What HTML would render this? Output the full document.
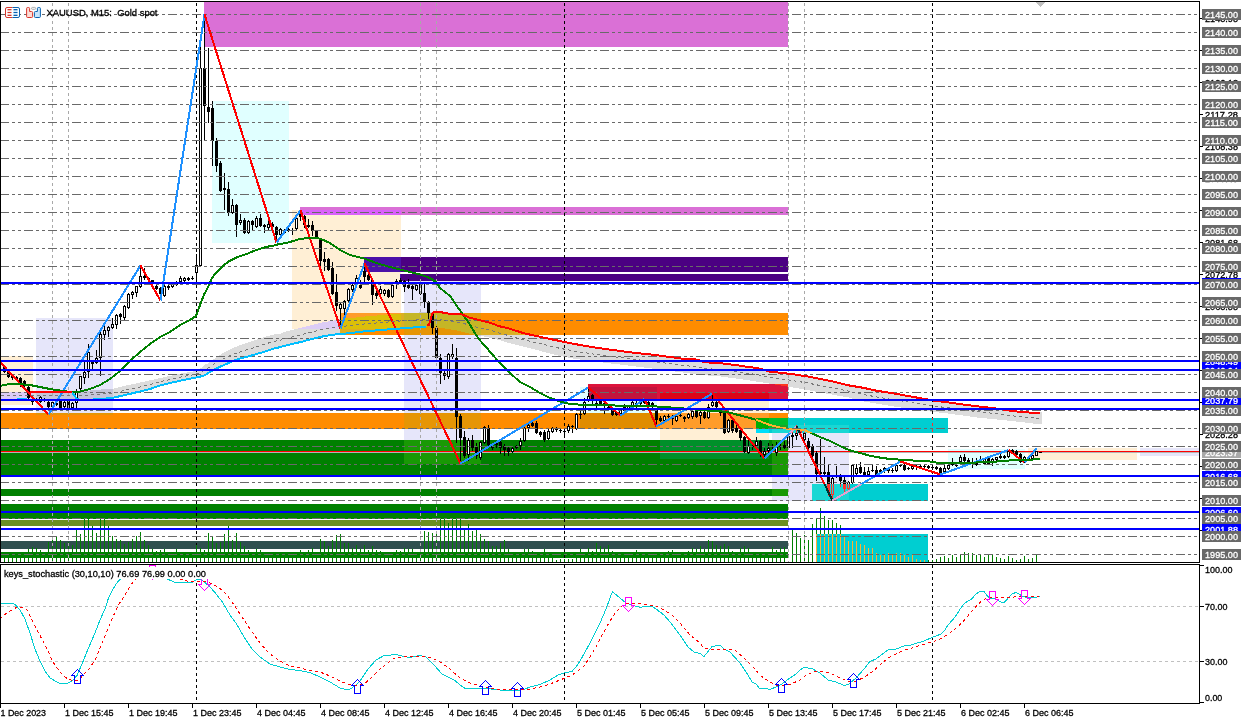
<!DOCTYPE html>
<html lang="en"><head><meta charset="utf-8"><title>XAUUSD, M15: Gold spot</title>
<style>html,body{margin:0;padding:0;background:#fff}svg{display:block;will-change:transform}text{font-family:"Liberation Sans",sans-serif;font-size:9.6px;stroke-width:.3px}</style></head><body>
<svg width="1250" height="720" viewBox="0 0 1250 720" shape-rendering="crispEdges">
<defs>
<clipPath id="main"><rect x="1" y="2" width="1198" height="560"/></clipPath>
<clipPath id="sub"><rect x="1" y="565" width="1198" height="138"/></clipPath>
<clipPath id="tq"><rect x="812" y="484" width="116" height="17"/><rect x="816" y="534" width="112" height="28"/><rect x="756" y="418" width="192" height="15"/></clipPath>
</defs>
<rect width="1250" height="720" fill="#fff"/>
<g clip-path="url(#main)">
<g id="fills">
<rect x="204" y="2" width="584" height="45" fill="#DA70D6"/>
<rect x="212" y="101" width="77" height="142" fill="#E0FFFF"/>
<rect x="300" y="207" width="488" height="3" fill="#DA70D6"/>
<rect x="292" y="210" width="8" height="118" fill="#FFEFD5"/>
<rect x="300" y="210" width="101" height="5" fill="#DA60FC"/>
<rect x="401" y="210" width="387" height="5" fill="#DA70D6"/>
<rect x="300" y="215" width="101" height="42" fill="#FFEFD5"/>
<rect x="300" y="257" width="64" height="56" fill="#FFEFD5"/>
<rect x="364" y="257" width="37" height="15" fill="#4B10A8"/>
<rect x="401" y="257" width="387" height="15" fill="#4B0082"/>
<rect x="364" y="272" width="37" height="2" fill="#FFEFD5"/>
<rect x="364" y="274" width="36" height="39" fill="#FFEFD5"/>
<rect x="400" y="274" width="1" height="7" fill="#4B10A8"/>
<rect x="401" y="274" width="387" height="7" fill="#4B0082"/>
<rect x="400" y="281" width="1" height="32" fill="#FFEFD5"/>
<rect x="404" y="281" width="77" height="31" fill="#E6E6FA"/>
<rect x="404" y="312" width="15" height="1" fill="#E6E6FA"/>
<rect x="419" y="312" width="27" height="1" fill="#C5C5D9"/>
<rect x="446" y="312" width="35" height="1" fill="#E6E6FA"/>
<rect x="300" y="313" width="40" height="6" fill="#FFEFD5"/>
<rect x="340" y="313" width="61" height="1" fill="#FF9C2A"/>
<rect x="401" y="313" width="3" height="15" fill="#DCAF23"/>
<rect x="404" y="313" width="57" height="13" fill="#C5B626"/>
<rect x="461" y="313" width="20" height="1" fill="#E69505"/>
<rect x="481" y="313" width="307" height="7" fill="#FF8C00"/>
<rect x="340" y="314" width="49" height="1" fill="#FF9C2A"/>
<rect x="389" y="314" width="12" height="14" fill="#DCBF09"/>
<rect x="461" y="314" width="3" height="18" fill="#C5B626"/>
<rect x="464" y="314" width="17" height="1" fill="#E69505"/>
<rect x="340" y="315" width="37" height="1" fill="#FF9C2A"/>
<rect x="377" y="315" width="12" height="14" fill="#DCBF09"/>
<rect x="464" y="315" width="2" height="17" fill="#C5B626"/>
<rect x="466" y="315" width="15" height="1" fill="#E69505"/>
<rect x="340" y="316" width="25" height="1" fill="#FF9C2A"/>
<rect x="365" y="316" width="12" height="13" fill="#DCBF09"/>
<rect x="466" y="316" width="2" height="17" fill="#C5B626"/>
<rect x="468" y="316" width="13" height="1" fill="#E69505"/>
<rect x="340" y="317" width="16" height="1" fill="#FF9C2A"/>
<rect x="356" y="317" width="9" height="12" fill="#DCBF09"/>
<rect x="468" y="317" width="3" height="16" fill="#C5B626"/>
<rect x="471" y="317" width="10" height="1" fill="#E69505"/>
<rect x="36" y="318" width="77" height="71" fill="#E6E6FA"/>
<rect x="340" y="318" width="5" height="1" fill="#FF9C2A"/>
<rect x="345" y="318" width="11" height="11" fill="#DCBF09"/>
<rect x="471" y="318" width="4" height="16" fill="#C5B626"/>
<rect x="475" y="318" width="6" height="1" fill="#E69505"/>
<rect x="300" y="319" width="39" height="1" fill="#FFEFD5"/>
<rect x="339" y="319" width="1" height="10" fill="#DCCCF6"/>
<rect x="340" y="319" width="5" height="10" fill="#DCBF09"/>
<rect x="475" y="319" width="4" height="16" fill="#C5B626"/>
<rect x="479" y="319" width="2" height="1" fill="#E69505"/>
<rect x="300" y="320" width="34" height="1" fill="#FFEFD5"/>
<rect x="334" y="320" width="5" height="9" fill="#DCCCF6"/>
<rect x="479" y="320" width="2" height="15" fill="#C5B626"/>
<rect x="481" y="320" width="2" height="15" fill="#DCAF23"/>
<rect x="483" y="320" width="305" height="1" fill="#FF8C00"/>
<rect x="300" y="321" width="28" height="1" fill="#FFEFD5"/>
<rect x="328" y="321" width="6" height="8" fill="#DCCCF6"/>
<rect x="483" y="321" width="4" height="14" fill="#DCAF23"/>
<rect x="487" y="321" width="301" height="1" fill="#FF8C00"/>
<rect x="300" y="322" width="22" height="1" fill="#FFEFD5"/>
<rect x="322" y="322" width="6" height="7" fill="#DCCCF6"/>
<rect x="487" y="322" width="4" height="13" fill="#DCAF23"/>
<rect x="491" y="322" width="297" height="1" fill="#FF8C00"/>
<rect x="300" y="323" width="18" height="1" fill="#FFEFD5"/>
<rect x="318" y="323" width="4" height="6" fill="#DCCCF6"/>
<rect x="491" y="323" width="3" height="12" fill="#DCAF23"/>
<rect x="494" y="323" width="294" height="1" fill="#FF8C00"/>
<rect x="300" y="324" width="14" height="1" fill="#FFEFD5"/>
<rect x="314" y="324" width="4" height="5" fill="#DCCCF6"/>
<rect x="494" y="324" width="2" height="11" fill="#DCAF23"/>
<rect x="496" y="324" width="292" height="1" fill="#FF8C00"/>
<rect x="300" y="325" width="10" height="1" fill="#FFEFD5"/>
<rect x="310" y="325" width="4" height="4" fill="#DCCCF6"/>
<rect x="496" y="325" width="3" height="10" fill="#DCAF23"/>
<rect x="499" y="325" width="289" height="1" fill="#FF8C00"/>
<rect x="300" y="326" width="6" height="1" fill="#FFEFD5"/>
<rect x="306" y="326" width="4" height="3" fill="#DCCCF6"/>
<rect x="404" y="326" width="23" height="1" fill="#C5B626"/>
<rect x="427" y="326" width="6" height="9" fill="#E69505"/>
<rect x="433" y="326" width="28" height="1" fill="#C5B626"/>
<rect x="499" y="326" width="4" height="9" fill="#DCAF23"/>
<rect x="503" y="326" width="285" height="1" fill="#FF8C00"/>
<rect x="300" y="327" width="2" height="1" fill="#FFEFD5"/>
<rect x="302" y="327" width="4" height="2" fill="#DCCCF6"/>
<rect x="404" y="327" width="10" height="1" fill="#C5B626"/>
<rect x="414" y="327" width="13" height="8" fill="#E69505"/>
<rect x="433" y="327" width="5" height="8" fill="#E69505"/>
<rect x="438" y="327" width="23" height="1" fill="#C5B626"/>
<rect x="503" y="327" width="4" height="8" fill="#DCAF23"/>
<rect x="507" y="327" width="281" height="1" fill="#FF8C00"/>
<rect x="292" y="328" width="6" height="1" fill="#FFEFD5"/>
<rect x="298" y="328" width="4" height="1" fill="#DCCCF6"/>
<rect x="389" y="328" width="11" height="1" fill="#DCBF09"/>
<rect x="400" y="328" width="1" height="1" fill="#FF9C2A"/>
<rect x="401" y="328" width="3" height="7" fill="#FF8C00"/>
<rect x="404" y="328" width="10" height="7" fill="#E69505"/>
<rect x="438" y="328" width="7" height="7" fill="#E69505"/>
<rect x="445" y="328" width="16" height="1" fill="#C5B626"/>
<rect x="507" y="328" width="4" height="7" fill="#DCAF23"/>
<rect x="511" y="328" width="277" height="1" fill="#FF8C00"/>
<rect x="294" y="329" width="46" height="5" fill="#DCDCDC"/>
<rect x="340" y="329" width="47" height="1" fill="#DCAF23"/>
<rect x="387" y="329" width="14" height="6" fill="#FF8C00"/>
<rect x="445" y="329" width="6" height="6" fill="#E69505"/>
<rect x="451" y="329" width="10" height="1" fill="#C5B626"/>
<rect x="511" y="329" width="3" height="6" fill="#DCAF23"/>
<rect x="514" y="329" width="274" height="1" fill="#FF8C00"/>
<rect x="290" y="330" width="4" height="14" fill="#DCDCDC"/>
<rect x="340" y="330" width="35" height="1" fill="#DCAF23"/>
<rect x="375" y="330" width="12" height="5" fill="#FF8C00"/>
<rect x="451" y="330" width="6" height="5" fill="#E69505"/>
<rect x="457" y="330" width="4" height="1" fill="#C5B626"/>
<rect x="514" y="330" width="3" height="5" fill="#DCAF23"/>
<rect x="517" y="330" width="271" height="1" fill="#FF8C00"/>
<rect x="286" y="331" width="4" height="14" fill="#DCDCDC"/>
<rect x="340" y="331" width="24" height="1" fill="#DCAF23"/>
<rect x="364" y="331" width="11" height="4" fill="#FF8C00"/>
<rect x="457" y="331" width="4" height="4" fill="#E69505"/>
<rect x="517" y="331" width="4" height="4" fill="#DCAF23"/>
<rect x="521" y="331" width="267" height="1" fill="#FF8C00"/>
<rect x="283" y="332" width="3" height="14" fill="#DCDCDC"/>
<rect x="340" y="332" width="15" height="1" fill="#DCAF23"/>
<rect x="355" y="332" width="9" height="3" fill="#FF8C00"/>
<rect x="461" y="332" width="4" height="3" fill="#E69505"/>
<rect x="465" y="332" width="1" height="1" fill="#C5B626"/>
<rect x="521" y="332" width="3" height="3" fill="#DCAF23"/>
<rect x="524" y="332" width="264" height="1" fill="#FF8C00"/>
<rect x="281" y="333" width="2" height="14" fill="#DCDCDC"/>
<rect x="340" y="333" width="7" height="1" fill="#DCAF23"/>
<rect x="347" y="333" width="8" height="2" fill="#FF8C00"/>
<rect x="465" y="333" width="4" height="2" fill="#E69505"/>
<rect x="469" y="333" width="2" height="1" fill="#C5B626"/>
<rect x="524" y="333" width="3" height="2" fill="#DCAF23"/>
<rect x="527" y="333" width="261" height="1" fill="#FF8C00"/>
<rect x="274" y="334" width="7" height="13" fill="#DCDCDC"/>
<rect x="294" y="334" width="42" height="1" fill="#DCDCDC"/>
<rect x="340" y="334" width="7" height="1" fill="#FF8C00"/>
<rect x="469" y="334" width="4" height="1" fill="#E69505"/>
<rect x="473" y="334" width="2" height="1" fill="#C5B626"/>
<rect x="527" y="334" width="5" height="1" fill="#DCAF23"/>
<rect x="532" y="334" width="256" height="1" fill="#FF8C00"/>
<rect x="270" y="335" width="4" height="14" fill="#DCDCDC"/>
<rect x="294" y="335" width="34" height="1" fill="#DCDCDC"/>
<rect x="404" y="335" width="74" height="78" fill="#E6E6FA"/>
<rect x="478" y="335" width="3" height="1" fill="#C5C5D9"/>
<rect x="481" y="335" width="56" height="1" fill="#DCDCDC"/>
<rect x="266" y="336" width="4" height="14" fill="#DCDCDC"/>
<rect x="294" y="336" width="29" height="1" fill="#DCDCDC"/>
<rect x="478" y="336" width="3" height="77" fill="#E6E6FA"/>
<rect x="484" y="336" width="58" height="1" fill="#DCDCDC"/>
<rect x="263" y="337" width="3" height="15" fill="#DCDCDC"/>
<rect x="294" y="337" width="25" height="1" fill="#DCDCDC"/>
<rect x="489" y="337" width="57" height="1" fill="#DCDCDC"/>
<rect x="260" y="338" width="3" height="15" fill="#DCDCDC"/>
<rect x="294" y="338" width="21" height="1" fill="#DCDCDC"/>
<rect x="493" y="338" width="58" height="1" fill="#DCDCDC"/>
<rect x="257" y="339" width="3" height="14" fill="#DCDCDC"/>
<rect x="294" y="339" width="17" height="1" fill="#DCDCDC"/>
<rect x="497" y="339" width="58" height="1" fill="#DCDCDC"/>
<rect x="254" y="340" width="3" height="14" fill="#DCDCDC"/>
<rect x="294" y="340" width="13" height="1" fill="#DCDCDC"/>
<rect x="501" y="340" width="59" height="1" fill="#DCDCDC"/>
<rect x="251" y="341" width="3" height="14" fill="#DCDCDC"/>
<rect x="294" y="341" width="9" height="1" fill="#DCDCDC"/>
<rect x="504" y="341" width="61" height="1" fill="#DCDCDC"/>
<rect x="248" y="342" width="3" height="14" fill="#DCDCDC"/>
<rect x="294" y="342" width="5" height="1" fill="#DCDCDC"/>
<rect x="507" y="342" width="63" height="1" fill="#DCDCDC"/>
<rect x="245" y="343" width="3" height="14" fill="#DCDCDC"/>
<rect x="294" y="343" width="1" height="1" fill="#DCDCDC"/>
<rect x="511" y="343" width="64" height="1" fill="#DCDCDC"/>
<rect x="242" y="344" width="3" height="14" fill="#DCDCDC"/>
<rect x="515" y="344" width="66" height="1" fill="#DCDCDC"/>
<rect x="239" y="345" width="3" height="13" fill="#DCDCDC"/>
<rect x="286" y="345" width="1" height="1" fill="#DCDCDC"/>
<rect x="519" y="345" width="67" height="1" fill="#DCDCDC"/>
<rect x="237" y="346" width="2" height="13" fill="#DCDCDC"/>
<rect x="523" y="346" width="70" height="1" fill="#DCDCDC"/>
<rect x="234" y="347" width="3" height="13" fill="#DCDCDC"/>
<rect x="274" y="347" width="5" height="1" fill="#DCDCDC"/>
<rect x="527" y="347" width="71" height="1" fill="#DCDCDC"/>
<rect x="232" y="348" width="2" height="13" fill="#DCDCDC"/>
<rect x="274" y="348" width="1" height="1" fill="#DCDCDC"/>
<rect x="531" y="348" width="75" height="1" fill="#DCDCDC"/>
<rect x="230" y="349" width="2" height="13" fill="#DCDCDC"/>
<rect x="270" y="349" width="1" height="1" fill="#DCDCDC"/>
<rect x="535" y="349" width="78" height="1" fill="#DCDCDC"/>
<rect x="228" y="350" width="2" height="13" fill="#DCDCDC"/>
<rect x="266" y="350" width="2" height="1" fill="#DCDCDC"/>
<rect x="539" y="350" width="82" height="1" fill="#DCDCDC"/>
<rect x="226" y="351" width="2" height="13" fill="#DCDCDC"/>
<rect x="542" y="351" width="86" height="1" fill="#DCDCDC"/>
<rect x="224" y="352" width="2" height="13" fill="#DCDCDC"/>
<rect x="546" y="352" width="91" height="1" fill="#DCDCDC"/>
<rect x="222" y="353" width="2" height="12" fill="#DCDCDC"/>
<rect x="257" y="353" width="2" height="1" fill="#DCDCDC"/>
<rect x="550" y="353" width="96" height="1" fill="#DCDCDC"/>
<rect x="221" y="354" width="1" height="12" fill="#DCDCDC"/>
<rect x="254" y="354" width="1" height="1" fill="#DCDCDC"/>
<rect x="554" y="354" width="102" height="1" fill="#DCDCDC"/>
<rect x="219" y="355" width="2" height="12" fill="#DCDCDC"/>
<rect x="251" y="355" width="1" height="1" fill="#DCDCDC"/>
<rect x="558" y="355" width="105" height="1" fill="#DCDCDC"/>
<rect x="1" y="356" width="32" height="36" fill="#FFEFD5"/>
<rect x="217" y="356" width="2" height="12" fill="#DCDCDC"/>
<rect x="248" y="356" width="1" height="1" fill="#DCDCDC"/>
<rect x="563" y="356" width="108" height="1" fill="#DCDCDC"/>
<rect x="216" y="357" width="1" height="12" fill="#DCDCDC"/>
<rect x="568" y="357" width="110" height="1" fill="#DCDCDC"/>
<rect x="215" y="358" width="1" height="11" fill="#DCDCDC"/>
<rect x="239" y="358" width="2" height="1" fill="#DCDCDC"/>
<rect x="573" y="358" width="117" height="1" fill="#DCDCDC"/>
<rect x="213" y="359" width="2" height="11" fill="#DCDCDC"/>
<rect x="237" y="359" width="1" height="1" fill="#DCDCDC"/>
<rect x="580" y="359" width="119" height="1" fill="#DCDCDC"/>
<rect x="212" y="360" width="1" height="11" fill="#DCDCDC"/>
<rect x="234" y="360" width="1" height="1" fill="#DCDCDC"/>
<rect x="588" y="360" width="113" height="1" fill="#DCDCDC"/>
<rect x="211" y="361" width="1" height="10" fill="#DCDCDC"/>
<rect x="595" y="361" width="109" height="1" fill="#DCDCDC"/>
<rect x="209" y="362" width="2" height="10" fill="#DCDCDC"/>
<rect x="603" y="362" width="113" height="1" fill="#DCDCDC"/>
<rect x="208" y="363" width="1" height="10" fill="#DCDCDC"/>
<rect x="611" y="363" width="118" height="1" fill="#DCDCDC"/>
<rect x="205" y="364" width="3" height="10" fill="#DCDCDC"/>
<rect x="620" y="364" width="115" height="1" fill="#DCDCDC"/>
<rect x="204" y="365" width="1" height="11" fill="#DCDCDC"/>
<rect x="222" y="365" width="1" height="1" fill="#DCDCDC"/>
<rect x="628" y="365" width="114" height="1" fill="#DCDCDC"/>
<rect x="203" y="366" width="1" height="10" fill="#DCDCDC"/>
<rect x="636" y="366" width="113" height="1" fill="#DCDCDC"/>
<rect x="202" y="367" width="1" height="9" fill="#DCDCDC"/>
<rect x="644" y="367" width="113" height="1" fill="#DCDCDC"/>
<rect x="200" y="368" width="2" height="8" fill="#DCDCDC"/>
<rect x="652" y="368" width="109" height="1" fill="#DCDCDC"/>
<rect x="199" y="369" width="1" height="8" fill="#DCDCDC"/>
<rect x="660" y="369" width="105" height="1" fill="#DCDCDC"/>
<rect x="197" y="370" width="2" height="7" fill="#DCDCDC"/>
<rect x="668" y="370" width="100" height="1" fill="#DCDCDC"/>
<rect x="193" y="371" width="4" height="7" fill="#DCDCDC"/>
<rect x="675" y="371" width="99" height="1" fill="#DCDCDC"/>
<rect x="187" y="372" width="6" height="6" fill="#DCDCDC"/>
<rect x="209" y="372" width="1" height="1" fill="#DCDCDC"/>
<rect x="683" y="372" width="101" height="1" fill="#DCDCDC"/>
<rect x="181" y="373" width="6" height="7" fill="#DCDCDC"/>
<rect x="690" y="373" width="101" height="1" fill="#DCDCDC"/>
<rect x="176" y="374" width="5" height="7" fill="#DCDCDC"/>
<rect x="205" y="374" width="1" height="1" fill="#DCDCDC"/>
<rect x="697" y="374" width="102" height="1" fill="#DCDCDC"/>
<rect x="172" y="375" width="4" height="7" fill="#DCDCDC"/>
<rect x="708" y="375" width="98" height="1" fill="#DCDCDC"/>
<rect x="167" y="376" width="5" height="7" fill="#DCDCDC"/>
<rect x="200" y="376" width="1" height="1" fill="#DCDCDC"/>
<rect x="721" y="376" width="90" height="1" fill="#DCDCDC"/>
<rect x="163" y="377" width="4" height="7" fill="#DCDCDC"/>
<rect x="728" y="377" width="88" height="1" fill="#DCDCDC"/>
<rect x="158" y="378" width="5" height="7" fill="#DCDCDC"/>
<rect x="187" y="378" width="4" height="1" fill="#DCDCDC"/>
<rect x="736" y="378" width="85" height="1" fill="#DCDCDC"/>
<rect x="154" y="379" width="4" height="8" fill="#DCDCDC"/>
<rect x="743" y="379" width="83" height="1" fill="#DCDCDC"/>
<rect x="149" y="380" width="5" height="8" fill="#DCDCDC"/>
<rect x="750" y="380" width="81" height="1" fill="#DCDCDC"/>
<rect x="145" y="381" width="4" height="9" fill="#DCDCDC"/>
<rect x="176" y="381" width="1" height="1" fill="#DCDCDC"/>
<rect x="756" y="381" width="80" height="1" fill="#DCDCDC"/>
<rect x="140" y="382" width="5" height="8" fill="#DCDCDC"/>
<rect x="172" y="382" width="1" height="1" fill="#DCDCDC"/>
<rect x="763" y="382" width="77" height="1" fill="#DCDCDC"/>
<rect x="136" y="383" width="4" height="9" fill="#DCDCDC"/>
<rect x="167" y="383" width="2" height="1" fill="#DCDCDC"/>
<rect x="769" y="383" width="75" height="1" fill="#DCDCDC"/>
<rect x="131" y="384" width="5" height="9" fill="#DCDCDC"/>
<rect x="163" y="384" width="2" height="1" fill="#DCDCDC"/>
<rect x="588" y="384" width="187" height="3" fill="#DC143C"/>
<rect x="775" y="384" width="13" height="1" fill="#FF371F"/>
<rect x="788" y="384" width="60" height="3" fill="#DCDCDC"/>
<rect x="126" y="385" width="5" height="9" fill="#DCDCDC"/>
<rect x="158" y="385" width="3" height="1" fill="#DCDCDC"/>
<rect x="775" y="385" width="6" height="14" fill="#DC143C"/>
<rect x="781" y="385" width="7" height="1" fill="#FF371F"/>
<rect x="848" y="385" width="5" height="12" fill="#DCDCDC"/>
<rect x="122" y="386" width="4" height="9" fill="#DCDCDC"/>
<rect x="781" y="386" width="6" height="13" fill="#DC143C"/>
<rect x="787" y="386" width="1" height="1" fill="#FF371F"/>
<rect x="853" y="386" width="6" height="13" fill="#DCDCDC"/>
<rect x="118" y="387" width="4" height="9" fill="#DCDCDC"/>
<rect x="154" y="387" width="1" height="1" fill="#DCDCDC"/>
<rect x="580" y="387" width="8" height="26" fill="#E0FFFF"/>
<rect x="588" y="387" width="69" height="12" fill="#C3143C"/>
<rect x="657" y="387" width="118" height="6" fill="#DC143C"/>
<rect x="787" y="387" width="1" height="12" fill="#DC143C"/>
<rect x="793" y="387" width="55" height="1" fill="#DCDCDC"/>
<rect x="859" y="387" width="6" height="14" fill="#DCDCDC"/>
<rect x="114" y="388" width="4" height="9" fill="#DCDCDC"/>
<rect x="149" y="388" width="3" height="1" fill="#DCDCDC"/>
<rect x="799" y="388" width="49" height="1" fill="#DCDCDC"/>
<rect x="865" y="388" width="4" height="14" fill="#DCDCDC"/>
<rect x="36" y="389" width="65" height="1" fill="#E6E6FA"/>
<rect x="101" y="389" width="12" height="9" fill="#C5C5D9"/>
<rect x="113" y="389" width="1" height="9" fill="#DCDCDC"/>
<rect x="805" y="389" width="43" height="1" fill="#DCDCDC"/>
<rect x="869" y="389" width="5" height="13" fill="#DCDCDC"/>
<rect x="36" y="390" width="54" height="1" fill="#E6E6FA"/>
<rect x="90" y="390" width="11" height="9" fill="#C5C5D9"/>
<rect x="140" y="390" width="4" height="1" fill="#DCDCDC"/>
<rect x="810" y="390" width="38" height="1" fill="#DCDCDC"/>
<rect x="874" y="390" width="5" height="13" fill="#DCDCDC"/>
<rect x="36" y="391" width="43" height="1" fill="#E6E6FA"/>
<rect x="79" y="391" width="11" height="9" fill="#C5C5D9"/>
<rect x="140" y="391" width="1" height="1" fill="#DCDCDC"/>
<rect x="815" y="391" width="33" height="1" fill="#DCDCDC"/>
<rect x="879" y="391" width="6" height="13" fill="#DCDCDC"/>
<rect x="1" y="392" width="32" height="7" fill="#DCCCF6"/>
<rect x="33" y="392" width="3" height="7" fill="#DCDCDC"/>
<rect x="36" y="392" width="43" height="7" fill="#C5C5D9"/>
<rect x="820" y="392" width="28" height="1" fill="#DCDCDC"/>
<rect x="885" y="392" width="6" height="13" fill="#DCDCDC"/>
<rect x="131" y="393" width="1" height="1" fill="#DCDCDC"/>
<rect x="657" y="393" width="3" height="6" fill="#DC143C"/>
<rect x="660" y="393" width="109" height="6" fill="#DC0416"/>
<rect x="769" y="393" width="6" height="6" fill="#DC143C"/>
<rect x="826" y="393" width="22" height="1" fill="#DCDCDC"/>
<rect x="891" y="393" width="6" height="13" fill="#DCDCDC"/>
<rect x="126" y="394" width="2" height="1" fill="#DCDCDC"/>
<rect x="832" y="394" width="16" height="1" fill="#DCDCDC"/>
<rect x="897" y="394" width="6" height="13" fill="#DCDCDC"/>
<rect x="122" y="395" width="1" height="1" fill="#DCDCDC"/>
<rect x="837" y="395" width="11" height="1" fill="#DCDCDC"/>
<rect x="903" y="395" width="6" height="13" fill="#DCDCDC"/>
<rect x="118" y="396" width="1" height="1" fill="#DCDCDC"/>
<rect x="843" y="396" width="5" height="1" fill="#DCDCDC"/>
<rect x="909" y="396" width="5" height="13" fill="#DCDCDC"/>
<rect x="114" y="397" width="1" height="1" fill="#DCDCDC"/>
<rect x="849" y="397" width="4" height="1" fill="#DCDCDC"/>
<rect x="914" y="397" width="6" height="13" fill="#DCDCDC"/>
<rect x="101" y="398" width="5" height="1" fill="#C5C5D9"/>
<rect x="106" y="398" width="7" height="15" fill="#E6E6FA"/>
<rect x="852" y="398" width="1" height="1" fill="#DCDCDC"/>
<rect x="920" y="398" width="5" height="12" fill="#DCDCDC"/>
<rect x="1" y="399" width="32" height="6" fill="#FFEFD5"/>
<rect x="36" y="399" width="43" height="14" fill="#E6E6FA"/>
<rect x="90" y="399" width="4" height="1" fill="#C5C5D9"/>
<rect x="94" y="399" width="12" height="14" fill="#E6E6FA"/>
<rect x="588" y="399" width="69" height="14" fill="#E0FFFF"/>
<rect x="660" y="399" width="109" height="14" fill="#FFEFD5"/>
<rect x="856" y="399" width="3" height="1" fill="#DCDCDC"/>
<rect x="925" y="399" width="6" height="12" fill="#DCDCDC"/>
<rect x="79" y="400" width="15" height="13" fill="#E6E6FA"/>
<rect x="931" y="400" width="6" height="12" fill="#DCDCDC"/>
<rect x="864" y="401" width="1" height="1" fill="#DCDCDC"/>
<rect x="937" y="401" width="8" height="11" fill="#DCDCDC"/>
<rect x="870" y="402" width="4" height="1" fill="#DCDCDC"/>
<rect x="945" y="402" width="8" height="11" fill="#DCDCDC"/>
<rect x="876" y="403" width="3" height="1" fill="#DCDCDC"/>
<rect x="953" y="403" width="7" height="11" fill="#DCDCDC"/>
<rect x="882" y="404" width="3" height="1" fill="#DCDCDC"/>
<rect x="960" y="404" width="8" height="11" fill="#DCDCDC"/>
<rect x="888" y="405" width="3" height="1" fill="#DCDCDC"/>
<rect x="968" y="405" width="8" height="11" fill="#DCDCDC"/>
<rect x="894" y="406" width="3" height="1" fill="#DCDCDC"/>
<rect x="976" y="406" width="8" height="11" fill="#DCDCDC"/>
<rect x="901" y="407" width="2" height="1" fill="#DCDCDC"/>
<rect x="984" y="407" width="9" height="11" fill="#DCDCDC"/>
<rect x="908" y="408" width="1" height="1" fill="#DCDCDC"/>
<rect x="993" y="408" width="7" height="11" fill="#DCDCDC"/>
<rect x="1000" y="409" width="6" height="11" fill="#DCDCDC"/>
<rect x="921" y="410" width="4" height="1" fill="#DCDCDC"/>
<rect x="1006" y="410" width="7" height="10" fill="#DCDCDC"/>
<rect x="930" y="411" width="1" height="1" fill="#DCDCDC"/>
<rect x="1013" y="411" width="10" height="10" fill="#DCDCDC"/>
<rect x="939" y="412" width="6" height="1" fill="#DCDCDC"/>
<rect x="1023" y="412" width="19" height="10" fill="#DCDCDC"/>
<rect x="1" y="413" width="35" height="16" fill="#FF8C00"/>
<rect x="36" y="413" width="77" height="2" fill="#E69505"/>
<rect x="113" y="413" width="291" height="16" fill="#FF8C00"/>
<rect x="404" y="413" width="77" height="16" fill="#E69505"/>
<rect x="481" y="413" width="99" height="16" fill="#FF8C00"/>
<rect x="580" y="413" width="77" height="15" fill="#E08C00"/>
<rect x="657" y="413" width="3" height="16" fill="#FF8C00"/>
<rect x="660" y="413" width="109" height="5" fill="#FF9C2A"/>
<rect x="769" y="413" width="19" height="5" fill="#FF8C00"/>
<rect x="948" y="413" width="5" height="1" fill="#DCDCDC"/>
<rect x="955" y="414" width="5" height="1" fill="#DCDCDC"/>
<rect x="36" y="415" width="77" height="14" fill="#FF8C00"/>
<rect x="963" y="415" width="5" height="1" fill="#DCDCDC"/>
<rect x="970" y="416" width="6" height="1" fill="#DCDCDC"/>
<rect x="977" y="417" width="7" height="1" fill="#DCDCDC"/>
<rect x="660" y="418" width="96" height="11" fill="#FF9C2A"/>
<rect x="756" y="418" width="13" height="11" fill="#00AD04"/>
<rect x="769" y="418" width="19" height="7" fill="#00BD2E"/>
<rect x="788" y="418" width="160" height="7" fill="#00CED1"/>
<rect x="987" y="418" width="6" height="1" fill="#DCDCDC"/>
<rect x="997" y="419" width="3" height="1" fill="#DCDCDC"/>
<rect x="1007" y="420" width="6" height="1" fill="#DCDCDC"/>
<rect x="1016" y="421" width="7" height="1" fill="#DCDCDC"/>
<rect x="1025" y="422" width="17" height="1" fill="#DCDCDC"/>
<rect x="1033" y="423" width="9" height="1" fill="#DCDCDC"/>
<rect x="769" y="425" width="3" height="4" fill="#00BD2E"/>
<rect x="772" y="425" width="16" height="4" fill="#19A42B"/>
<rect x="788" y="425" width="61" height="8" fill="#19D7D4"/>
<rect x="849" y="425" width="99" height="8" fill="#00CED1"/>
<rect x="580" y="428" width="77" height="1" fill="#FF8C00"/>
<rect x="404" y="429" width="77" height="11" fill="#E6E6FA"/>
<rect x="660" y="429" width="96" height="11" fill="#FFEFD5"/>
<rect x="756" y="429" width="13" height="4" fill="#00DEFB"/>
<rect x="769" y="429" width="3" height="4" fill="#00CED1"/>
<rect x="772" y="429" width="16" height="4" fill="#19D7D4"/>
<rect x="756" y="433" width="13" height="7" fill="#FFEFD5"/>
<rect x="772" y="433" width="77" height="7" fill="#E6E6FA"/>
<rect x="1" y="440" width="403" height="36" fill="#008000"/>
<rect x="404" y="440" width="77" height="24" fill="#199905"/>
<rect x="481" y="440" width="179" height="36" fill="#008000"/>
<rect x="660" y="440" width="109" height="19" fill="#00902A"/>
<rect x="769" y="440" width="3" height="36" fill="#008000"/>
<rect x="772" y="440" width="16" height="36" fill="#199905"/>
<rect x="788" y="440" width="61" height="44" fill="#E6E6FA"/>
<rect x="1028" y="448" width="109" height="12" fill="#FFEFD5"/>
<rect x="1140" y="448" width="59" height="8" fill="#E6E6FA"/>
<rect x="948" y="449" width="77" height="20" fill="#E0FFFF"/>
<rect x="660" y="459" width="109" height="17" fill="#008000"/>
<rect x="404" y="464" width="77" height="12" fill="#008000"/>
<rect x="772" y="476" width="16" height="13" fill="#E6E6FA"/>
<rect x="788" y="484" width="24" height="17" fill="#E6E6FA"/>
<rect x="812" y="484" width="37" height="17" fill="#19D7D4"/>
<rect x="849" y="484" width="79" height="17" fill="#00CED1"/>
<rect x="1" y="489" width="771" height="7" fill="#008000"/>
<rect x="772" y="489" width="16" height="7" fill="#199905"/>
<rect x="772" y="496" width="16" height="5" fill="#E6E6FA"/>
<rect x="1" y="504" width="787" height="15" fill="#008000"/>
<rect x="1" y="520" width="787" height="6" fill="#6B8E23"/>
<rect x="816" y="534" width="112" height="28" fill="#00CED1"/>
<rect x="1" y="541" width="787" height="8" fill="#2F4F4F"/>
<rect x="1" y="552" width="787" height="6" fill="#008000"/>
</g>
<g id="bidask"><rect x="1" y="451" width="1198" height="1" fill="#FF0000"/><rect x="1" y="452" width="1198" height="1" fill="#B4B4B4"/></g>
<g id="separators"><line x1="196.5" y1="2" x2="196.5" y2="562" stroke="#000" stroke-width="1" stroke-dasharray="3 3" stroke-dashoffset="-1"/>
<line x1="564.5" y1="2" x2="564.5" y2="562" stroke="#000" stroke-width="1" stroke-dasharray="3 3" stroke-dashoffset="-1"/>
<line x1="932.5" y1="2" x2="932.5" y2="562" stroke="#000" stroke-width="1" stroke-dasharray="3 3" stroke-dashoffset="-1"/></g>
<g id="volumes"><rect x="4" y="557" width="1" height="5" fill="#008000"/>
<rect x="8" y="557" width="1" height="5" fill="#008000"/>
<rect x="12" y="557" width="1" height="5" fill="#008000"/>
<rect x="16" y="557" width="1" height="5" fill="#008000"/>
<rect x="20" y="557" width="1" height="5" fill="#008000"/>
<rect x="24" y="557" width="1" height="5" fill="#008000"/>
<rect x="28" y="549" width="1" height="13" fill="#008000"/>
<rect x="32" y="547" width="1" height="15" fill="#008000"/>
<rect x="36" y="548" width="1" height="14" fill="#008000"/>
<rect x="40" y="550" width="1" height="12" fill="#008000"/>
<rect x="44" y="558" width="1" height="4" fill="#008000"/>
<rect x="48" y="542" width="1" height="20" fill="#008000"/>
<rect x="52" y="540" width="1" height="22" fill="#008000"/>
<rect x="56" y="537" width="1" height="25" fill="#008000"/>
<rect x="60" y="540" width="1" height="22" fill="#008000"/>
<rect x="64" y="543" width="1" height="19" fill="#008000"/>
<rect x="68" y="542" width="1" height="20" fill="#008000"/>
<rect x="72" y="545" width="1" height="17" fill="#008000"/>
<rect x="76" y="530" width="1" height="32" fill="#008000"/>
<rect x="80" y="534" width="1" height="28" fill="#008000"/>
<rect x="84" y="519" width="1" height="43" fill="#008000"/>
<rect x="88" y="519" width="1" height="43" fill="#008000"/>
<rect x="92" y="526" width="1" height="36" fill="#008000"/>
<rect x="96" y="533" width="1" height="29" fill="#008000"/>
<rect x="100" y="519" width="1" height="43" fill="#008000"/>
<rect x="104" y="519" width="1" height="43" fill="#008000"/>
<rect x="108" y="526" width="1" height="36" fill="#008000"/>
<rect x="112" y="536" width="1" height="26" fill="#008000"/>
<rect x="116" y="539" width="1" height="23" fill="#008000"/>
<rect x="120" y="540" width="1" height="22" fill="#008000"/>
<rect x="124" y="544" width="1" height="18" fill="#008000"/>
<rect x="128" y="542" width="1" height="20" fill="#008000"/>
<rect x="132" y="539" width="1" height="23" fill="#008000"/>
<rect x="136" y="536" width="1" height="26" fill="#008000"/>
<rect x="140" y="532" width="1" height="30" fill="#008000"/>
<rect x="144" y="540" width="1" height="22" fill="#008000"/>
<rect x="148" y="545" width="1" height="17" fill="#008000"/>
<rect x="152" y="549" width="1" height="13" fill="#008000"/>
<rect x="156" y="551" width="1" height="11" fill="#008000"/>
<rect x="160" y="550" width="1" height="12" fill="#008000"/>
<rect x="164" y="549" width="1" height="13" fill="#008000"/>
<rect x="168" y="558" width="1" height="4" fill="#008000"/>
<rect x="172" y="558" width="1" height="4" fill="#008000"/>
<rect x="176" y="549" width="1" height="13" fill="#008000"/>
<rect x="180" y="558" width="1" height="4" fill="#008000"/>
<rect x="184" y="558" width="1" height="4" fill="#008000"/>
<rect x="188" y="558" width="1" height="4" fill="#008000"/>
<rect x="192" y="558" width="1" height="4" fill="#008000"/>
<rect x="196" y="545" width="1" height="17" fill="#008000"/>
<rect x="200" y="548" width="1" height="14" fill="#008000"/>
<rect x="204" y="550" width="1" height="12" fill="#008000"/>
<rect x="208" y="533" width="1" height="29" fill="#008000"/>
<rect x="212" y="537" width="1" height="25" fill="#008000"/>
<rect x="216" y="543" width="1" height="19" fill="#008000"/>
<rect x="220" y="542" width="1" height="20" fill="#008000"/>
<rect x="224" y="534" width="1" height="28" fill="#008000"/>
<rect x="228" y="526" width="1" height="36" fill="#008000"/>
<rect x="232" y="540" width="1" height="22" fill="#008000"/>
<rect x="236" y="533" width="1" height="29" fill="#008000"/>
<rect x="240" y="542" width="1" height="20" fill="#008000"/>
<rect x="244" y="546" width="1" height="16" fill="#008000"/>
<rect x="248" y="550" width="1" height="12" fill="#008000"/>
<rect x="252" y="558" width="1" height="4" fill="#008000"/>
<rect x="256" y="549" width="1" height="13" fill="#008000"/>
<rect x="260" y="550" width="1" height="12" fill="#008000"/>
<rect x="264" y="558" width="1" height="4" fill="#008000"/>
<rect x="268" y="558" width="1" height="4" fill="#008000"/>
<rect x="272" y="558" width="1" height="4" fill="#008000"/>
<rect x="276" y="558" width="1" height="4" fill="#008000"/>
<rect x="280" y="558" width="1" height="4" fill="#008000"/>
<rect x="284" y="558" width="1" height="4" fill="#008000"/>
<rect x="288" y="558" width="1" height="4" fill="#008000"/>
<rect x="292" y="558" width="1" height="4" fill="#008000"/>
<rect x="296" y="558" width="1" height="4" fill="#008000"/>
<rect x="300" y="550" width="1" height="12" fill="#008000"/>
<rect x="304" y="558" width="1" height="4" fill="#008000"/>
<rect x="308" y="550" width="1" height="12" fill="#008000"/>
<rect x="312" y="548" width="1" height="14" fill="#008000"/>
<rect x="316" y="558" width="1" height="4" fill="#008000"/>
<rect x="320" y="539" width="1" height="23" fill="#008000"/>
<rect x="324" y="541" width="1" height="21" fill="#008000"/>
<rect x="328" y="546" width="1" height="16" fill="#008000"/>
<rect x="332" y="540" width="1" height="22" fill="#008000"/>
<rect x="336" y="535" width="1" height="27" fill="#008000"/>
<rect x="340" y="534" width="1" height="28" fill="#008000"/>
<rect x="344" y="543" width="1" height="19" fill="#008000"/>
<rect x="348" y="543" width="1" height="19" fill="#008000"/>
<rect x="352" y="548" width="1" height="14" fill="#008000"/>
<rect x="356" y="545" width="1" height="17" fill="#008000"/>
<rect x="360" y="549" width="1" height="13" fill="#008000"/>
<rect x="364" y="545" width="1" height="17" fill="#008000"/>
<rect x="368" y="550" width="1" height="12" fill="#008000"/>
<rect x="372" y="546" width="1" height="16" fill="#008000"/>
<rect x="376" y="550" width="1" height="12" fill="#008000"/>
<rect x="380" y="551" width="1" height="11" fill="#008000"/>
<rect x="384" y="558" width="1" height="4" fill="#008000"/>
<rect x="388" y="558" width="1" height="4" fill="#008000"/>
<rect x="392" y="558" width="1" height="4" fill="#008000"/>
<rect x="396" y="550" width="1" height="12" fill="#008000"/>
<rect x="400" y="551" width="1" height="11" fill="#008000"/>
<rect x="404" y="548" width="1" height="14" fill="#008000"/>
<rect x="408" y="549" width="1" height="13" fill="#008000"/>
<rect x="412" y="549" width="1" height="13" fill="#008000"/>
<rect x="416" y="558" width="1" height="4" fill="#008000"/>
<rect x="420" y="558" width="1" height="4" fill="#008000"/>
<rect x="424" y="531" width="1" height="31" fill="#008000"/>
<rect x="428" y="532" width="1" height="30" fill="#008000"/>
<rect x="432" y="533" width="1" height="29" fill="#008000"/>
<rect x="436" y="531" width="1" height="31" fill="#008000"/>
<rect x="440" y="519" width="1" height="43" fill="#008000"/>
<rect x="444" y="519" width="1" height="43" fill="#008000"/>
<rect x="448" y="523" width="1" height="39" fill="#008000"/>
<rect x="452" y="519" width="1" height="43" fill="#008000"/>
<rect x="456" y="519" width="1" height="43" fill="#008000"/>
<rect x="460" y="519" width="1" height="43" fill="#008000"/>
<rect x="464" y="529" width="1" height="33" fill="#008000"/>
<rect x="468" y="524" width="1" height="38" fill="#008000"/>
<rect x="472" y="531" width="1" height="31" fill="#008000"/>
<rect x="476" y="530" width="1" height="32" fill="#008000"/>
<rect x="480" y="534" width="1" height="28" fill="#008000"/>
<rect x="484" y="539" width="1" height="23" fill="#008000"/>
<rect x="488" y="541" width="1" height="21" fill="#008000"/>
<rect x="492" y="546" width="1" height="16" fill="#008000"/>
<rect x="496" y="546" width="1" height="16" fill="#008000"/>
<rect x="500" y="543" width="1" height="19" fill="#008000"/>
<rect x="504" y="540" width="1" height="22" fill="#008000"/>
<rect x="508" y="549" width="1" height="13" fill="#008000"/>
<rect x="512" y="558" width="1" height="4" fill="#008000"/>
<rect x="516" y="558" width="1" height="4" fill="#008000"/>
<rect x="520" y="558" width="1" height="4" fill="#008000"/>
<rect x="524" y="549" width="1" height="13" fill="#008000"/>
<rect x="528" y="549" width="1" height="13" fill="#008000"/>
<rect x="532" y="551" width="1" height="11" fill="#008000"/>
<rect x="536" y="558" width="1" height="4" fill="#008000"/>
<rect x="540" y="558" width="1" height="4" fill="#008000"/>
<rect x="544" y="549" width="1" height="13" fill="#008000"/>
<rect x="548" y="558" width="1" height="4" fill="#008000"/>
<rect x="552" y="558" width="1" height="4" fill="#008000"/>
<rect x="556" y="560" width="1" height="2" fill="#008000"/>
<rect x="560" y="559" width="1" height="3" fill="#008000"/>
<rect x="564" y="559" width="1" height="3" fill="#008000"/>
<rect x="568" y="559" width="1" height="3" fill="#008000"/>
<rect x="572" y="559" width="1" height="3" fill="#008000"/>
<rect x="576" y="558" width="1" height="4" fill="#008000"/>
<rect x="580" y="549" width="1" height="13" fill="#008000"/>
<rect x="584" y="558" width="1" height="4" fill="#008000"/>
<rect x="588" y="548" width="1" height="14" fill="#008000"/>
<rect x="592" y="551" width="1" height="11" fill="#008000"/>
<rect x="596" y="543" width="1" height="19" fill="#008000"/>
<rect x="600" y="546" width="1" height="16" fill="#008000"/>
<rect x="604" y="548" width="1" height="14" fill="#008000"/>
<rect x="608" y="545" width="1" height="17" fill="#008000"/>
<rect x="612" y="551" width="1" height="11" fill="#008000"/>
<rect x="616" y="558" width="1" height="4" fill="#008000"/>
<rect x="620" y="558" width="1" height="4" fill="#008000"/>
<rect x="624" y="558" width="1" height="4" fill="#008000"/>
<rect x="628" y="558" width="1" height="4" fill="#008000"/>
<rect x="632" y="558" width="1" height="4" fill="#008000"/>
<rect x="636" y="550" width="1" height="12" fill="#008000"/>
<rect x="640" y="558" width="1" height="4" fill="#008000"/>
<rect x="644" y="558" width="1" height="4" fill="#008000"/>
<rect x="648" y="558" width="1" height="4" fill="#008000"/>
<rect x="652" y="558" width="1" height="4" fill="#008000"/>
<rect x="656" y="558" width="1" height="4" fill="#008000"/>
<rect x="660" y="558" width="1" height="4" fill="#008000"/>
<rect x="664" y="558" width="1" height="4" fill="#008000"/>
<rect x="668" y="551" width="1" height="11" fill="#008000"/>
<rect x="672" y="550" width="1" height="12" fill="#008000"/>
<rect x="676" y="558" width="1" height="4" fill="#008000"/>
<rect x="680" y="558" width="1" height="4" fill="#008000"/>
<rect x="684" y="558" width="1" height="4" fill="#008000"/>
<rect x="688" y="551" width="1" height="11" fill="#008000"/>
<rect x="692" y="548" width="1" height="14" fill="#008000"/>
<rect x="696" y="549" width="1" height="13" fill="#008000"/>
<rect x="700" y="546" width="1" height="16" fill="#008000"/>
<rect x="704" y="549" width="1" height="13" fill="#008000"/>
<rect x="708" y="540" width="1" height="22" fill="#008000"/>
<rect x="712" y="541" width="1" height="21" fill="#008000"/>
<rect x="716" y="545" width="1" height="17" fill="#008000"/>
<rect x="720" y="546" width="1" height="16" fill="#008000"/>
<rect x="724" y="544" width="1" height="18" fill="#008000"/>
<rect x="728" y="546" width="1" height="16" fill="#008000"/>
<rect x="732" y="551" width="1" height="11" fill="#008000"/>
<rect x="736" y="558" width="1" height="4" fill="#008000"/>
<rect x="740" y="548" width="1" height="14" fill="#008000"/>
<rect x="744" y="546" width="1" height="16" fill="#008000"/>
<rect x="748" y="548" width="1" height="14" fill="#008000"/>
<rect x="752" y="558" width="1" height="4" fill="#008000"/>
<rect x="756" y="558" width="1" height="4" fill="#008000"/>
<rect x="760" y="558" width="1" height="4" fill="#008000"/>
<rect x="764" y="558" width="1" height="4" fill="#008000"/>
<rect x="768" y="558" width="1" height="4" fill="#008000"/>
<rect x="772" y="547" width="1" height="15" fill="#008000"/>
<rect x="776" y="550" width="1" height="12" fill="#008000"/>
<rect x="780" y="548" width="1" height="14" fill="#008000"/>
<rect x="784" y="547" width="1" height="15" fill="#008000"/>
<rect x="792" y="530" width="1" height="32" fill="#008000"/>
<rect x="796" y="533" width="1" height="29" fill="#008000"/>
<rect x="800" y="538" width="1" height="24" fill="#008000"/>
<rect x="804" y="535" width="1" height="27" fill="#008000"/>
<rect x="808" y="540" width="1" height="22" fill="#008000"/>
<rect x="812" y="524" width="1" height="38" fill="#008000"/>
<rect x="816" y="519" width="1" height="43" fill="#008000"/>
<rect x="820" y="508" width="1" height="54" fill="#008000"/>
<rect x="824" y="516" width="1" height="46" fill="#008000"/>
<rect x="828" y="520" width="1" height="42" fill="#008000"/>
<rect x="832" y="520" width="1" height="42" fill="#008000"/>
<rect x="836" y="523" width="1" height="39" fill="#008000"/>
<rect x="840" y="525" width="1" height="37" fill="#008000"/>
<rect x="844" y="536" width="1" height="26" fill="#008000"/>
<rect x="848" y="541" width="1" height="21" fill="#008000"/>
<rect x="852" y="541" width="1" height="21" fill="#008000"/>
<rect x="856" y="541" width="1" height="21" fill="#008000"/>
<rect x="860" y="544" width="1" height="18" fill="#008000"/>
<rect x="864" y="545" width="1" height="17" fill="#008000"/>
<rect x="868" y="548" width="1" height="14" fill="#008000"/>
<rect x="872" y="548" width="1" height="14" fill="#008000"/>
<rect x="876" y="553" width="1" height="9" fill="#008000"/>
<rect x="880" y="555" width="1" height="7" fill="#008000"/>
<rect x="884" y="555" width="1" height="7" fill="#008000"/>
<rect x="888" y="553" width="1" height="9" fill="#008000"/>
<rect x="892" y="555" width="1" height="7" fill="#008000"/>
<rect x="896" y="553" width="1" height="9" fill="#008000"/>
<rect x="900" y="553" width="1" height="9" fill="#008000"/>
<rect x="904" y="555" width="1" height="7" fill="#008000"/>
<rect x="908" y="557" width="1" height="5" fill="#008000"/>
<rect x="912" y="555" width="1" height="7" fill="#008000"/>
<rect x="916" y="559" width="1" height="3" fill="#008000"/>
<rect x="920" y="560" width="1" height="2" fill="#008000"/>
<rect x="924" y="560" width="1" height="2" fill="#008000"/>
<rect x="928" y="560" width="1" height="2" fill="#008000"/>
<rect x="932" y="560" width="1" height="2" fill="#008000"/>
<rect x="936" y="559" width="1" height="3" fill="#008000"/>
<rect x="940" y="557" width="1" height="5" fill="#008000"/>
<rect x="944" y="556" width="1" height="6" fill="#008000"/>
<rect x="948" y="558" width="1" height="4" fill="#008000"/>
<rect x="952" y="555" width="1" height="7" fill="#008000"/>
<rect x="956" y="557" width="1" height="5" fill="#008000"/>
<rect x="960" y="554" width="1" height="8" fill="#008000"/>
<rect x="964" y="552" width="1" height="10" fill="#008000"/>
<rect x="968" y="553" width="1" height="9" fill="#008000"/>
<rect x="972" y="553" width="1" height="9" fill="#008000"/>
<rect x="976" y="555" width="1" height="7" fill="#008000"/>
<rect x="980" y="555" width="1" height="7" fill="#008000"/>
<rect x="984" y="557" width="1" height="5" fill="#008000"/>
<rect x="988" y="555" width="1" height="7" fill="#008000"/>
<rect x="992" y="555" width="1" height="7" fill="#008000"/>
<rect x="996" y="557" width="1" height="5" fill="#008000"/>
<rect x="1000" y="558" width="1" height="4" fill="#008000"/>
<rect x="1004" y="559" width="1" height="3" fill="#008000"/>
<rect x="1008" y="556" width="1" height="6" fill="#008000"/>
<rect x="1012" y="558" width="1" height="4" fill="#008000"/>
<rect x="1016" y="560" width="1" height="2" fill="#008000"/>
<rect x="1020" y="559" width="1" height="3" fill="#008000"/>
<rect x="1024" y="556" width="1" height="6" fill="#008000"/>
<rect x="1028" y="559" width="1" height="3" fill="#008000"/>
<rect x="1032" y="558" width="1" height="4" fill="#008000"/>
<rect x="1036" y="555" width="1" height="7" fill="#008000"/></g>
<g id="candles"><rect x="4" y="365" width="1" height="2" fill="#000"/>
<rect x="4" y="372" width="1" height="1" fill="#000"/>
<rect x="3" y="367" width="3" height="5" fill="#000"/>
<rect x="8" y="370" width="1" height="1" fill="#000"/>
<rect x="8" y="377" width="1" height="1" fill="#000"/>
<rect x="7" y="371" width="3" height="6" fill="#000"/>
<rect x="12" y="375" width="1" height="1" fill="#000"/>
<rect x="12" y="378" width="1" height="2" fill="#000"/>
<rect x="11" y="376" width="3" height="2" fill="#000"/>
<rect x="16" y="376" width="1" height="1" fill="#000"/>
<rect x="16" y="379" width="1" height="2" fill="#000"/>
<rect x="15" y="377" width="3" height="2" fill="#000"/>
<rect x="20" y="377" width="1" height="1" fill="#000"/>
<rect x="20" y="384" width="1" height="3" fill="#000"/>
<rect x="19" y="378" width="3" height="6" fill="#000"/>
<rect x="24" y="380" width="1" height="1" fill="#000"/>
<rect x="24" y="386" width="1" height="1" fill="#000"/>
<rect x="23" y="381" width="3" height="5" fill="#000"/>
<rect x="28" y="386" width="1" height="1" fill="#000"/>
<rect x="28" y="398" width="1" height="1" fill="#000"/>
<rect x="27" y="387" width="3" height="11" fill="#000"/>
<rect x="32" y="397" width="1" height="2" fill="#000"/>
<rect x="32" y="402" width="1" height="3" fill="#000"/>
<rect x="31" y="399" width="3" height="3" fill="#000"/>
<rect x="36" y="398" width="1" height="2" fill="#000"/>
<rect x="36" y="402" width="1" height="1" fill="#000"/>
<rect x="35" y="400" width="3" height="2" fill="#000"/>
<rect x="40" y="396" width="1" height="1" fill="#000"/>
<rect x="40" y="402" width="1" height="1" fill="#000"/>
<rect x="39.5" y="397.5" width="2" height="4" fill="#fff" stroke="#000" stroke-width="1"/>
<rect x="44" y="398" width="1" height="2" fill="#000"/>
<rect x="44" y="401" width="1" height="1" fill="#000"/>
<rect x="43" y="400" width="3" height="1" fill="#000"/>
<rect x="48" y="401" width="1" height="1" fill="#000"/>
<rect x="48" y="407" width="1" height="1" fill="#000"/>
<rect x="47" y="402" width="3" height="5" fill="#000"/>
<rect x="52" y="401" width="1" height="1" fill="#000"/>
<rect x="52" y="407" width="1" height="1" fill="#000"/>
<rect x="51.5" y="402.5" width="2" height="4" fill="#fff" stroke="#000" stroke-width="1"/>
<rect x="56" y="402" width="1" height="1" fill="#000"/>
<rect x="56" y="405" width="1" height="1" fill="#000"/>
<rect x="55" y="403" width="3" height="2" fill="#000"/>
<rect x="60" y="400" width="1" height="1" fill="#000"/>
<rect x="60" y="408" width="1" height="1" fill="#000"/>
<rect x="59" y="401" width="3" height="7" fill="#000"/>
<rect x="64" y="400" width="1" height="2" fill="#000"/>
<rect x="64" y="407" width="1" height="1" fill="#000"/>
<rect x="63.5" y="402.5" width="2" height="4" fill="#fff" stroke="#000" stroke-width="1"/>
<rect x="68" y="400" width="1" height="1" fill="#000"/>
<rect x="68" y="408" width="1" height="1" fill="#000"/>
<rect x="67" y="401" width="3" height="7" fill="#000"/>
<rect x="72" y="402" width="1" height="1" fill="#000"/>
<rect x="71.5" y="403.5" width="2" height="4" fill="#fff" stroke="#000" stroke-width="1"/>
<rect x="76" y="389" width="1" height="3" fill="#000"/>
<rect x="76" y="403" width="1" height="5" fill="#000"/>
<rect x="75.5" y="392.5" width="2" height="10" fill="#fff" stroke="#000" stroke-width="1"/>
<rect x="80" y="389" width="1" height="1" fill="#000"/>
<rect x="79.5" y="376.5" width="2" height="12" fill="#fff" stroke="#000" stroke-width="1"/>
<rect x="84" y="362" width="1" height="10" fill="#000"/>
<rect x="84" y="378" width="1" height="6" fill="#000"/>
<rect x="83.5" y="372.5" width="2" height="5" fill="#fff" stroke="#000" stroke-width="1"/>
<rect x="88" y="344" width="1" height="8" fill="#000"/>
<rect x="88" y="372" width="1" height="6" fill="#000"/>
<rect x="87.5" y="352.5" width="2" height="19" fill="#fff" stroke="#000" stroke-width="1"/>
<rect x="92" y="361" width="1" height="1" fill="#000"/>
<rect x="92" y="364" width="1" height="5" fill="#000"/>
<rect x="91" y="362" width="3" height="2" fill="#000"/>
<rect x="96" y="350" width="1" height="8" fill="#000"/>
<rect x="96" y="363" width="1" height="1" fill="#000"/>
<rect x="95.5" y="358.5" width="2" height="4" fill="#fff" stroke="#000" stroke-width="1"/>
<rect x="100" y="332" width="1" height="2" fill="#000"/>
<rect x="100" y="358" width="1" height="18" fill="#000"/>
<rect x="99.5" y="334.5" width="2" height="23" fill="#fff" stroke="#000" stroke-width="1"/>
<rect x="104" y="326" width="1" height="4" fill="#000"/>
<rect x="104" y="335" width="1" height="5" fill="#000"/>
<rect x="103.5" y="330.5" width="2" height="4" fill="#fff" stroke="#000" stroke-width="1"/>
<rect x="108" y="326" width="1" height="1" fill="#000"/>
<rect x="108" y="331" width="1" height="6" fill="#000"/>
<rect x="107.5" y="327.5" width="2" height="3" fill="#fff" stroke="#000" stroke-width="1"/>
<rect x="112" y="318" width="1" height="6" fill="#000"/>
<rect x="112" y="328" width="1" height="1" fill="#000"/>
<rect x="111.5" y="324.5" width="2" height="3" fill="#fff" stroke="#000" stroke-width="1"/>
<rect x="116" y="314" width="1" height="1" fill="#000"/>
<rect x="116" y="325" width="1" height="4" fill="#000"/>
<rect x="115.5" y="315.5" width="2" height="9" fill="#fff" stroke="#000" stroke-width="1"/>
<rect x="120" y="313" width="1" height="1" fill="#000"/>
<rect x="120" y="317" width="1" height="7" fill="#000"/>
<rect x="119" y="314" width="3" height="3" fill="#000"/>
<rect x="124" y="305" width="1" height="1" fill="#000"/>
<rect x="124" y="318" width="1" height="2" fill="#000"/>
<rect x="123.5" y="306.5" width="2" height="11" fill="#fff" stroke="#000" stroke-width="1"/>
<rect x="128" y="293" width="1" height="1" fill="#000"/>
<rect x="128" y="308" width="1" height="1" fill="#000"/>
<rect x="127.5" y="294.5" width="2" height="13" fill="#fff" stroke="#000" stroke-width="1"/>
<rect x="132" y="291" width="1" height="1" fill="#000"/>
<rect x="132" y="295" width="1" height="4" fill="#000"/>
<rect x="131.5" y="292.5" width="2" height="2" fill="#fff" stroke="#000" stroke-width="1"/>
<rect x="136" y="293" width="1" height="4" fill="#000"/>
<rect x="135.5" y="286.5" width="2" height="6" fill="#fff" stroke="#000" stroke-width="1"/>
<rect x="140" y="266" width="1" height="10" fill="#000"/>
<rect x="140" y="287" width="1" height="1" fill="#000"/>
<rect x="139.5" y="276.5" width="2" height="10" fill="#fff" stroke="#000" stroke-width="1"/>
<rect x="144" y="268" width="1" height="8" fill="#000"/>
<rect x="144" y="278" width="1" height="2" fill="#000"/>
<rect x="143" y="276" width="3" height="2" fill="#000"/>
<rect x="148" y="277" width="1" height="1" fill="#000"/>
<rect x="148" y="280" width="1" height="1" fill="#000"/>
<rect x="147" y="278" width="3" height="2" fill="#000"/>
<rect x="151" y="280" width="3" height="3" fill="#000"/>
<rect x="156" y="285" width="1" height="1" fill="#000"/>
<rect x="156" y="289" width="1" height="1" fill="#000"/>
<rect x="155" y="286" width="3" height="3" fill="#000"/>
<rect x="160" y="287" width="1" height="1" fill="#000"/>
<rect x="160" y="294" width="1" height="5" fill="#000"/>
<rect x="159" y="288" width="3" height="6" fill="#000"/>
<rect x="164" y="285" width="1" height="1" fill="#000"/>
<rect x="164" y="296" width="1" height="1" fill="#000"/>
<rect x="163.5" y="286.5" width="2" height="9" fill="#fff" stroke="#000" stroke-width="1"/>
<rect x="168" y="284" width="1" height="2" fill="#000"/>
<rect x="168" y="288" width="1" height="2" fill="#000"/>
<rect x="167" y="286" width="3" height="2" fill="#000"/>
<rect x="172" y="283" width="1" height="1" fill="#000"/>
<rect x="172" y="287" width="1" height="1" fill="#000"/>
<rect x="171.5" y="284.5" width="2" height="2" fill="#fff" stroke="#000" stroke-width="1"/>
<rect x="176" y="281" width="1" height="1" fill="#000"/>
<rect x="176" y="285" width="1" height="1" fill="#000"/>
<rect x="175.5" y="282.5" width="2" height="2" fill="#fff" stroke="#000" stroke-width="1"/>
<rect x="180" y="276" width="1" height="2" fill="#000"/>
<rect x="180" y="282" width="1" height="1" fill="#000"/>
<rect x="179.5" y="278.5" width="2" height="3" fill="#fff" stroke="#000" stroke-width="1"/>
<rect x="184" y="277" width="1" height="1" fill="#000"/>
<rect x="184" y="281" width="1" height="1" fill="#000"/>
<rect x="183.5" y="278.5" width="2" height="2" fill="#fff" stroke="#000" stroke-width="1"/>
<rect x="188" y="277" width="1" height="1" fill="#000"/>
<rect x="188" y="280" width="1" height="1" fill="#000"/>
<rect x="187" y="278" width="3" height="2" fill="#000"/>
<rect x="192" y="276" width="1" height="2" fill="#000"/>
<rect x="192" y="279" width="1" height="1" fill="#000"/>
<rect x="191" y="278" width="3" height="1" fill="#000"/>
<rect x="196" y="254" width="1" height="11" fill="#000"/>
<rect x="196" y="273" width="1" height="7" fill="#000"/>
<rect x="195.5" y="265.5" width="2" height="7" fill="#fff" stroke="#000" stroke-width="1"/>
<rect x="200" y="46" width="1" height="22" fill="#000"/>
<rect x="200" y="266" width="1" height="1" fill="#000"/>
<rect x="199.5" y="68.5" width="2" height="197" fill="#fff" stroke="#000" stroke-width="1"/>
<rect x="204" y="14" width="1" height="54" fill="#000"/>
<rect x="204" y="106" width="1" height="34" fill="#000"/>
<rect x="203" y="68" width="3" height="38" fill="#000"/>
<rect x="208" y="48" width="1" height="59" fill="#000"/>
<rect x="208" y="112" width="1" height="11" fill="#000"/>
<rect x="207" y="107" width="3" height="5" fill="#000"/>
<rect x="212" y="101" width="1" height="7" fill="#000"/>
<rect x="212" y="141" width="1" height="25" fill="#000"/>
<rect x="211" y="108" width="3" height="33" fill="#000"/>
<rect x="216" y="138" width="1" height="3" fill="#000"/>
<rect x="216" y="166" width="1" height="6" fill="#000"/>
<rect x="215" y="141" width="3" height="25" fill="#000"/>
<rect x="220" y="161" width="1" height="2" fill="#000"/>
<rect x="220" y="191" width="1" height="1" fill="#000"/>
<rect x="219" y="163" width="3" height="28" fill="#000"/>
<rect x="224" y="173" width="1" height="15" fill="#000"/>
<rect x="224" y="190" width="1" height="20" fill="#000"/>
<rect x="223" y="188" width="3" height="2" fill="#000"/>
<rect x="228" y="182" width="1" height="7" fill="#000"/>
<rect x="228" y="213" width="1" height="3" fill="#000"/>
<rect x="227" y="189" width="3" height="24" fill="#000"/>
<rect x="232" y="199" width="1" height="6" fill="#000"/>
<rect x="232" y="213" width="1" height="1" fill="#000"/>
<rect x="231.5" y="205.5" width="2" height="7" fill="#fff" stroke="#000" stroke-width="1"/>
<rect x="236" y="204" width="1" height="1" fill="#000"/>
<rect x="236" y="225" width="1" height="12" fill="#000"/>
<rect x="235" y="205" width="3" height="20" fill="#000"/>
<rect x="240" y="214" width="1" height="6" fill="#000"/>
<rect x="240" y="223" width="1" height="2" fill="#000"/>
<rect x="239.5" y="220.5" width="2" height="2" fill="#fff" stroke="#000" stroke-width="1"/>
<rect x="244" y="218" width="1" height="2" fill="#000"/>
<rect x="244" y="233" width="1" height="1" fill="#000"/>
<rect x="243" y="220" width="3" height="13" fill="#000"/>
<rect x="248" y="220" width="1" height="1" fill="#000"/>
<rect x="248" y="233" width="1" height="1" fill="#000"/>
<rect x="247.5" y="221.5" width="2" height="11" fill="#fff" stroke="#000" stroke-width="1"/>
<rect x="252" y="220" width="1" height="1" fill="#000"/>
<rect x="252" y="225" width="1" height="6" fill="#000"/>
<rect x="251" y="221" width="3" height="4" fill="#000"/>
<rect x="256" y="216" width="1" height="2" fill="#000"/>
<rect x="256" y="227" width="1" height="1" fill="#000"/>
<rect x="255.5" y="218.5" width="2" height="8" fill="#fff" stroke="#000" stroke-width="1"/>
<rect x="260" y="214" width="1" height="4" fill="#000"/>
<rect x="260" y="226" width="1" height="1" fill="#000"/>
<rect x="259" y="218" width="3" height="8" fill="#000"/>
<rect x="264" y="224" width="1" height="1" fill="#000"/>
<rect x="264" y="227" width="1" height="6" fill="#000"/>
<rect x="263" y="225" width="3" height="2" fill="#000"/>
<rect x="268" y="220" width="1" height="4" fill="#000"/>
<rect x="268" y="228" width="1" height="2" fill="#000"/>
<rect x="267.5" y="224.5" width="2" height="3" fill="#fff" stroke="#000" stroke-width="1"/>
<rect x="272" y="222" width="1" height="2" fill="#000"/>
<rect x="272" y="227" width="1" height="4" fill="#000"/>
<rect x="271" y="224" width="3" height="3" fill="#000"/>
<rect x="276" y="226" width="1" height="1" fill="#000"/>
<rect x="276" y="235" width="1" height="7" fill="#000"/>
<rect x="275" y="227" width="3" height="8" fill="#000"/>
<rect x="280" y="228" width="1" height="1" fill="#000"/>
<rect x="280" y="235" width="1" height="1" fill="#000"/>
<rect x="279.5" y="229.5" width="2" height="5" fill="#fff" stroke="#000" stroke-width="1"/>
<rect x="284" y="229" width="1" height="1" fill="#000"/>
<rect x="284" y="233" width="1" height="1" fill="#000"/>
<rect x="283.5" y="230.5" width="2" height="2" fill="#fff" stroke="#000" stroke-width="1"/>
<rect x="288" y="228" width="1" height="1" fill="#000"/>
<rect x="288" y="231" width="1" height="1" fill="#000"/>
<rect x="287" y="229" width="3" height="2" fill="#000"/>
<rect x="292" y="228" width="1" height="2" fill="#000"/>
<rect x="292" y="231" width="1" height="4" fill="#000"/>
<rect x="291" y="230" width="3" height="1" fill="#000"/>
<rect x="296" y="217" width="1" height="1" fill="#000"/>
<rect x="296" y="229" width="1" height="1" fill="#000"/>
<rect x="295.5" y="218.5" width="2" height="10" fill="#fff" stroke="#000" stroke-width="1"/>
<rect x="300" y="211" width="1" height="2" fill="#000"/>
<rect x="300" y="217" width="1" height="4" fill="#000"/>
<rect x="299" y="213" width="3" height="4" fill="#000"/>
<rect x="304" y="215" width="1" height="1" fill="#000"/>
<rect x="304" y="225" width="1" height="3" fill="#000"/>
<rect x="303" y="216" width="3" height="9" fill="#000"/>
<rect x="308" y="219" width="1" height="6" fill="#000"/>
<rect x="308" y="227" width="1" height="1" fill="#000"/>
<rect x="307" y="225" width="3" height="2" fill="#000"/>
<rect x="312" y="221" width="1" height="4" fill="#000"/>
<rect x="312" y="231" width="1" height="5" fill="#000"/>
<rect x="311" y="225" width="3" height="6" fill="#000"/>
<rect x="316" y="230" width="1" height="1" fill="#000"/>
<rect x="316" y="238" width="1" height="1" fill="#000"/>
<rect x="315" y="231" width="3" height="7" fill="#000"/>
<rect x="320" y="238" width="1" height="1" fill="#000"/>
<rect x="320" y="261" width="1" height="5" fill="#000"/>
<rect x="319" y="239" width="3" height="22" fill="#000"/>
<rect x="324" y="252" width="1" height="7" fill="#000"/>
<rect x="324" y="262" width="1" height="9" fill="#000"/>
<rect x="323" y="259" width="3" height="3" fill="#000"/>
<rect x="328" y="258" width="1" height="1" fill="#000"/>
<rect x="328" y="270" width="1" height="1" fill="#000"/>
<rect x="327" y="259" width="3" height="11" fill="#000"/>
<rect x="332" y="262" width="1" height="6" fill="#000"/>
<rect x="332" y="294" width="1" height="1" fill="#000"/>
<rect x="331" y="268" width="3" height="26" fill="#000"/>
<rect x="336" y="274" width="1" height="18" fill="#000"/>
<rect x="336" y="306" width="1" height="5" fill="#000"/>
<rect x="335" y="292" width="3" height="14" fill="#000"/>
<rect x="340" y="303" width="1" height="1" fill="#000"/>
<rect x="340" y="309" width="1" height="19" fill="#000"/>
<rect x="339.5" y="304.5" width="2" height="4" fill="#fff" stroke="#000" stroke-width="1"/>
<rect x="344" y="300" width="1" height="1" fill="#000"/>
<rect x="344" y="309" width="1" height="11" fill="#000"/>
<rect x="343.5" y="301.5" width="2" height="7" fill="#fff" stroke="#000" stroke-width="1"/>
<rect x="348" y="288" width="1" height="1" fill="#000"/>
<rect x="348" y="301" width="1" height="1" fill="#000"/>
<rect x="347.5" y="289.5" width="2" height="11" fill="#fff" stroke="#000" stroke-width="1"/>
<rect x="352" y="284" width="1" height="1" fill="#000"/>
<rect x="352" y="290" width="1" height="2" fill="#000"/>
<rect x="351.5" y="285.5" width="2" height="4" fill="#fff" stroke="#000" stroke-width="1"/>
<rect x="356" y="275" width="1" height="3" fill="#000"/>
<rect x="356" y="285" width="1" height="3" fill="#000"/>
<rect x="355.5" y="278.5" width="2" height="6" fill="#fff" stroke="#000" stroke-width="1"/>
<rect x="360" y="280" width="1" height="5" fill="#000"/>
<rect x="360" y="288" width="1" height="1" fill="#000"/>
<rect x="359" y="285" width="3" height="3" fill="#000"/>
<rect x="364" y="263" width="1" height="8" fill="#000"/>
<rect x="364" y="277" width="1" height="5" fill="#000"/>
<rect x="363" y="271" width="3" height="6" fill="#000"/>
<rect x="368" y="270" width="1" height="5" fill="#000"/>
<rect x="368" y="280" width="1" height="1" fill="#000"/>
<rect x="367" y="275" width="3" height="5" fill="#000"/>
<rect x="372" y="279" width="1" height="1" fill="#000"/>
<rect x="372" y="295" width="1" height="10" fill="#000"/>
<rect x="371" y="280" width="3" height="15" fill="#000"/>
<rect x="376" y="291" width="1" height="2" fill="#000"/>
<rect x="376" y="296" width="1" height="3" fill="#000"/>
<rect x="375" y="293" width="3" height="3" fill="#000"/>
<rect x="380" y="286" width="1" height="3" fill="#000"/>
<rect x="380" y="294" width="1" height="2" fill="#000"/>
<rect x="379.5" y="289.5" width="2" height="4" fill="#fff" stroke="#000" stroke-width="1"/>
<rect x="384" y="289" width="1" height="1" fill="#000"/>
<rect x="384" y="294" width="1" height="2" fill="#000"/>
<rect x="383.5" y="290.5" width="2" height="3" fill="#fff" stroke="#000" stroke-width="1"/>
<rect x="388" y="289" width="1" height="1" fill="#000"/>
<rect x="388" y="297" width="1" height="1" fill="#000"/>
<rect x="387" y="290" width="3" height="7" fill="#000"/>
<rect x="392" y="284" width="1" height="1" fill="#000"/>
<rect x="392" y="297" width="1" height="1" fill="#000"/>
<rect x="391.5" y="285.5" width="2" height="11" fill="#fff" stroke="#000" stroke-width="1"/>
<rect x="396" y="279" width="1" height="2" fill="#000"/>
<rect x="396" y="284" width="1" height="5" fill="#000"/>
<rect x="395" y="281" width="3" height="3" fill="#000"/>
<rect x="400" y="278" width="1" height="2" fill="#000"/>
<rect x="400" y="282" width="1" height="1" fill="#000"/>
<rect x="399" y="280" width="3" height="2" fill="#000"/>
<rect x="404" y="280" width="1" height="1" fill="#000"/>
<rect x="404" y="287" width="1" height="5" fill="#000"/>
<rect x="403" y="281" width="3" height="6" fill="#000"/>
<rect x="408" y="279" width="1" height="6" fill="#000"/>
<rect x="408" y="288" width="1" height="1" fill="#000"/>
<rect x="407" y="285" width="3" height="3" fill="#000"/>
<rect x="412" y="285" width="1" height="1" fill="#000"/>
<rect x="412" y="289" width="1" height="11" fill="#000"/>
<rect x="411" y="286" width="3" height="3" fill="#000"/>
<rect x="416" y="284" width="1" height="1" fill="#000"/>
<rect x="416" y="290" width="1" height="1" fill="#000"/>
<rect x="415.5" y="285.5" width="2" height="4" fill="#fff" stroke="#000" stroke-width="1"/>
<rect x="420" y="283" width="1" height="1" fill="#000"/>
<rect x="420" y="294" width="1" height="1" fill="#000"/>
<rect x="419.5" y="284.5" width="2" height="9" fill="#fff" stroke="#000" stroke-width="1"/>
<rect x="424" y="284" width="1" height="9" fill="#000"/>
<rect x="424" y="302" width="1" height="6" fill="#000"/>
<rect x="423" y="293" width="3" height="9" fill="#000"/>
<rect x="428" y="301" width="1" height="1" fill="#000"/>
<rect x="428" y="313" width="1" height="7" fill="#000"/>
<rect x="427" y="302" width="3" height="11" fill="#000"/>
<rect x="432" y="312" width="1" height="1" fill="#000"/>
<rect x="432" y="328" width="1" height="6" fill="#000"/>
<rect x="431" y="313" width="3" height="15" fill="#000"/>
<rect x="436" y="326" width="1" height="2" fill="#000"/>
<rect x="436" y="358" width="1" height="4" fill="#000"/>
<rect x="435" y="328" width="3" height="30" fill="#000"/>
<rect x="440" y="354" width="1" height="4" fill="#000"/>
<rect x="440" y="373" width="1" height="11" fill="#000"/>
<rect x="439" y="358" width="3" height="15" fill="#000"/>
<rect x="444" y="371" width="1" height="2" fill="#000"/>
<rect x="444" y="376" width="1" height="4" fill="#000"/>
<rect x="443.5" y="373.5" width="2" height="2" fill="#fff" stroke="#000" stroke-width="1"/>
<rect x="448" y="353" width="1" height="1" fill="#000"/>
<rect x="448" y="377" width="1" height="2" fill="#000"/>
<rect x="447.5" y="354.5" width="2" height="22" fill="#fff" stroke="#000" stroke-width="1"/>
<rect x="452" y="344" width="1" height="10" fill="#000"/>
<rect x="452" y="357" width="1" height="2" fill="#000"/>
<rect x="451.5" y="354.5" width="2" height="2" fill="#fff" stroke="#000" stroke-width="1"/>
<rect x="456" y="348" width="1" height="10" fill="#000"/>
<rect x="456" y="417" width="1" height="26" fill="#000"/>
<rect x="455" y="358" width="3" height="59" fill="#000"/>
<rect x="460" y="414" width="1" height="2" fill="#000"/>
<rect x="460" y="438" width="1" height="25" fill="#000"/>
<rect x="459" y="416" width="3" height="22" fill="#000"/>
<rect x="464" y="431" width="1" height="6" fill="#000"/>
<rect x="464" y="456" width="1" height="2" fill="#000"/>
<rect x="463" y="437" width="3" height="19" fill="#000"/>
<rect x="468" y="438" width="1" height="2" fill="#000"/>
<rect x="468" y="455" width="1" height="6" fill="#000"/>
<rect x="467.5" y="440.5" width="2" height="14" fill="#fff" stroke="#000" stroke-width="1"/>
<rect x="472" y="435" width="1" height="5" fill="#000"/>
<rect x="472" y="448" width="1" height="3" fill="#000"/>
<rect x="471" y="440" width="3" height="8" fill="#000"/>
<rect x="476" y="443" width="1" height="4" fill="#000"/>
<rect x="476" y="456" width="1" height="3" fill="#000"/>
<rect x="475" y="447" width="3" height="9" fill="#000"/>
<rect x="480" y="441" width="1" height="1" fill="#000"/>
<rect x="480" y="458" width="1" height="2" fill="#000"/>
<rect x="479.5" y="442.5" width="2" height="15" fill="#fff" stroke="#000" stroke-width="1"/>
<rect x="484" y="426" width="1" height="1" fill="#000"/>
<rect x="484" y="443" width="1" height="1" fill="#000"/>
<rect x="483.5" y="427.5" width="2" height="15" fill="#fff" stroke="#000" stroke-width="1"/>
<rect x="488" y="425" width="1" height="3" fill="#000"/>
<rect x="488" y="445" width="1" height="1" fill="#000"/>
<rect x="487" y="428" width="3" height="17" fill="#000"/>
<rect x="492" y="445" width="1" height="1" fill="#000"/>
<rect x="492" y="448" width="1" height="2" fill="#000"/>
<rect x="491" y="446" width="3" height="2" fill="#000"/>
<rect x="496" y="442" width="1" height="1" fill="#000"/>
<rect x="496" y="445" width="1" height="3" fill="#000"/>
<rect x="495" y="443" width="3" height="2" fill="#000"/>
<rect x="500" y="441" width="1" height="1" fill="#000"/>
<rect x="500" y="448" width="1" height="6" fill="#000"/>
<rect x="499" y="442" width="3" height="6" fill="#000"/>
<rect x="504" y="444" width="1" height="2" fill="#000"/>
<rect x="504" y="450" width="1" height="6" fill="#000"/>
<rect x="503" y="446" width="3" height="4" fill="#000"/>
<rect x="508" y="447" width="1" height="1" fill="#000"/>
<rect x="508" y="452" width="1" height="4" fill="#000"/>
<rect x="507" y="448" width="3" height="4" fill="#000"/>
<rect x="512" y="447" width="1" height="1" fill="#000"/>
<rect x="512" y="452" width="1" height="1" fill="#000"/>
<rect x="511.5" y="448.5" width="2" height="3" fill="#fff" stroke="#000" stroke-width="1"/>
<rect x="516" y="445" width="1" height="1" fill="#000"/>
<rect x="516" y="448" width="1" height="1" fill="#000"/>
<rect x="515" y="446" width="3" height="2" fill="#000"/>
<rect x="520" y="438" width="1" height="3" fill="#000"/>
<rect x="520" y="446" width="1" height="4" fill="#000"/>
<rect x="519.5" y="441.5" width="2" height="4" fill="#fff" stroke="#000" stroke-width="1"/>
<rect x="524" y="427" width="1" height="1" fill="#000"/>
<rect x="524" y="441" width="1" height="1" fill="#000"/>
<rect x="523.5" y="428.5" width="2" height="12" fill="#fff" stroke="#000" stroke-width="1"/>
<rect x="528" y="424" width="1" height="1" fill="#000"/>
<rect x="528" y="428" width="1" height="4" fill="#000"/>
<rect x="527.5" y="425.5" width="2" height="2" fill="#fff" stroke="#000" stroke-width="1"/>
<rect x="532" y="421" width="1" height="2" fill="#000"/>
<rect x="532" y="426" width="1" height="1" fill="#000"/>
<rect x="531" y="423" width="3" height="3" fill="#000"/>
<rect x="536" y="421" width="1" height="2" fill="#000"/>
<rect x="536" y="433" width="1" height="1" fill="#000"/>
<rect x="535" y="423" width="3" height="10" fill="#000"/>
<rect x="540" y="431" width="1" height="1" fill="#000"/>
<rect x="540" y="435" width="1" height="2" fill="#000"/>
<rect x="539" y="432" width="3" height="3" fill="#000"/>
<rect x="544" y="430" width="1" height="2" fill="#000"/>
<rect x="544" y="440" width="1" height="2" fill="#000"/>
<rect x="543" y="432" width="3" height="8" fill="#000"/>
<rect x="548" y="429" width="1" height="2" fill="#000"/>
<rect x="548" y="439" width="1" height="1" fill="#000"/>
<rect x="547.5" y="431.5" width="2" height="7" fill="#fff" stroke="#000" stroke-width="1"/>
<rect x="552" y="427" width="1" height="1" fill="#000"/>
<rect x="552" y="432" width="1" height="1" fill="#000"/>
<rect x="551.5" y="428.5" width="2" height="3" fill="#fff" stroke="#000" stroke-width="1"/>
<rect x="556" y="427" width="1" height="2" fill="#000"/>
<rect x="556" y="430" width="1" height="2" fill="#000"/>
<rect x="555" y="429" width="3" height="1" fill="#000"/>
<rect x="560" y="428" width="1" height="2" fill="#000"/>
<rect x="560" y="431" width="1" height="2" fill="#000"/>
<rect x="559" y="430" width="3" height="1" fill="#000"/>
<rect x="564" y="429" width="1" height="2" fill="#000"/>
<rect x="564" y="432" width="1" height="3" fill="#000"/>
<rect x="563" y="431" width="3" height="1" fill="#000"/>
<rect x="568" y="424" width="1" height="2" fill="#000"/>
<rect x="568" y="431" width="1" height="2" fill="#000"/>
<rect x="567.5" y="426.5" width="2" height="4" fill="#fff" stroke="#000" stroke-width="1"/>
<rect x="572" y="425" width="1" height="1" fill="#000"/>
<rect x="572" y="427" width="1" height="6" fill="#000"/>
<rect x="571" y="426" width="3" height="1" fill="#000"/>
<rect x="576" y="413" width="1" height="1" fill="#000"/>
<rect x="576" y="429" width="1" height="1" fill="#000"/>
<rect x="575.5" y="414.5" width="2" height="14" fill="#fff" stroke="#000" stroke-width="1"/>
<rect x="580" y="411" width="1" height="3" fill="#000"/>
<rect x="580" y="415" width="1" height="4" fill="#000"/>
<rect x="579" y="414" width="3" height="1" fill="#000"/>
<rect x="584" y="398" width="1" height="4" fill="#000"/>
<rect x="584" y="414" width="1" height="1" fill="#000"/>
<rect x="583.5" y="402.5" width="2" height="11" fill="#fff" stroke="#000" stroke-width="1"/>
<rect x="588" y="387" width="1" height="9" fill="#000"/>
<rect x="588" y="400" width="1" height="2" fill="#000"/>
<rect x="587.5" y="396.5" width="2" height="3" fill="#fff" stroke="#000" stroke-width="1"/>
<rect x="592" y="394" width="1" height="1" fill="#000"/>
<rect x="592" y="399" width="1" height="6" fill="#000"/>
<rect x="591" y="395" width="3" height="4" fill="#000"/>
<rect x="596" y="400" width="1" height="3" fill="#000"/>
<rect x="596" y="404" width="1" height="4" fill="#000"/>
<rect x="595" y="403" width="3" height="1" fill="#000"/>
<rect x="600" y="400" width="1" height="1" fill="#000"/>
<rect x="600" y="404" width="1" height="1" fill="#000"/>
<rect x="599" y="401" width="3" height="3" fill="#000"/>
<rect x="604" y="401" width="1" height="2" fill="#000"/>
<rect x="604" y="405" width="1" height="9" fill="#000"/>
<rect x="603" y="403" width="3" height="2" fill="#000"/>
<rect x="608" y="405" width="1" height="2" fill="#000"/>
<rect x="608" y="408" width="1" height="1" fill="#000"/>
<rect x="607" y="407" width="3" height="1" fill="#000"/>
<rect x="612" y="409" width="1" height="1" fill="#000"/>
<rect x="612" y="415" width="1" height="1" fill="#000"/>
<rect x="611" y="410" width="3" height="5" fill="#000"/>
<rect x="616" y="411" width="1" height="1" fill="#000"/>
<rect x="616" y="415" width="1" height="1" fill="#000"/>
<rect x="615" y="412" width="3" height="3" fill="#000"/>
<rect x="620" y="409" width="1" height="1" fill="#000"/>
<rect x="620" y="414" width="1" height="1" fill="#000"/>
<rect x="619.5" y="410.5" width="2" height="3" fill="#fff" stroke="#000" stroke-width="1"/>
<rect x="624" y="404" width="1" height="3" fill="#000"/>
<rect x="624" y="411" width="1" height="1" fill="#000"/>
<rect x="623.5" y="407.5" width="2" height="3" fill="#fff" stroke="#000" stroke-width="1"/>
<rect x="628" y="405" width="1" height="1" fill="#000"/>
<rect x="628" y="409" width="1" height="1" fill="#000"/>
<rect x="627.5" y="406.5" width="2" height="2" fill="#fff" stroke="#000" stroke-width="1"/>
<rect x="632" y="401" width="1" height="1" fill="#000"/>
<rect x="632" y="406" width="1" height="1" fill="#000"/>
<rect x="631.5" y="402.5" width="2" height="3" fill="#fff" stroke="#000" stroke-width="1"/>
<rect x="636" y="401" width="1" height="2" fill="#000"/>
<rect x="636" y="404" width="1" height="4" fill="#000"/>
<rect x="635" y="403" width="3" height="1" fill="#000"/>
<rect x="640" y="401" width="1" height="1" fill="#000"/>
<rect x="640" y="404" width="1" height="1" fill="#000"/>
<rect x="639" y="402" width="3" height="2" fill="#000"/>
<rect x="644" y="400" width="1" height="1" fill="#000"/>
<rect x="644" y="403" width="1" height="1" fill="#000"/>
<rect x="643" y="401" width="3" height="2" fill="#000"/>
<rect x="648" y="401" width="1" height="1" fill="#000"/>
<rect x="648" y="405" width="1" height="1" fill="#000"/>
<rect x="647" y="402" width="3" height="3" fill="#000"/>
<rect x="652" y="402" width="1" height="1" fill="#000"/>
<rect x="652" y="407" width="1" height="3" fill="#000"/>
<rect x="651" y="403" width="3" height="4" fill="#000"/>
<rect x="656" y="409" width="1" height="1" fill="#000"/>
<rect x="656" y="420" width="1" height="6" fill="#000"/>
<rect x="655" y="410" width="3" height="10" fill="#000"/>
<rect x="660" y="416" width="1" height="2" fill="#000"/>
<rect x="660" y="421" width="1" height="1" fill="#000"/>
<rect x="659" y="418" width="3" height="3" fill="#000"/>
<rect x="664" y="415" width="1" height="1" fill="#000"/>
<rect x="664" y="421" width="1" height="1" fill="#000"/>
<rect x="663.5" y="416.5" width="2" height="4" fill="#fff" stroke="#000" stroke-width="1"/>
<rect x="668" y="414" width="1" height="2" fill="#000"/>
<rect x="668" y="417" width="1" height="3" fill="#000"/>
<rect x="667" y="416" width="3" height="1" fill="#000"/>
<rect x="672" y="415" width="1" height="2" fill="#000"/>
<rect x="672" y="419" width="1" height="6" fill="#000"/>
<rect x="671" y="417" width="3" height="2" fill="#000"/>
<rect x="676" y="415" width="1" height="1" fill="#000"/>
<rect x="676" y="421" width="1" height="1" fill="#000"/>
<rect x="675.5" y="416.5" width="2" height="4" fill="#fff" stroke="#000" stroke-width="1"/>
<rect x="680" y="414" width="1" height="1" fill="#000"/>
<rect x="680" y="416" width="1" height="1" fill="#000"/>
<rect x="679" y="415" width="3" height="1" fill="#000"/>
<rect x="684" y="416" width="1" height="1" fill="#000"/>
<rect x="684" y="419" width="1" height="3" fill="#000"/>
<rect x="683" y="417" width="3" height="2" fill="#000"/>
<rect x="688" y="413" width="1" height="1" fill="#000"/>
<rect x="688" y="418" width="1" height="1" fill="#000"/>
<rect x="687.5" y="414.5" width="2" height="3" fill="#fff" stroke="#000" stroke-width="1"/>
<rect x="692" y="410" width="1" height="1" fill="#000"/>
<rect x="692" y="417" width="1" height="2" fill="#000"/>
<rect x="691.5" y="411.5" width="2" height="5" fill="#fff" stroke="#000" stroke-width="1"/>
<rect x="696" y="410" width="1" height="1" fill="#000"/>
<rect x="696" y="417" width="1" height="1" fill="#000"/>
<rect x="695" y="411" width="3" height="6" fill="#000"/>
<rect x="700" y="411" width="1" height="1" fill="#000"/>
<rect x="700" y="416" width="1" height="8" fill="#000"/>
<rect x="699.5" y="412.5" width="2" height="3" fill="#fff" stroke="#000" stroke-width="1"/>
<rect x="704" y="411" width="1" height="1" fill="#000"/>
<rect x="704" y="418" width="1" height="1" fill="#000"/>
<rect x="703" y="412" width="3" height="6" fill="#000"/>
<rect x="708" y="404" width="1" height="3" fill="#000"/>
<rect x="708" y="418" width="1" height="1" fill="#000"/>
<rect x="707.5" y="407.5" width="2" height="10" fill="#fff" stroke="#000" stroke-width="1"/>
<rect x="712" y="395" width="1" height="7" fill="#000"/>
<rect x="712" y="406" width="1" height="1" fill="#000"/>
<rect x="711.5" y="402.5" width="2" height="3" fill="#fff" stroke="#000" stroke-width="1"/>
<rect x="716" y="401" width="1" height="1" fill="#000"/>
<rect x="716" y="407" width="1" height="1" fill="#000"/>
<rect x="715" y="402" width="3" height="5" fill="#000"/>
<rect x="720" y="411" width="1" height="1" fill="#000"/>
<rect x="720" y="413" width="1" height="3" fill="#000"/>
<rect x="719" y="412" width="3" height="1" fill="#000"/>
<rect x="724" y="411" width="1" height="1" fill="#000"/>
<rect x="724" y="433" width="1" height="1" fill="#000"/>
<rect x="723" y="412" width="3" height="21" fill="#000"/>
<rect x="728" y="419" width="1" height="1" fill="#000"/>
<rect x="728" y="432" width="1" height="1" fill="#000"/>
<rect x="727.5" y="420.5" width="2" height="11" fill="#fff" stroke="#000" stroke-width="1"/>
<rect x="732" y="419" width="1" height="1" fill="#000"/>
<rect x="732" y="431" width="1" height="2" fill="#000"/>
<rect x="731" y="420" width="3" height="11" fill="#000"/>
<rect x="736" y="425" width="1" height="3" fill="#000"/>
<rect x="736" y="432" width="1" height="1" fill="#000"/>
<rect x="735" y="428" width="3" height="4" fill="#000"/>
<rect x="740" y="429" width="1" height="1" fill="#000"/>
<rect x="740" y="438" width="1" height="3" fill="#000"/>
<rect x="739" y="430" width="3" height="8" fill="#000"/>
<rect x="744" y="436" width="1" height="1" fill="#000"/>
<rect x="744" y="452" width="1" height="1" fill="#000"/>
<rect x="743" y="437" width="3" height="15" fill="#000"/>
<rect x="748" y="440" width="1" height="6" fill="#000"/>
<rect x="748" y="453" width="1" height="1" fill="#000"/>
<rect x="747.5" y="446.5" width="2" height="6" fill="#fff" stroke="#000" stroke-width="1"/>
<rect x="752" y="444" width="1" height="2" fill="#000"/>
<rect x="752" y="447" width="1" height="3" fill="#000"/>
<rect x="751" y="446" width="3" height="1" fill="#000"/>
<rect x="756" y="437" width="1" height="4" fill="#000"/>
<rect x="756" y="446" width="1" height="1" fill="#000"/>
<rect x="755.5" y="441.5" width="2" height="4" fill="#fff" stroke="#000" stroke-width="1"/>
<rect x="760" y="440" width="1" height="1" fill="#000"/>
<rect x="760" y="454" width="1" height="3" fill="#000"/>
<rect x="759" y="441" width="3" height="13" fill="#000"/>
<rect x="764" y="448" width="1" height="3" fill="#000"/>
<rect x="764" y="455" width="1" height="3" fill="#000"/>
<rect x="763.5" y="451.5" width="2" height="3" fill="#fff" stroke="#000" stroke-width="1"/>
<rect x="768" y="443" width="1" height="5" fill="#000"/>
<rect x="768" y="451" width="1" height="2" fill="#000"/>
<rect x="767.5" y="448.5" width="2" height="2" fill="#fff" stroke="#000" stroke-width="1"/>
<rect x="772" y="444" width="1" height="2" fill="#000"/>
<rect x="772" y="447" width="1" height="3" fill="#000"/>
<rect x="771" y="446" width="3" height="1" fill="#000"/>
<rect x="776" y="442" width="1" height="5" fill="#000"/>
<rect x="776" y="453" width="1" height="3" fill="#000"/>
<rect x="775.5" y="447.5" width="2" height="5" fill="#fff" stroke="#000" stroke-width="1"/>
<rect x="780" y="444" width="1" height="2" fill="#000"/>
<rect x="780" y="447" width="1" height="3" fill="#000"/>
<rect x="779" y="446" width="3" height="1" fill="#000"/>
<rect x="784" y="441" width="1" height="4" fill="#000"/>
<rect x="784" y="448" width="1" height="1" fill="#000"/>
<rect x="783" y="445" width="3" height="3" fill="#000"/>
<rect x="788" y="435" width="1" height="1" fill="#000"/>
<rect x="788" y="448" width="1" height="1" fill="#000"/>
<rect x="787.5" y="436.5" width="2" height="11" fill="#fff" stroke="#000" stroke-width="1"/>
<rect x="792" y="432" width="1" height="3" fill="#000"/>
<rect x="792" y="437" width="1" height="11" fill="#000"/>
<rect x="791" y="435" width="3" height="2" fill="#000"/>
<rect x="796" y="425" width="1" height="8" fill="#000"/>
<rect x="796" y="436" width="1" height="4" fill="#000"/>
<rect x="795.5" y="433.5" width="2" height="2" fill="#fff" stroke="#000" stroke-width="1"/>
<rect x="800" y="428" width="1" height="2" fill="#000"/>
<rect x="800" y="433" width="1" height="3" fill="#000"/>
<rect x="799" y="430" width="3" height="3" fill="#000"/>
<rect x="804" y="431" width="1" height="2" fill="#000"/>
<rect x="804" y="440" width="1" height="5" fill="#000"/>
<rect x="803.5" y="433.5" width="2" height="6" fill="#fff" stroke="#000" stroke-width="1"/>
<rect x="808" y="438" width="1" height="3" fill="#000"/>
<rect x="808" y="448" width="1" height="1" fill="#000"/>
<rect x="807" y="441" width="3" height="7" fill="#000"/>
<rect x="812" y="444" width="1" height="2" fill="#000"/>
<rect x="812" y="456" width="1" height="1" fill="#000"/>
<rect x="811" y="446" width="3" height="10" fill="#000"/>
<rect x="816" y="451" width="1" height="2" fill="#000"/>
<rect x="816" y="474" width="1" height="7" fill="#000"/>
<rect x="815" y="453" width="3" height="21" fill="#000"/>
<rect x="820" y="439" width="1" height="33" fill="#000"/>
<rect x="820" y="474" width="1" height="1" fill="#000"/>
<rect x="819" y="472" width="3" height="2" fill="#000"/>
<rect x="824" y="457" width="1" height="15" fill="#000"/>
<rect x="824" y="474" width="1" height="1" fill="#000"/>
<rect x="823" y="472" width="3" height="2" fill="#000"/>
<rect x="828" y="464" width="1" height="8" fill="#000"/>
<rect x="828" y="492" width="1" height="4" fill="#000"/>
<rect x="827" y="472" width="3" height="20" fill="#000"/>
<rect x="832" y="477" width="1" height="1" fill="#000"/>
<rect x="832" y="495" width="1" height="5" fill="#000"/>
<rect x="831.5" y="478.5" width="2" height="16" fill="#fff" stroke="#000" stroke-width="1"/>
<rect x="836" y="466" width="1" height="9" fill="#000"/>
<rect x="836" y="477" width="1" height="1" fill="#000"/>
<rect x="835" y="475" width="3" height="2" fill="#000"/>
<rect x="840" y="474" width="1" height="2" fill="#000"/>
<rect x="840" y="481" width="1" height="6" fill="#000"/>
<rect x="839" y="476" width="3" height="5" fill="#000"/>
<rect x="844" y="477" width="1" height="3" fill="#000"/>
<rect x="844" y="489" width="1" height="3" fill="#000"/>
<rect x="843" y="480" width="3" height="9" fill="#000"/>
<rect x="848" y="481" width="1" height="1" fill="#000"/>
<rect x="848" y="489" width="1" height="1" fill="#000"/>
<rect x="847.5" y="482.5" width="2" height="6" fill="#fff" stroke="#000" stroke-width="1"/>
<rect x="852" y="464" width="1" height="1" fill="#000"/>
<rect x="852" y="483" width="1" height="1" fill="#000"/>
<rect x="851.5" y="465.5" width="2" height="17" fill="#fff" stroke="#000" stroke-width="1"/>
<rect x="856" y="464" width="1" height="4" fill="#000"/>
<rect x="856" y="474" width="1" height="1" fill="#000"/>
<rect x="855.5" y="468.5" width="2" height="5" fill="#fff" stroke="#000" stroke-width="1"/>
<rect x="860" y="462" width="1" height="5" fill="#000"/>
<rect x="860" y="473" width="1" height="1" fill="#000"/>
<rect x="859" y="467" width="3" height="6" fill="#000"/>
<rect x="864" y="467" width="1" height="5" fill="#000"/>
<rect x="864" y="475" width="1" height="1" fill="#000"/>
<rect x="863" y="472" width="3" height="3" fill="#000"/>
<rect x="868" y="467" width="1" height="4" fill="#000"/>
<rect x="868" y="475" width="1" height="1" fill="#000"/>
<rect x="867.5" y="471.5" width="2" height="3" fill="#fff" stroke="#000" stroke-width="1"/>
<rect x="872" y="464" width="1" height="6" fill="#000"/>
<rect x="872" y="471" width="1" height="1" fill="#000"/>
<rect x="871" y="470" width="3" height="1" fill="#000"/>
<rect x="876" y="466" width="1" height="4" fill="#000"/>
<rect x="876" y="475" width="1" height="1" fill="#000"/>
<rect x="875" y="470" width="3" height="5" fill="#000"/>
<rect x="880" y="469" width="1" height="1" fill="#000"/>
<rect x="880" y="472" width="1" height="2" fill="#000"/>
<rect x="879" y="470" width="3" height="2" fill="#000"/>
<rect x="884" y="467" width="1" height="1" fill="#000"/>
<rect x="884" y="470" width="1" height="3" fill="#000"/>
<rect x="883" y="468" width="3" height="2" fill="#000"/>
<rect x="888" y="468" width="1" height="1" fill="#000"/>
<rect x="888" y="471" width="1" height="2" fill="#000"/>
<rect x="887" y="469" width="3" height="2" fill="#000"/>
<rect x="892" y="468" width="1" height="2" fill="#000"/>
<rect x="892" y="471" width="1" height="2" fill="#000"/>
<rect x="891" y="470" width="3" height="1" fill="#000"/>
<rect x="896" y="464" width="1" height="1" fill="#000"/>
<rect x="896" y="471" width="1" height="1" fill="#000"/>
<rect x="895.5" y="465.5" width="2" height="5" fill="#fff" stroke="#000" stroke-width="1"/>
<rect x="900" y="464" width="1" height="1" fill="#000"/>
<rect x="900" y="466" width="1" height="1" fill="#000"/>
<rect x="899" y="465" width="3" height="1" fill="#000"/>
<rect x="904" y="464" width="1" height="1" fill="#000"/>
<rect x="904" y="470" width="1" height="1" fill="#000"/>
<rect x="903" y="465" width="3" height="5" fill="#000"/>
<rect x="908" y="467" width="1" height="1" fill="#000"/>
<rect x="908" y="469" width="1" height="1" fill="#000"/>
<rect x="907" y="468" width="3" height="1" fill="#000"/>
<rect x="912" y="465" width="1" height="1" fill="#000"/>
<rect x="912" y="469" width="1" height="1" fill="#000"/>
<rect x="911.5" y="466.5" width="2" height="2" fill="#fff" stroke="#000" stroke-width="1"/>
<rect x="916" y="465" width="1" height="1" fill="#000"/>
<rect x="916" y="467" width="1" height="3" fill="#000"/>
<rect x="915" y="466" width="3" height="1" fill="#000"/>
<rect x="920" y="465" width="1" height="1" fill="#000"/>
<rect x="920" y="467" width="1" height="1" fill="#000"/>
<rect x="919" y="466" width="3" height="1" fill="#000"/>
<rect x="924" y="465" width="1" height="1" fill="#000"/>
<rect x="924" y="467" width="1" height="1" fill="#000"/>
<rect x="923" y="466" width="3" height="1" fill="#000"/>
<rect x="928" y="465" width="1" height="1" fill="#000"/>
<rect x="928" y="468" width="1" height="1" fill="#000"/>
<rect x="927" y="466" width="3" height="2" fill="#000"/>
<rect x="932" y="465" width="1" height="2" fill="#000"/>
<rect x="932" y="468" width="1" height="2" fill="#000"/>
<rect x="931" y="467" width="3" height="1" fill="#000"/>
<rect x="936" y="466" width="1" height="1" fill="#000"/>
<rect x="936" y="469" width="1" height="1" fill="#000"/>
<rect x="935" y="467" width="3" height="2" fill="#000"/>
<rect x="940" y="467" width="1" height="1" fill="#000"/>
<rect x="940" y="474" width="1" height="1" fill="#000"/>
<rect x="939" y="468" width="3" height="6" fill="#000"/>
<rect x="944" y="465" width="1" height="3" fill="#000"/>
<rect x="944" y="472" width="1" height="1" fill="#000"/>
<rect x="943.5" y="468.5" width="2" height="3" fill="#fff" stroke="#000" stroke-width="1"/>
<rect x="948" y="464" width="1" height="1" fill="#000"/>
<rect x="948" y="469" width="1" height="1" fill="#000"/>
<rect x="947.5" y="465.5" width="2" height="3" fill="#fff" stroke="#000" stroke-width="1"/>
<rect x="952" y="458" width="1" height="6" fill="#000"/>
<rect x="952" y="465" width="1" height="1" fill="#000"/>
<rect x="951" y="464" width="3" height="1" fill="#000"/>
<rect x="956" y="462" width="1" height="3" fill="#000"/>
<rect x="956" y="466" width="1" height="1" fill="#000"/>
<rect x="955" y="465" width="3" height="1" fill="#000"/>
<rect x="960" y="455" width="1" height="2" fill="#000"/>
<rect x="960" y="462" width="1" height="1" fill="#000"/>
<rect x="959.5" y="457.5" width="2" height="4" fill="#fff" stroke="#000" stroke-width="1"/>
<rect x="964" y="454" width="1" height="3" fill="#000"/>
<rect x="964" y="461" width="1" height="1" fill="#000"/>
<rect x="963" y="457" width="3" height="4" fill="#000"/>
<rect x="968" y="458" width="1" height="2" fill="#000"/>
<rect x="968" y="463" width="1" height="1" fill="#000"/>
<rect x="967" y="460" width="3" height="3" fill="#000"/>
<rect x="972" y="458" width="1" height="4" fill="#000"/>
<rect x="972" y="463" width="1" height="5" fill="#000"/>
<rect x="971" y="462" width="3" height="1" fill="#000"/>
<rect x="976" y="458" width="1" height="5" fill="#000"/>
<rect x="976" y="465" width="1" height="1" fill="#000"/>
<rect x="975" y="463" width="3" height="2" fill="#000"/>
<rect x="980" y="456" width="1" height="4" fill="#000"/>
<rect x="980" y="461" width="1" height="2" fill="#000"/>
<rect x="979" y="460" width="3" height="1" fill="#000"/>
<rect x="984" y="458" width="1" height="1" fill="#000"/>
<rect x="984" y="464" width="1" height="1" fill="#000"/>
<rect x="983.5" y="459.5" width="2" height="4" fill="#fff" stroke="#000" stroke-width="1"/>
<rect x="988" y="457" width="1" height="1" fill="#000"/>
<rect x="988" y="464" width="1" height="1" fill="#000"/>
<rect x="987" y="458" width="3" height="6" fill="#000"/>
<rect x="992" y="458" width="1" height="1" fill="#000"/>
<rect x="992" y="462" width="1" height="4" fill="#000"/>
<rect x="991.5" y="459.5" width="2" height="2" fill="#fff" stroke="#000" stroke-width="1"/>
<rect x="996" y="460" width="1" height="1" fill="#000"/>
<rect x="995.5" y="457.5" width="2" height="2" fill="#fff" stroke="#000" stroke-width="1"/>
<rect x="1000" y="454" width="1" height="2" fill="#000"/>
<rect x="1000" y="458" width="1" height="1" fill="#000"/>
<rect x="999" y="456" width="3" height="2" fill="#000"/>
<rect x="1004" y="455" width="1" height="1" fill="#000"/>
<rect x="1004" y="458" width="1" height="1" fill="#000"/>
<rect x="1003" y="456" width="3" height="2" fill="#000"/>
<rect x="1008" y="450" width="1" height="1" fill="#000"/>
<rect x="1008" y="457" width="1" height="1" fill="#000"/>
<rect x="1007.5" y="451.5" width="2" height="5" fill="#fff" stroke="#000" stroke-width="1"/>
<rect x="1012" y="449" width="1" height="1" fill="#000"/>
<rect x="1012" y="453" width="1" height="1" fill="#000"/>
<rect x="1011" y="450" width="3" height="3" fill="#000"/>
<rect x="1016" y="450" width="1" height="1" fill="#000"/>
<rect x="1016" y="455" width="1" height="1" fill="#000"/>
<rect x="1015" y="451" width="3" height="4" fill="#000"/>
<rect x="1020" y="453" width="1" height="1" fill="#000"/>
<rect x="1020" y="462" width="1" height="1" fill="#000"/>
<rect x="1019" y="454" width="3" height="8" fill="#000"/>
<rect x="1024" y="456" width="1" height="1" fill="#000"/>
<rect x="1024" y="460" width="1" height="3" fill="#000"/>
<rect x="1023.5" y="457.5" width="2" height="2" fill="#fff" stroke="#000" stroke-width="1"/>
<rect x="1028" y="456" width="1" height="1" fill="#000"/>
<rect x="1028" y="459" width="1" height="1" fill="#000"/>
<rect x="1027" y="457" width="3" height="2" fill="#000"/>
<rect x="1031.5" y="455.5" width="2" height="3" fill="#fff" stroke="#000" stroke-width="1"/>
<rect x="1035.5" y="451.5" width="2" height="4" fill="#fff" stroke="#000" stroke-width="1"/>
<rect x="1039" y="452" width="3" height="1" fill="#000"/></g>
<g id="levels"><line x1="0" y1="14.5" x2="1198" y2="14.5" stroke="#696969" stroke-width="1" stroke-dasharray="9 3 3 3 3 3"/>
<line x1="0" y1="32.5" x2="1198" y2="32.5" stroke="#696969" stroke-width="1" stroke-dasharray="9 3 3 3 3 3"/>
<line x1="0" y1="50.5" x2="1198" y2="50.5" stroke="#696969" stroke-width="1" stroke-dasharray="9 3 3 3 3 3"/>
<line x1="0" y1="68.5" x2="1198" y2="68.5" stroke="#696969" stroke-width="1" stroke-dasharray="9 3 3 3 3 3"/>
<line x1="0" y1="86.5" x2="1198" y2="86.5" stroke="#696969" stroke-width="1" stroke-dasharray="9 3 3 3 3 3"/>
<line x1="0" y1="104.5" x2="1198" y2="104.5" stroke="#696969" stroke-width="1" stroke-dasharray="9 3 3 3 3 3"/>
<line x1="0" y1="122.5" x2="1198" y2="122.5" stroke="#696969" stroke-width="1" stroke-dasharray="9 3 3 3 3 3"/>
<line x1="0" y1="140.5" x2="1198" y2="140.5" stroke="#696969" stroke-width="1" stroke-dasharray="9 3 3 3 3 3"/>
<line x1="0" y1="158.5" x2="1198" y2="158.5" stroke="#696969" stroke-width="1" stroke-dasharray="9 3 3 3 3 3"/>
<line x1="0" y1="176.5" x2="1198" y2="176.5" stroke="#696969" stroke-width="1" stroke-dasharray="9 3 3 3 3 3"/>
<line x1="0" y1="194.5" x2="1198" y2="194.5" stroke="#696969" stroke-width="1" stroke-dasharray="9 3 3 3 3 3"/>
<line x1="0" y1="212.5" x2="1198" y2="212.5" stroke="#696969" stroke-width="1" stroke-dasharray="9 3 3 3 3 3"/>
<line x1="0" y1="230.5" x2="1198" y2="230.5" stroke="#696969" stroke-width="1" stroke-dasharray="9 3 3 3 3 3"/>
<line x1="0" y1="248.5" x2="1198" y2="248.5" stroke="#696969" stroke-width="1" stroke-dasharray="9 3 3 3 3 3"/>
<line x1="0" y1="266.5" x2="1198" y2="266.5" stroke="#696969" stroke-width="1" stroke-dasharray="9 3 3 3 3 3"/>
<line x1="0" y1="284.5" x2="1198" y2="284.5" stroke="#696969" stroke-width="1" stroke-dasharray="9 3 3 3 3 3"/>
<line x1="0" y1="302.5" x2="1198" y2="302.5" stroke="#696969" stroke-width="1" stroke-dasharray="9 3 3 3 3 3"/>
<line x1="0" y1="320.5" x2="1198" y2="320.5" stroke="#696969" stroke-width="1" stroke-dasharray="9 3 3 3 3 3"/>
<line x1="0" y1="338.5" x2="1198" y2="338.5" stroke="#696969" stroke-width="1" stroke-dasharray="9 3 3 3 3 3"/>
<line x1="0" y1="356.5" x2="1198" y2="356.5" stroke="#696969" stroke-width="1" stroke-dasharray="9 3 3 3 3 3"/>
<line x1="0" y1="374.5" x2="1198" y2="374.5" stroke="#696969" stroke-width="1" stroke-dasharray="9 3 3 3 3 3"/>
<line x1="0" y1="392.5" x2="1198" y2="392.5" stroke="#696969" stroke-width="1" stroke-dasharray="9 3 3 3 3 3"/>
<line x1="0" y1="410.5" x2="1198" y2="410.5" stroke="#696969" stroke-width="1" stroke-dasharray="9 3 3 3 3 3"/>
<line x1="0" y1="428.5" x2="1198" y2="428.5" stroke="#696969" stroke-width="1" stroke-dasharray="9 3 3 3 3 3"/>
<line x1="0" y1="446.5" x2="1198" y2="446.5" stroke="#696969" stroke-width="1" stroke-dasharray="9 3 3 3 3 3"/>
<line x1="0" y1="464.5" x2="1198" y2="464.5" stroke="#696969" stroke-width="1" stroke-dasharray="9 3 3 3 3 3"/>
<line x1="0" y1="482.5" x2="1198" y2="482.5" stroke="#696969" stroke-width="1" stroke-dasharray="9 3 3 3 3 3"/>
<line x1="0" y1="500.5" x2="1198" y2="500.5" stroke="#696969" stroke-width="1" stroke-dasharray="9 3 3 3 3 3"/>
<line x1="0" y1="518.5" x2="1198" y2="518.5" stroke="#696969" stroke-width="1" stroke-dasharray="9 3 3 3 3 3"/>
<line x1="0" y1="536.5" x2="1198" y2="536.5" stroke="#696969" stroke-width="1" stroke-dasharray="9 3 3 3 3 3"/>
<line x1="0" y1="554.5" x2="1198" y2="554.5" stroke="#696969" stroke-width="1" stroke-dasharray="9 3 3 3 3 3"/></g>
<g id="sessions">
<line x1="52.5" y1="3" x2="52.5" y2="562" stroke="#A9A9A9" stroke-width="1" stroke-dasharray="3 3"/>
<line x1="68.5" y1="3" x2="68.5" y2="562" stroke="#A9A9A9" stroke-width="1" stroke-dasharray="3 3"/>
<line x1="420.5" y1="3" x2="420.5" y2="562" stroke="#A9A9A9" stroke-width="1" stroke-dasharray="3 3"/>
<line x1="436.5" y1="3" x2="436.5" y2="562" stroke="#A9A9A9" stroke-width="1" stroke-dasharray="3 3"/>
<line x1="788.5" y1="3" x2="788.5" y2="562" stroke="#A9A9A9" stroke-width="1" stroke-dasharray="3 3"/>
<line x1="804.5" y1="3" x2="804.5" y2="562" stroke="#A9A9A9" stroke-width="1" stroke-dasharray="3 3"/>
</g>
<g id="indicators">
<line x1="0.5" y1="362.5" x2="48.5" y2="414.5" stroke="#FF0000" stroke-width="2.05"/>
<line x1="48.5" y1="414.5" x2="140.5" y2="265.5" stroke="#1E90FF" stroke-width="2.05"/>
<line x1="140.5" y1="265.5" x2="160.5" y2="300.5" stroke="#FF0000" stroke-width="2.05"/>
<line x1="160.5" y1="300.5" x2="204.5" y2="14.5" stroke="#1E90FF" stroke-width="2.05"/>
<line x1="204.5" y1="14.5" x2="276.5" y2="242.5" stroke="#FF0000" stroke-width="2.05"/>
<line x1="276.5" y1="242.5" x2="300.5" y2="210.5" stroke="#1E90FF" stroke-width="2.05"/>
<line x1="300.5" y1="210.5" x2="340.5" y2="328.5" stroke="#FF0000" stroke-width="2.05"/>
<line x1="340.5" y1="328.5" x2="364.5" y2="263.5" stroke="#1E90FF" stroke-width="2.05"/>
<line x1="364.5" y1="263.5" x2="460.5" y2="463.5" stroke="#FF0000" stroke-width="2.05"/>
<line x1="460.5" y1="463.5" x2="588.5" y2="387.5" stroke="#1E90FF" stroke-width="2.05"/>
<line x1="588.5" y1="387.5" x2="620.5" y2="415.5" stroke="#FF0000" stroke-width="2.05"/>
<line x1="620.5" y1="415.5" x2="644.5" y2="399.0" stroke="#1E90FF" stroke-width="2.05"/>
<line x1="644.5" y1="399.0" x2="656.5" y2="426.5" stroke="#FF0000" stroke-width="2.05"/>
<line x1="656.5" y1="426.5" x2="712.5" y2="393.5" stroke="#1E90FF" stroke-width="2.05"/>
<line x1="712.5" y1="393.5" x2="764.5" y2="458.5" stroke="#FF0000" stroke-width="2.05"/>
<line x1="764.5" y1="458.5" x2="796.5" y2="426.5" stroke="#1E90FF" stroke-width="2.05"/>
<line x1="796.5" y1="426.5" x2="832.5" y2="500.5" stroke="#FF0000" stroke-width="2.05"/>
<line x1="832.5" y1="500.5" x2="900.5" y2="461.5" stroke="#1E90FF" stroke-width="2.05"/>
<line x1="900.5" y1="461.5" x2="940.5" y2="474.5" stroke="#FF0000" stroke-width="2.05"/>
<line x1="940.5" y1="474.5" x2="1008.5" y2="450.0" stroke="#1E90FF" stroke-width="2.05"/>
<line x1="1008.5" y1="450.0" x2="1024.5" y2="462.5" stroke="#FF0000" stroke-width="2.05"/>
<line x1="1024.5" y1="462.5" x2="1036.5" y2="448.5" stroke="#1E90FF" stroke-width="2.05"/>
<polyline points="1.0,395.8 4.0,395.8 7.0,395.8 10.0,395.8 13.0,395.8 16.0,395.8 19.0,395.8 22.0,395.8 25.0,395.8 28.0,395.8 31.0,395.7 34.0,395.7 37.0,395.7 40.0,395.7 43.0,395.7 46.0,395.7 49.0,395.6 52.0,395.6 55.0,395.6 58.0,395.6 61.0,395.6 64.0,395.5 67.0,395.5 70.0,395.5 73.0,395.5 76.0,395.3 79.0,395.5 82.0,395.5 85.0,395.3 88.0,395.2 91.0,395.0 94.0,394.8 97.0,394.5 100.0,394.2 103.0,394.0 106.0,393.8 109.0,393.6 112.0,393.3 115.0,392.7 118.0,392.0 121.0,391.3 124.0,390.6 127.0,389.9 130.0,389.2 133.0,388.5 136.0,387.9 139.0,387.2 142.0,386.5 145.0,385.8 148.0,385.1 151.0,384.3 154.0,383.5 157.0,382.6 160.0,381.8 163.0,381.1 166.0,380.4 169.0,379.7 172.0,379.0 175.0,378.3 178.0,377.6 181.0,377.0 184.0,376.4 187.0,375.9 190.0,375.3 193.0,374.8 196.0,374.2 199.0,373.0 202.0,371.4 205.0,369.7 208.0,368.2 211.0,366.2 214.0,364.1 217.0,362.3 220.0,360.7 223.0,359.1 226.0,357.6 229.0,356.2 232.0,354.8 235.0,353.7 238.0,352.6 241.0,351.5 244.0,350.6 247.0,349.7 250.0,348.8 253.0,347.9 256.0,347.0 259.0,346.1 262.0,345.1 265.0,344.2 268.0,343.2 271.0,342.2 274.0,341.5 277.0,340.9 280.0,340.4 283.0,339.4 286.0,338.5 289.0,337.7 292.0,336.9 295.0,336.2 298.0,335.5 301.0,334.8 304.0,334.1 307.0,333.3 310.0,332.5 313.0,331.7 316.0,330.9 319.0,330.2 322.0,329.5 325.0,329.0 328.0,328.4 331.0,327.9 334.0,327.5 337.0,327.0 340.0,326.5 343.0,326.2 346.0,326.0 349.0,325.7 352.0,325.3 355.0,325.0 358.0,324.6 361.0,324.3 364.0,324.0 367.0,323.7 370.0,323.5 373.0,323.2 376.0,323.0 379.0,322.7 382.0,322.4 385.0,322.2 388.0,322.0 391.0,321.7 394.0,321.5 397.0,321.3 400.0,321.0 403.0,320.8 406.0,320.6 409.0,320.4 412.0,320.2 415.0,320.0 418.0,319.8 421.0,319.7 424.0,319.5 427.0,319.3 430.0,319.2 433.0,319.2 436.0,319.5 439.0,319.7 442.0,320.0 445.0,320.5 448.0,321.0 451.0,321.3 454.0,321.6 457.0,322.0 460.0,322.3 463.0,323.2 466.0,324.2 469.0,325.3 472.0,326.1 475.0,326.8 478.0,327.4 481.0,328.1 484.0,328.7 487.0,329.3 490.0,330.1 493.0,330.9 496.0,331.9 499.0,332.9 502.0,333.7 505.0,334.6 508.0,335.4 511.0,336.2 514.0,337.0 517.0,337.9 520.0,338.7 523.0,339.6 526.0,340.4 529.0,341.1 532.0,341.8 535.0,342.4 538.0,343.1 541.0,343.9 544.0,344.6 547.0,345.3 550.0,346.0 553.0,346.8 556.0,347.5 559.0,348.1 562.0,348.7 565.0,349.3 568.0,349.9 571.0,350.5 574.0,351.1 577.0,351.6 580.0,352.0 583.0,352.5 586.0,352.9 589.0,353.4 592.0,353.8 595.0,354.3 598.0,354.7 601.0,355.1 604.0,355.5 607.0,355.9 610.0,356.2 613.0,356.6 616.0,357.0 619.0,357.4 622.0,357.8 625.0,358.1 628.0,358.5 631.0,358.9 634.0,359.3 637.0,359.6 640.0,360.0 643.0,360.3 646.0,360.6 649.0,361.0 652.0,361.3 655.0,361.7 658.0,362.1 661.0,362.5 664.0,362.9 667.0,363.3 670.0,363.6 673.0,364.1 676.0,364.5 679.0,364.9 682.0,365.3 685.0,365.6 688.0,365.9 691.0,366.2 694.0,366.5 697.0,366.8 700.0,367.6 703.0,368.2 706.0,368.6 709.0,368.8 712.0,369.0 715.0,369.2 718.0,369.4 721.0,369.7 724.0,370.0 727.0,370.4 730.0,370.8 733.0,371.2 736.0,371.6 739.0,372.1 742.0,372.5 745.0,372.9 748.0,373.3 751.0,373.8 754.0,374.2 757.0,374.6 760.0,375.2 763.0,375.9 766.0,376.6 769.0,377.3 772.0,377.7 775.0,378.1 778.0,378.5 781.0,378.9 784.0,379.3 787.0,379.8 790.0,380.2 793.0,380.7 796.0,381.1 799.0,381.6 802.0,382.1 805.0,382.5 808.0,383.1 811.0,383.7 814.0,384.3 817.0,384.9 820.0,385.5 823.0,386.0 826.0,386.6 829.0,387.2 832.0,387.7 835.0,388.3 838.0,388.9 841.0,389.6 844.0,390.2 847.0,390.9 850.0,391.5 853.0,392.2 856.0,392.9 859.0,393.6 862.0,394.2 865.0,394.8 868.0,395.3 871.0,395.9 874.0,396.5 877.0,397.0 880.0,397.5 883.0,398.0 886.0,398.5 889.0,399.0 892.0,399.5 895.0,399.9 898.0,400.4 901.0,400.9 904.0,401.4 907.0,401.9 910.0,402.4 913.0,402.9 916.0,403.4 919.0,403.9 922.0,404.3 925.0,404.8 928.0,405.2 931.0,405.7 934.0,406.1 937.0,406.5 940.0,406.8 943.0,407.2 946.0,407.5 949.0,407.9 952.0,408.3 955.0,408.7 958.0,409.1 961.0,409.5 964.0,409.9 967.0,410.3 970.0,410.7 973.0,411.1 976.0,411.5 979.0,411.8 982.0,412.2 985.0,412.5 988.0,412.8 991.0,413.2 994.0,413.5 997.0,413.9 1000.0,414.2 1003.0,414.6 1006.0,415.0 1009.0,415.4 1012.0,415.8 1015.0,416.2 1018.0,416.5 1021.0,416.8 1024.0,417.0 1027.0,417.3 1030.0,417.6 1033.0,417.8 1036.0,418.1 1039.0,418.3" fill="none" stroke="#787878" stroke-width="1" stroke-dasharray="3 3"/>
<polyline points="0.0,386.0 12.0,383.5 30.0,385.0 50.0,389.0 70.0,392.0 80.0,391.5 90.0,389.0 100.0,385.0 110.0,379.0 120.0,371.0 130.0,361.0 140.0,352.0 150.0,344.0 160.0,337.0 170.0,332.0 180.0,325.0 190.0,320.0 196.0,316.0 198.3,310.0 201.0,302.0 204.2,294.2 207.5,288.3 210.4,281.7 211.7,278.3 215.8,273.3 220.0,269.2 224.2,265.0 228.3,261.7 232.5,259.6 236.7,257.5 240.8,255.8 245.0,254.6 249.2,252.9 253.3,251.2 257.5,249.6 261.7,248.3 265.8,247.1 270.0,246.2 274.2,245.4 278.3,244.3 282.5,243.6 285.0,243.3 290.0,242.0 300.0,239.0 312.0,237.6 320.0,238.6 330.0,243.0 340.0,250.0 350.0,255.0 364.0,258.4 378.0,263.6 390.0,267.0 402.0,270.0 420.0,274.4 430.0,278.0 436.0,282.0 440.0,288.0 450.0,296.0 456.2,305.0 462.4,313.8 468.7,322.7 474.9,333.0 479.1,339.3 487.4,348.7 496.8,359.6 510.0,373.0 520.0,382.0 530.0,387.0 540.0,393.0 550.0,398.0 562.0,402.0 570.0,404.0 580.0,404.6 600.0,405.2 620.0,405.6 640.0,406.0 660.0,406.6 672.0,407.6 690.0,409.0 704.0,410.3 726.0,411.8 740.0,415.4 756.0,419.7 769.0,424.7 783.6,428.3 803.8,429.8 812.0,433.4 820.0,437.0 830.0,441.0 840.0,446.0 850.0,450.4 860.0,453.0 870.0,455.7 880.0,457.6 890.0,459.0 900.0,459.6 908.6,460.3 928.8,461.3 937.0,462.7 957.6,463.0 972.0,462.7 986.4,462.0 1000.8,461.3 1015.0,460.0 1029.6,459.8 1040.4,458.8" fill="none" stroke="#008000" stroke-width="2" stroke-linejoin="round"/>
<polyline points="17.0,398.5 27.0,398.5" fill="none" stroke="#00BFFF" stroke-width="2" stroke-linejoin="round"/>
<polyline points="72.0,392.5 74.0,395.0 76.5,398.5 78.0,399.4 80.0,399.8 82.0,399.8 84.0,399.7 86.0,399.7 88.0,399.7 90.0,399.6 92.0,399.6 94.0,399.4 96.0,399.3 98.0,399.1 100.0,399.0 102.0,398.8 104.0,398.6 106.0,398.5 108.0,398.3 110.0,398.2 112.0,398.0 114.0,397.6 116.0,397.1 118.0,396.6 120.0,396.2 122.0,395.7 124.0,395.3 126.0,394.8 128.0,394.3 130.0,393.9 132.0,393.4 134.0,392.9 136.0,392.4 138.0,392.0 140.0,391.5 142.0,391.0 144.0,390.5 146.0,390.0 148.0,389.5 150.0,389.0 152.0,388.3 154.0,387.6 156.0,386.9 158.0,386.2 160.0,385.5 162.0,385.0 164.0,384.5 166.0,384.1 168.0,383.6 170.0,383.1 172.0,382.6 174.0,382.1 176.0,381.7 178.0,381.2 180.0,380.7 182.0,380.3 184.0,379.9 186.0,379.5 188.0,379.1 190.0,378.7 192.0,378.3 194.0,377.9 196.0,377.5 198.0,377.1 200.0,376.7 202.0,376.1 204.0,375.5 206.0,374.4 208.0,373.2 210.0,372.1 212.0,370.9 214.0,369.8 216.0,368.6 218.0,367.7 220.0,366.8 222.0,365.9 224.0,365.0 226.0,364.1 228.0,363.2 230.0,362.3 232.0,361.4 234.0,360.7 236.0,360.0 238.0,359.3 240.0,358.6 242.0,358.1 244.0,357.6 246.0,357.1 248.0,356.6 250.0,356.0 252.0,355.4 254.0,354.8 256.0,354.2 258.0,353.6 260.0,353.1 262.0,352.6 264.0,352.0 266.0,351.2 268.0,350.5 270.0,349.8 272.0,349.0 274.0,348.6 276.0,348.1 278.0,347.6 280.0,347.2 282.0,346.6 284.0,346.1 286.0,345.6 288.0,345.0 290.0,344.5 292.0,344.0 294.0,343.5 296.0,343.0 298.0,342.6 300.0,342.2 302.0,341.7 304.0,341.2 306.0,340.6 308.0,340.1 310.0,339.6 312.0,339.1 314.0,338.6 316.0,338.0 318.0,337.5 320.0,337.0 322.0,336.6 324.0,336.2 326.0,335.9 328.0,335.5 330.0,335.1 332.0,334.9 334.0,334.7 336.0,334.4 338.0,334.2 340.0,334.0 342.0,333.8 344.0,333.7 346.0,333.5 348.0,333.4 350.0,333.2 352.0,332.9 354.0,332.6 356.0,332.3 358.0,332.1 360.0,331.8 362.0,331.6 364.0,331.4 366.0,331.3 368.0,331.1 370.0,330.9 372.0,330.8 374.0,330.6 376.0,330.4 378.0,330.2 380.0,330.1 382.0,329.9 384.0,329.7 386.0,329.6 388.0,329.4 390.0,329.3 392.0,329.1 394.0,329.0 396.0,328.8 398.0,328.7 400.0,328.5 402.0,328.4 404.0,328.2 406.0,328.1 408.0,327.9 410.0,327.8 412.0,327.6 414.0,327.4 416.0,327.3 418.0,327.2 420.0,327.0 422.0,326.9 424.0,326.7 426.0,326.6" fill="none" stroke="#00BFFF" stroke-width="2" stroke-linejoin="round"/>
<polyline points="30.0,392.3 72.0,392.3" fill="none" stroke="#FF0000" stroke-width="2" stroke-linejoin="round"/>
<polyline points="427.0,325.5 428.8,325.0 430.4,320.4 432.0,314.0 434.4,312.0 436.0,312.1 438.0,312.1 440.0,312.1 442.0,312.4 444.0,312.8 446.0,313.1 448.0,313.5 450.0,313.6 452.0,313.6 454.0,313.6 456.0,313.7 458.0,313.7 460.0,313.8 462.0,314.4 464.0,315.2 466.0,316.1 468.0,317.1 470.0,317.8 472.0,318.3 474.0,318.8 476.0,319.3 478.0,319.8 480.0,320.3 482.0,320.8 484.0,321.3 486.0,321.8 488.0,322.3 490.0,322.8 492.0,323.4 494.0,324.2 496.0,325.0 498.0,325.9 500.0,326.4 502.0,326.9 504.0,327.3 506.0,327.8 508.0,328.3 510.0,328.9 512.0,329.5 514.0,330.1 516.0,330.7 518.0,331.3 520.0,332.0 522.0,332.7 524.0,333.3 526.0,333.8 528.0,334.2 530.0,334.6 532.0,335.1 534.0,335.5 536.0,335.9 538.0,336.3 540.0,336.8 542.0,337.2 544.0,337.7 546.0,338.1 548.0,338.5 550.0,338.9 552.0,339.4 554.0,339.8 556.0,340.2 558.0,340.6 560.0,341.1 562.0,341.5 564.0,341.9 566.0,342.3 568.0,342.7 570.0,343.1 572.0,343.5 574.0,343.8 576.0,344.2 578.0,344.6 580.0,345.0 582.0,345.3 584.0,345.7 586.0,346.0 588.0,346.3 590.0,346.7 592.0,347.0 594.0,347.3 596.0,347.7 598.0,348.0 600.0,348.3 602.0,348.5 604.0,348.8 606.0,349.1 608.0,349.3 610.0,349.6 612.0,349.9 614.0,350.1 616.0,350.4 618.0,350.7 620.0,350.9 622.0,351.2 624.0,351.5 626.0,351.7 628.0,352.0 630.0,352.3 632.0,352.5 634.0,352.8 636.0,353.0 638.0,353.2 640.0,353.4 642.0,353.6 644.0,353.8 646.0,354.0 648.0,354.2 650.0,354.4 652.0,354.6 654.0,354.9 656.0,355.1 658.0,355.4 660.0,355.7 662.0,355.9 664.0,356.2 666.0,356.5 668.0,356.7 670.0,357.0 672.0,357.3 674.0,357.5 676.0,357.8 678.0,358.1 680.0,358.3 682.0,358.6 684.0,358.7 686.0,358.8 688.0,358.9 690.0,359.0 692.0,359.2 694.0,359.3 696.0,359.4 698.0,360.0 700.0,360.7 702.0,361.4 704.0,362.1 706.0,362.3 708.0,362.4 710.0,362.6 712.0,362.7 714.0,362.9 716.0,363.0 718.0,363.1 720.0,363.3 722.0,363.4 724.0,363.6 726.0,363.7 728.0,364.0 730.0,364.3 732.0,364.6 734.0,364.9 736.0,365.2 738.0,365.4 740.0,365.7 742.0,366.0 744.0,366.3 746.0,366.6 748.0,366.9 750.0,367.1 752.0,367.4 754.0,367.7 756.0,368.0 758.0,368.3 760.0,368.7 762.0,369.3 764.0,370.0 766.0,370.6 768.0,371.2 770.0,371.7 772.0,371.9 774.0,372.1 776.0,372.3 778.0,372.5 780.0,372.6 782.0,372.8 784.0,373.1 786.0,373.3 788.0,373.6 790.0,373.9 792.0,374.2 794.0,374.4 796.0,374.7 798.0,375.0 800.0,375.3 802.0,375.6 804.0,375.8 806.0,376.2 808.0,376.5 810.0,376.9 812.0,377.3 814.0,377.7 816.0,378.1 818.0,378.5 820.0,378.9 822.0,379.3 824.0,379.7 826.0,380.1 828.0,380.5 830.0,380.9 832.0,381.3 834.0,381.7 836.0,382.2 838.0,382.7 840.0,383.2 842.0,383.7 844.0,384.2 846.0,384.7 848.0,385.2 850.0,385.6 852.0,385.9 854.0,386.2 856.0,386.6 858.0,386.9 860.0,387.2 862.0,387.6 864.0,388.0 866.0,388.4 868.0,388.9 870.0,389.3 872.0,389.8 874.0,390.2 876.0,390.6 878.0,390.9 880.0,391.2 882.0,391.6 884.0,391.9 886.0,392.2 888.0,392.5 890.0,392.9 892.0,393.2 894.0,393.5 896.0,393.8 898.0,394.2 900.0,394.5 902.0,394.9 904.0,395.3 906.0,395.6 908.0,396.0 910.0,396.3 912.0,396.7 914.0,397.1 916.0,397.4 918.0,397.8 920.0,398.1 922.0,398.5 924.0,398.9 926.0,399.2 928.0,399.6 930.0,400.0 932.0,400.3 934.0,400.7 936.0,400.9 938.0,401.2 940.0,401.4 942.0,401.7 944.0,401.9 946.0,402.2 948.0,402.4 950.0,402.7 952.0,402.9 954.0,403.2 956.0,403.5 958.0,403.7 960.0,404.0 962.0,404.3 964.0,404.6 966.0,404.8 968.0,405.1 970.0,405.4 972.0,405.6 974.0,405.9 976.0,406.1 978.0,406.3 980.0,406.6 982.0,406.8 984.0,407.0 986.0,407.3 988.0,407.5 990.0,407.7 992.0,408.0 994.0,408.2 996.0,408.5 998.0,408.8 1000.0,409.1 1002.0,409.4 1004.0,409.7 1006.0,410.0 1008.0,410.3 1010.0,410.6 1012.0,410.9 1014.0,411.2 1016.0,411.4 1018.0,411.6 1020.0,411.8 1022.0,411.9 1024.0,412.1 1026.0,412.3 1028.0,412.4 1030.0,412.6 1032.0,412.7 1034.0,412.7 1036.0,412.8 1038.0,412.8 1040.0,412.9" fill="none" stroke="#FF0000" stroke-width="2" stroke-linejoin="round"/>
</g>
<g id="xnor" clip-path="url(#tq)">
<rect x="756" y="418" width="13" height="11" fill="#00AD04"/>
<rect x="769" y="418" width="19" height="7" fill="#00BD2E"/>
<rect x="788" y="418" width="160" height="7" fill="#00CED1"/>
<rect x="769" y="425" width="3" height="4" fill="#00BD2E"/>
<rect x="772" y="425" width="16" height="4" fill="#19A42B"/>
<rect x="788" y="425" width="61" height="8" fill="#19D7D4"/>
<rect x="849" y="425" width="99" height="8" fill="#00CED1"/>
<rect x="756" y="429" width="13" height="4" fill="#00DEFB"/>
<rect x="769" y="429" width="3" height="4" fill="#00CED1"/>
<rect x="772" y="429" width="16" height="4" fill="#19D7D4"/>
<rect x="812" y="484" width="37" height="17" fill="#19D7D4"/>
<rect x="849" y="484" width="79" height="17" fill="#00CED1"/>
<rect x="816" y="534" width="112" height="28" fill="#00CED1"/>
<line x1="196.5" y1="2" x2="196.5" y2="562" stroke="#FF312E" stroke-width="1" stroke-dasharray="3 3" stroke-dashoffset="-1"/>
<line x1="564.5" y1="2" x2="564.5" y2="562" stroke="#FF312E" stroke-width="1" stroke-dasharray="3 3" stroke-dashoffset="-1"/>
<line x1="932.5" y1="2" x2="932.5" y2="562" stroke="#FF312E" stroke-width="1" stroke-dasharray="3 3" stroke-dashoffset="-1"/>
<rect x="4" y="557" width="1" height="5" fill="#FFB12E"/>
<rect x="8" y="557" width="1" height="5" fill="#FFB12E"/>
<rect x="12" y="557" width="1" height="5" fill="#FFB12E"/>
<rect x="16" y="557" width="1" height="5" fill="#FFB12E"/>
<rect x="20" y="557" width="1" height="5" fill="#FFB12E"/>
<rect x="24" y="557" width="1" height="5" fill="#FFB12E"/>
<rect x="28" y="549" width="1" height="13" fill="#FFB12E"/>
<rect x="32" y="547" width="1" height="15" fill="#FFB12E"/>
<rect x="36" y="548" width="1" height="14" fill="#FFB12E"/>
<rect x="40" y="550" width="1" height="12" fill="#FFB12E"/>
<rect x="44" y="558" width="1" height="4" fill="#FFB12E"/>
<rect x="48" y="542" width="1" height="20" fill="#FFB12E"/>
<rect x="52" y="540" width="1" height="22" fill="#FFB12E"/>
<rect x="56" y="537" width="1" height="25" fill="#FFB12E"/>
<rect x="60" y="540" width="1" height="22" fill="#FFB12E"/>
<rect x="64" y="543" width="1" height="19" fill="#FFB12E"/>
<rect x="68" y="542" width="1" height="20" fill="#FFB12E"/>
<rect x="72" y="545" width="1" height="17" fill="#FFB12E"/>
<rect x="76" y="530" width="1" height="32" fill="#FFB12E"/>
<rect x="80" y="534" width="1" height="28" fill="#FFB12E"/>
<rect x="84" y="519" width="1" height="43" fill="#FFB12E"/>
<rect x="88" y="519" width="1" height="43" fill="#FFB12E"/>
<rect x="92" y="526" width="1" height="36" fill="#FFB12E"/>
<rect x="96" y="533" width="1" height="29" fill="#FFB12E"/>
<rect x="100" y="519" width="1" height="43" fill="#FFB12E"/>
<rect x="104" y="519" width="1" height="43" fill="#FFB12E"/>
<rect x="108" y="526" width="1" height="36" fill="#FFB12E"/>
<rect x="112" y="536" width="1" height="26" fill="#FFB12E"/>
<rect x="116" y="539" width="1" height="23" fill="#FFB12E"/>
<rect x="120" y="540" width="1" height="22" fill="#FFB12E"/>
<rect x="124" y="544" width="1" height="18" fill="#FFB12E"/>
<rect x="128" y="542" width="1" height="20" fill="#FFB12E"/>
<rect x="132" y="539" width="1" height="23" fill="#FFB12E"/>
<rect x="136" y="536" width="1" height="26" fill="#FFB12E"/>
<rect x="140" y="532" width="1" height="30" fill="#FFB12E"/>
<rect x="144" y="540" width="1" height="22" fill="#FFB12E"/>
<rect x="148" y="545" width="1" height="17" fill="#FFB12E"/>
<rect x="152" y="549" width="1" height="13" fill="#FFB12E"/>
<rect x="156" y="551" width="1" height="11" fill="#FFB12E"/>
<rect x="160" y="550" width="1" height="12" fill="#FFB12E"/>
<rect x="164" y="549" width="1" height="13" fill="#FFB12E"/>
<rect x="168" y="558" width="1" height="4" fill="#FFB12E"/>
<rect x="172" y="558" width="1" height="4" fill="#FFB12E"/>
<rect x="176" y="549" width="1" height="13" fill="#FFB12E"/>
<rect x="180" y="558" width="1" height="4" fill="#FFB12E"/>
<rect x="184" y="558" width="1" height="4" fill="#FFB12E"/>
<rect x="188" y="558" width="1" height="4" fill="#FFB12E"/>
<rect x="192" y="558" width="1" height="4" fill="#FFB12E"/>
<rect x="196" y="545" width="1" height="17" fill="#FFB12E"/>
<rect x="200" y="548" width="1" height="14" fill="#FFB12E"/>
<rect x="204" y="550" width="1" height="12" fill="#FFB12E"/>
<rect x="208" y="533" width="1" height="29" fill="#FFB12E"/>
<rect x="212" y="537" width="1" height="25" fill="#FFB12E"/>
<rect x="216" y="543" width="1" height="19" fill="#FFB12E"/>
<rect x="220" y="542" width="1" height="20" fill="#FFB12E"/>
<rect x="224" y="534" width="1" height="28" fill="#FFB12E"/>
<rect x="228" y="526" width="1" height="36" fill="#FFB12E"/>
<rect x="232" y="540" width="1" height="22" fill="#FFB12E"/>
<rect x="236" y="533" width="1" height="29" fill="#FFB12E"/>
<rect x="240" y="542" width="1" height="20" fill="#FFB12E"/>
<rect x="244" y="546" width="1" height="16" fill="#FFB12E"/>
<rect x="248" y="550" width="1" height="12" fill="#FFB12E"/>
<rect x="252" y="558" width="1" height="4" fill="#FFB12E"/>
<rect x="256" y="549" width="1" height="13" fill="#FFB12E"/>
<rect x="260" y="550" width="1" height="12" fill="#FFB12E"/>
<rect x="264" y="558" width="1" height="4" fill="#FFB12E"/>
<rect x="268" y="558" width="1" height="4" fill="#FFB12E"/>
<rect x="272" y="558" width="1" height="4" fill="#FFB12E"/>
<rect x="276" y="558" width="1" height="4" fill="#FFB12E"/>
<rect x="280" y="558" width="1" height="4" fill="#FFB12E"/>
<rect x="284" y="558" width="1" height="4" fill="#FFB12E"/>
<rect x="288" y="558" width="1" height="4" fill="#FFB12E"/>
<rect x="292" y="558" width="1" height="4" fill="#FFB12E"/>
<rect x="296" y="558" width="1" height="4" fill="#FFB12E"/>
<rect x="300" y="550" width="1" height="12" fill="#FFB12E"/>
<rect x="304" y="558" width="1" height="4" fill="#FFB12E"/>
<rect x="308" y="550" width="1" height="12" fill="#FFB12E"/>
<rect x="312" y="548" width="1" height="14" fill="#FFB12E"/>
<rect x="316" y="558" width="1" height="4" fill="#FFB12E"/>
<rect x="320" y="539" width="1" height="23" fill="#FFB12E"/>
<rect x="324" y="541" width="1" height="21" fill="#FFB12E"/>
<rect x="328" y="546" width="1" height="16" fill="#FFB12E"/>
<rect x="332" y="540" width="1" height="22" fill="#FFB12E"/>
<rect x="336" y="535" width="1" height="27" fill="#FFB12E"/>
<rect x="340" y="534" width="1" height="28" fill="#FFB12E"/>
<rect x="344" y="543" width="1" height="19" fill="#FFB12E"/>
<rect x="348" y="543" width="1" height="19" fill="#FFB12E"/>
<rect x="352" y="548" width="1" height="14" fill="#FFB12E"/>
<rect x="356" y="545" width="1" height="17" fill="#FFB12E"/>
<rect x="360" y="549" width="1" height="13" fill="#FFB12E"/>
<rect x="364" y="545" width="1" height="17" fill="#FFB12E"/>
<rect x="368" y="550" width="1" height="12" fill="#FFB12E"/>
<rect x="372" y="546" width="1" height="16" fill="#FFB12E"/>
<rect x="376" y="550" width="1" height="12" fill="#FFB12E"/>
<rect x="380" y="551" width="1" height="11" fill="#FFB12E"/>
<rect x="384" y="558" width="1" height="4" fill="#FFB12E"/>
<rect x="388" y="558" width="1" height="4" fill="#FFB12E"/>
<rect x="392" y="558" width="1" height="4" fill="#FFB12E"/>
<rect x="396" y="550" width="1" height="12" fill="#FFB12E"/>
<rect x="400" y="551" width="1" height="11" fill="#FFB12E"/>
<rect x="404" y="548" width="1" height="14" fill="#FFB12E"/>
<rect x="408" y="549" width="1" height="13" fill="#FFB12E"/>
<rect x="412" y="549" width="1" height="13" fill="#FFB12E"/>
<rect x="416" y="558" width="1" height="4" fill="#FFB12E"/>
<rect x="420" y="558" width="1" height="4" fill="#FFB12E"/>
<rect x="424" y="531" width="1" height="31" fill="#FFB12E"/>
<rect x="428" y="532" width="1" height="30" fill="#FFB12E"/>
<rect x="432" y="533" width="1" height="29" fill="#FFB12E"/>
<rect x="436" y="531" width="1" height="31" fill="#FFB12E"/>
<rect x="440" y="519" width="1" height="43" fill="#FFB12E"/>
<rect x="444" y="519" width="1" height="43" fill="#FFB12E"/>
<rect x="448" y="523" width="1" height="39" fill="#FFB12E"/>
<rect x="452" y="519" width="1" height="43" fill="#FFB12E"/>
<rect x="456" y="519" width="1" height="43" fill="#FFB12E"/>
<rect x="460" y="519" width="1" height="43" fill="#FFB12E"/>
<rect x="464" y="529" width="1" height="33" fill="#FFB12E"/>
<rect x="468" y="524" width="1" height="38" fill="#FFB12E"/>
<rect x="472" y="531" width="1" height="31" fill="#FFB12E"/>
<rect x="476" y="530" width="1" height="32" fill="#FFB12E"/>
<rect x="480" y="534" width="1" height="28" fill="#FFB12E"/>
<rect x="484" y="539" width="1" height="23" fill="#FFB12E"/>
<rect x="488" y="541" width="1" height="21" fill="#FFB12E"/>
<rect x="492" y="546" width="1" height="16" fill="#FFB12E"/>
<rect x="496" y="546" width="1" height="16" fill="#FFB12E"/>
<rect x="500" y="543" width="1" height="19" fill="#FFB12E"/>
<rect x="504" y="540" width="1" height="22" fill="#FFB12E"/>
<rect x="508" y="549" width="1" height="13" fill="#FFB12E"/>
<rect x="512" y="558" width="1" height="4" fill="#FFB12E"/>
<rect x="516" y="558" width="1" height="4" fill="#FFB12E"/>
<rect x="520" y="558" width="1" height="4" fill="#FFB12E"/>
<rect x="524" y="549" width="1" height="13" fill="#FFB12E"/>
<rect x="528" y="549" width="1" height="13" fill="#FFB12E"/>
<rect x="532" y="551" width="1" height="11" fill="#FFB12E"/>
<rect x="536" y="558" width="1" height="4" fill="#FFB12E"/>
<rect x="540" y="558" width="1" height="4" fill="#FFB12E"/>
<rect x="544" y="549" width="1" height="13" fill="#FFB12E"/>
<rect x="548" y="558" width="1" height="4" fill="#FFB12E"/>
<rect x="552" y="558" width="1" height="4" fill="#FFB12E"/>
<rect x="556" y="560" width="1" height="2" fill="#FFB12E"/>
<rect x="560" y="559" width="1" height="3" fill="#FFB12E"/>
<rect x="564" y="559" width="1" height="3" fill="#FFB12E"/>
<rect x="568" y="559" width="1" height="3" fill="#FFB12E"/>
<rect x="572" y="559" width="1" height="3" fill="#FFB12E"/>
<rect x="576" y="558" width="1" height="4" fill="#FFB12E"/>
<rect x="580" y="549" width="1" height="13" fill="#FFB12E"/>
<rect x="584" y="558" width="1" height="4" fill="#FFB12E"/>
<rect x="588" y="548" width="1" height="14" fill="#FFB12E"/>
<rect x="592" y="551" width="1" height="11" fill="#FFB12E"/>
<rect x="596" y="543" width="1" height="19" fill="#FFB12E"/>
<rect x="600" y="546" width="1" height="16" fill="#FFB12E"/>
<rect x="604" y="548" width="1" height="14" fill="#FFB12E"/>
<rect x="608" y="545" width="1" height="17" fill="#FFB12E"/>
<rect x="612" y="551" width="1" height="11" fill="#FFB12E"/>
<rect x="616" y="558" width="1" height="4" fill="#FFB12E"/>
<rect x="620" y="558" width="1" height="4" fill="#FFB12E"/>
<rect x="624" y="558" width="1" height="4" fill="#FFB12E"/>
<rect x="628" y="558" width="1" height="4" fill="#FFB12E"/>
<rect x="632" y="558" width="1" height="4" fill="#FFB12E"/>
<rect x="636" y="550" width="1" height="12" fill="#FFB12E"/>
<rect x="640" y="558" width="1" height="4" fill="#FFB12E"/>
<rect x="644" y="558" width="1" height="4" fill="#FFB12E"/>
<rect x="648" y="558" width="1" height="4" fill="#FFB12E"/>
<rect x="652" y="558" width="1" height="4" fill="#FFB12E"/>
<rect x="656" y="558" width="1" height="4" fill="#FFB12E"/>
<rect x="660" y="558" width="1" height="4" fill="#FFB12E"/>
<rect x="664" y="558" width="1" height="4" fill="#FFB12E"/>
<rect x="668" y="551" width="1" height="11" fill="#FFB12E"/>
<rect x="672" y="550" width="1" height="12" fill="#FFB12E"/>
<rect x="676" y="558" width="1" height="4" fill="#FFB12E"/>
<rect x="680" y="558" width="1" height="4" fill="#FFB12E"/>
<rect x="684" y="558" width="1" height="4" fill="#FFB12E"/>
<rect x="688" y="551" width="1" height="11" fill="#FFB12E"/>
<rect x="692" y="548" width="1" height="14" fill="#FFB12E"/>
<rect x="696" y="549" width="1" height="13" fill="#FFB12E"/>
<rect x="700" y="546" width="1" height="16" fill="#FFB12E"/>
<rect x="704" y="549" width="1" height="13" fill="#FFB12E"/>
<rect x="708" y="540" width="1" height="22" fill="#FFB12E"/>
<rect x="712" y="541" width="1" height="21" fill="#FFB12E"/>
<rect x="716" y="545" width="1" height="17" fill="#FFB12E"/>
<rect x="720" y="546" width="1" height="16" fill="#FFB12E"/>
<rect x="724" y="544" width="1" height="18" fill="#FFB12E"/>
<rect x="728" y="546" width="1" height="16" fill="#FFB12E"/>
<rect x="732" y="551" width="1" height="11" fill="#FFB12E"/>
<rect x="736" y="558" width="1" height="4" fill="#FFB12E"/>
<rect x="740" y="548" width="1" height="14" fill="#FFB12E"/>
<rect x="744" y="546" width="1" height="16" fill="#FFB12E"/>
<rect x="748" y="548" width="1" height="14" fill="#FFB12E"/>
<rect x="752" y="558" width="1" height="4" fill="#FFB12E"/>
<rect x="756" y="558" width="1" height="4" fill="#FFB12E"/>
<rect x="760" y="558" width="1" height="4" fill="#FFB12E"/>
<rect x="764" y="558" width="1" height="4" fill="#FFB12E"/>
<rect x="768" y="558" width="1" height="4" fill="#FFB12E"/>
<rect x="772" y="547" width="1" height="15" fill="#FFB12E"/>
<rect x="776" y="550" width="1" height="12" fill="#FFB12E"/>
<rect x="780" y="548" width="1" height="14" fill="#FFB12E"/>
<rect x="784" y="547" width="1" height="15" fill="#FFB12E"/>
<rect x="792" y="530" width="1" height="32" fill="#FFB12E"/>
<rect x="796" y="533" width="1" height="29" fill="#FFB12E"/>
<rect x="800" y="538" width="1" height="24" fill="#FFB12E"/>
<rect x="804" y="535" width="1" height="27" fill="#FFB12E"/>
<rect x="808" y="540" width="1" height="22" fill="#FFB12E"/>
<rect x="812" y="524" width="1" height="38" fill="#FFB12E"/>
<rect x="816" y="519" width="1" height="43" fill="#FFB12E"/>
<rect x="820" y="508" width="1" height="54" fill="#FFB12E"/>
<rect x="824" y="516" width="1" height="46" fill="#FFB12E"/>
<rect x="828" y="520" width="1" height="42" fill="#FFB12E"/>
<rect x="832" y="520" width="1" height="42" fill="#FFB12E"/>
<rect x="836" y="523" width="1" height="39" fill="#FFB12E"/>
<rect x="840" y="525" width="1" height="37" fill="#FFB12E"/>
<rect x="844" y="536" width="1" height="26" fill="#FFB12E"/>
<rect x="848" y="541" width="1" height="21" fill="#FFB12E"/>
<rect x="852" y="541" width="1" height="21" fill="#FFB12E"/>
<rect x="856" y="541" width="1" height="21" fill="#FFB12E"/>
<rect x="860" y="544" width="1" height="18" fill="#FFB12E"/>
<rect x="864" y="545" width="1" height="17" fill="#FFB12E"/>
<rect x="868" y="548" width="1" height="14" fill="#FFB12E"/>
<rect x="872" y="548" width="1" height="14" fill="#FFB12E"/>
<rect x="876" y="553" width="1" height="9" fill="#FFB12E"/>
<rect x="880" y="555" width="1" height="7" fill="#FFB12E"/>
<rect x="884" y="555" width="1" height="7" fill="#FFB12E"/>
<rect x="888" y="553" width="1" height="9" fill="#FFB12E"/>
<rect x="892" y="555" width="1" height="7" fill="#FFB12E"/>
<rect x="896" y="553" width="1" height="9" fill="#FFB12E"/>
<rect x="900" y="553" width="1" height="9" fill="#FFB12E"/>
<rect x="904" y="555" width="1" height="7" fill="#FFB12E"/>
<rect x="908" y="557" width="1" height="5" fill="#FFB12E"/>
<rect x="912" y="555" width="1" height="7" fill="#FFB12E"/>
<rect x="916" y="559" width="1" height="3" fill="#FFB12E"/>
<rect x="920" y="560" width="1" height="2" fill="#FFB12E"/>
<rect x="924" y="560" width="1" height="2" fill="#FFB12E"/>
<rect x="928" y="560" width="1" height="2" fill="#FFB12E"/>
<rect x="932" y="560" width="1" height="2" fill="#FFB12E"/>
<rect x="936" y="559" width="1" height="3" fill="#FFB12E"/>
<rect x="940" y="557" width="1" height="5" fill="#FFB12E"/>
<rect x="944" y="556" width="1" height="6" fill="#FFB12E"/>
<rect x="948" y="558" width="1" height="4" fill="#FFB12E"/>
<rect x="952" y="555" width="1" height="7" fill="#FFB12E"/>
<rect x="956" y="557" width="1" height="5" fill="#FFB12E"/>
<rect x="960" y="554" width="1" height="8" fill="#FFB12E"/>
<rect x="964" y="552" width="1" height="10" fill="#FFB12E"/>
<rect x="968" y="553" width="1" height="9" fill="#FFB12E"/>
<rect x="972" y="553" width="1" height="9" fill="#FFB12E"/>
<rect x="976" y="555" width="1" height="7" fill="#FFB12E"/>
<rect x="980" y="555" width="1" height="7" fill="#FFB12E"/>
<rect x="984" y="557" width="1" height="5" fill="#FFB12E"/>
<rect x="988" y="555" width="1" height="7" fill="#FFB12E"/>
<rect x="992" y="555" width="1" height="7" fill="#FFB12E"/>
<rect x="996" y="557" width="1" height="5" fill="#FFB12E"/>
<rect x="1000" y="558" width="1" height="4" fill="#FFB12E"/>
<rect x="1004" y="559" width="1" height="3" fill="#FFB12E"/>
<rect x="1008" y="556" width="1" height="6" fill="#FFB12E"/>
<rect x="1012" y="558" width="1" height="4" fill="#FFB12E"/>
<rect x="1016" y="560" width="1" height="2" fill="#FFB12E"/>
<rect x="1020" y="559" width="1" height="3" fill="#FFB12E"/>
<rect x="1024" y="556" width="1" height="6" fill="#FFB12E"/>
<rect x="1028" y="559" width="1" height="3" fill="#FFB12E"/>
<rect x="1032" y="558" width="1" height="4" fill="#FFB12E"/>
<rect x="1036" y="555" width="1" height="7" fill="#FFB12E"/>
<rect x="4" y="365" width="1" height="2" fill="#FF312E"/>
<rect x="4" y="372" width="1" height="1" fill="#FF312E"/>
<rect x="3" y="367" width="3" height="5" fill="#FF312E"/>
<rect x="8" y="370" width="1" height="1" fill="#FF312E"/>
<rect x="8" y="377" width="1" height="1" fill="#FF312E"/>
<rect x="7" y="371" width="3" height="6" fill="#FF312E"/>
<rect x="12" y="375" width="1" height="1" fill="#FF312E"/>
<rect x="12" y="378" width="1" height="2" fill="#FF312E"/>
<rect x="11" y="376" width="3" height="2" fill="#FF312E"/>
<rect x="16" y="376" width="1" height="1" fill="#FF312E"/>
<rect x="16" y="379" width="1" height="2" fill="#FF312E"/>
<rect x="15" y="377" width="3" height="2" fill="#FF312E"/>
<rect x="20" y="377" width="1" height="1" fill="#FF312E"/>
<rect x="20" y="384" width="1" height="3" fill="#FF312E"/>
<rect x="19" y="378" width="3" height="6" fill="#FF312E"/>
<rect x="24" y="380" width="1" height="1" fill="#FF312E"/>
<rect x="24" y="386" width="1" height="1" fill="#FF312E"/>
<rect x="23" y="381" width="3" height="5" fill="#FF312E"/>
<rect x="28" y="386" width="1" height="1" fill="#FF312E"/>
<rect x="28" y="398" width="1" height="1" fill="#FF312E"/>
<rect x="27" y="387" width="3" height="11" fill="#FF312E"/>
<rect x="32" y="397" width="1" height="2" fill="#FF312E"/>
<rect x="32" y="402" width="1" height="3" fill="#FF312E"/>
<rect x="31" y="399" width="3" height="3" fill="#FF312E"/>
<rect x="36" y="398" width="1" height="2" fill="#FF312E"/>
<rect x="36" y="402" width="1" height="1" fill="#FF312E"/>
<rect x="35" y="400" width="3" height="2" fill="#FF312E"/>
<rect x="40" y="396" width="1" height="1" fill="#FF312E"/>
<rect x="40" y="402" width="1" height="1" fill="#FF312E"/>
<rect x="39.5" y="397.5" width="2" height="4" fill="none" stroke="#FF312E" stroke-width="1"/>
<rect x="44" y="398" width="1" height="2" fill="#FF312E"/>
<rect x="44" y="401" width="1" height="1" fill="#FF312E"/>
<rect x="43" y="400" width="3" height="1" fill="#FF312E"/>
<rect x="48" y="401" width="1" height="1" fill="#FF312E"/>
<rect x="48" y="407" width="1" height="1" fill="#FF312E"/>
<rect x="47" y="402" width="3" height="5" fill="#FF312E"/>
<rect x="52" y="401" width="1" height="1" fill="#FF312E"/>
<rect x="52" y="407" width="1" height="1" fill="#FF312E"/>
<rect x="51.5" y="402.5" width="2" height="4" fill="none" stroke="#FF312E" stroke-width="1"/>
<rect x="56" y="402" width="1" height="1" fill="#FF312E"/>
<rect x="56" y="405" width="1" height="1" fill="#FF312E"/>
<rect x="55" y="403" width="3" height="2" fill="#FF312E"/>
<rect x="60" y="400" width="1" height="1" fill="#FF312E"/>
<rect x="60" y="408" width="1" height="1" fill="#FF312E"/>
<rect x="59" y="401" width="3" height="7" fill="#FF312E"/>
<rect x="64" y="400" width="1" height="2" fill="#FF312E"/>
<rect x="64" y="407" width="1" height="1" fill="#FF312E"/>
<rect x="63.5" y="402.5" width="2" height="4" fill="none" stroke="#FF312E" stroke-width="1"/>
<rect x="68" y="400" width="1" height="1" fill="#FF312E"/>
<rect x="68" y="408" width="1" height="1" fill="#FF312E"/>
<rect x="67" y="401" width="3" height="7" fill="#FF312E"/>
<rect x="72" y="402" width="1" height="1" fill="#FF312E"/>
<rect x="71.5" y="403.5" width="2" height="4" fill="none" stroke="#FF312E" stroke-width="1"/>
<rect x="76" y="389" width="1" height="3" fill="#FF312E"/>
<rect x="76" y="403" width="1" height="5" fill="#FF312E"/>
<rect x="75.5" y="392.5" width="2" height="10" fill="none" stroke="#FF312E" stroke-width="1"/>
<rect x="80" y="389" width="1" height="1" fill="#FF312E"/>
<rect x="79.5" y="376.5" width="2" height="12" fill="none" stroke="#FF312E" stroke-width="1"/>
<rect x="84" y="362" width="1" height="10" fill="#FF312E"/>
<rect x="84" y="378" width="1" height="6" fill="#FF312E"/>
<rect x="83.5" y="372.5" width="2" height="5" fill="none" stroke="#FF312E" stroke-width="1"/>
<rect x="88" y="344" width="1" height="8" fill="#FF312E"/>
<rect x="88" y="372" width="1" height="6" fill="#FF312E"/>
<rect x="87.5" y="352.5" width="2" height="19" fill="none" stroke="#FF312E" stroke-width="1"/>
<rect x="92" y="361" width="1" height="1" fill="#FF312E"/>
<rect x="92" y="364" width="1" height="5" fill="#FF312E"/>
<rect x="91" y="362" width="3" height="2" fill="#FF312E"/>
<rect x="96" y="350" width="1" height="8" fill="#FF312E"/>
<rect x="96" y="363" width="1" height="1" fill="#FF312E"/>
<rect x="95.5" y="358.5" width="2" height="4" fill="none" stroke="#FF312E" stroke-width="1"/>
<rect x="100" y="332" width="1" height="2" fill="#FF312E"/>
<rect x="100" y="358" width="1" height="18" fill="#FF312E"/>
<rect x="99.5" y="334.5" width="2" height="23" fill="none" stroke="#FF312E" stroke-width="1"/>
<rect x="104" y="326" width="1" height="4" fill="#FF312E"/>
<rect x="104" y="335" width="1" height="5" fill="#FF312E"/>
<rect x="103.5" y="330.5" width="2" height="4" fill="none" stroke="#FF312E" stroke-width="1"/>
<rect x="108" y="326" width="1" height="1" fill="#FF312E"/>
<rect x="108" y="331" width="1" height="6" fill="#FF312E"/>
<rect x="107.5" y="327.5" width="2" height="3" fill="none" stroke="#FF312E" stroke-width="1"/>
<rect x="112" y="318" width="1" height="6" fill="#FF312E"/>
<rect x="112" y="328" width="1" height="1" fill="#FF312E"/>
<rect x="111.5" y="324.5" width="2" height="3" fill="none" stroke="#FF312E" stroke-width="1"/>
<rect x="116" y="314" width="1" height="1" fill="#FF312E"/>
<rect x="116" y="325" width="1" height="4" fill="#FF312E"/>
<rect x="115.5" y="315.5" width="2" height="9" fill="none" stroke="#FF312E" stroke-width="1"/>
<rect x="120" y="313" width="1" height="1" fill="#FF312E"/>
<rect x="120" y="317" width="1" height="7" fill="#FF312E"/>
<rect x="119" y="314" width="3" height="3" fill="#FF312E"/>
<rect x="124" y="305" width="1" height="1" fill="#FF312E"/>
<rect x="124" y="318" width="1" height="2" fill="#FF312E"/>
<rect x="123.5" y="306.5" width="2" height="11" fill="none" stroke="#FF312E" stroke-width="1"/>
<rect x="128" y="293" width="1" height="1" fill="#FF312E"/>
<rect x="128" y="308" width="1" height="1" fill="#FF312E"/>
<rect x="127.5" y="294.5" width="2" height="13" fill="none" stroke="#FF312E" stroke-width="1"/>
<rect x="132" y="291" width="1" height="1" fill="#FF312E"/>
<rect x="132" y="295" width="1" height="4" fill="#FF312E"/>
<rect x="131.5" y="292.5" width="2" height="2" fill="none" stroke="#FF312E" stroke-width="1"/>
<rect x="136" y="293" width="1" height="4" fill="#FF312E"/>
<rect x="135.5" y="286.5" width="2" height="6" fill="none" stroke="#FF312E" stroke-width="1"/>
<rect x="140" y="266" width="1" height="10" fill="#FF312E"/>
<rect x="140" y="287" width="1" height="1" fill="#FF312E"/>
<rect x="139.5" y="276.5" width="2" height="10" fill="none" stroke="#FF312E" stroke-width="1"/>
<rect x="144" y="268" width="1" height="8" fill="#FF312E"/>
<rect x="144" y="278" width="1" height="2" fill="#FF312E"/>
<rect x="143" y="276" width="3" height="2" fill="#FF312E"/>
<rect x="148" y="277" width="1" height="1" fill="#FF312E"/>
<rect x="148" y="280" width="1" height="1" fill="#FF312E"/>
<rect x="147" y="278" width="3" height="2" fill="#FF312E"/>
<rect x="151" y="280" width="3" height="3" fill="#FF312E"/>
<rect x="156" y="285" width="1" height="1" fill="#FF312E"/>
<rect x="156" y="289" width="1" height="1" fill="#FF312E"/>
<rect x="155" y="286" width="3" height="3" fill="#FF312E"/>
<rect x="160" y="287" width="1" height="1" fill="#FF312E"/>
<rect x="160" y="294" width="1" height="5" fill="#FF312E"/>
<rect x="159" y="288" width="3" height="6" fill="#FF312E"/>
<rect x="164" y="285" width="1" height="1" fill="#FF312E"/>
<rect x="164" y="296" width="1" height="1" fill="#FF312E"/>
<rect x="163.5" y="286.5" width="2" height="9" fill="none" stroke="#FF312E" stroke-width="1"/>
<rect x="168" y="284" width="1" height="2" fill="#FF312E"/>
<rect x="168" y="288" width="1" height="2" fill="#FF312E"/>
<rect x="167" y="286" width="3" height="2" fill="#FF312E"/>
<rect x="172" y="283" width="1" height="1" fill="#FF312E"/>
<rect x="172" y="287" width="1" height="1" fill="#FF312E"/>
<rect x="171.5" y="284.5" width="2" height="2" fill="none" stroke="#FF312E" stroke-width="1"/>
<rect x="176" y="281" width="1" height="1" fill="#FF312E"/>
<rect x="176" y="285" width="1" height="1" fill="#FF312E"/>
<rect x="175.5" y="282.5" width="2" height="2" fill="none" stroke="#FF312E" stroke-width="1"/>
<rect x="180" y="276" width="1" height="2" fill="#FF312E"/>
<rect x="180" y="282" width="1" height="1" fill="#FF312E"/>
<rect x="179.5" y="278.5" width="2" height="3" fill="none" stroke="#FF312E" stroke-width="1"/>
<rect x="184" y="277" width="1" height="1" fill="#FF312E"/>
<rect x="184" y="281" width="1" height="1" fill="#FF312E"/>
<rect x="183.5" y="278.5" width="2" height="2" fill="none" stroke="#FF312E" stroke-width="1"/>
<rect x="188" y="277" width="1" height="1" fill="#FF312E"/>
<rect x="188" y="280" width="1" height="1" fill="#FF312E"/>
<rect x="187" y="278" width="3" height="2" fill="#FF312E"/>
<rect x="192" y="276" width="1" height="2" fill="#FF312E"/>
<rect x="192" y="279" width="1" height="1" fill="#FF312E"/>
<rect x="191" y="278" width="3" height="1" fill="#FF312E"/>
<rect x="196" y="254" width="1" height="11" fill="#FF312E"/>
<rect x="196" y="273" width="1" height="7" fill="#FF312E"/>
<rect x="195.5" y="265.5" width="2" height="7" fill="none" stroke="#FF312E" stroke-width="1"/>
<rect x="200" y="46" width="1" height="22" fill="#FF312E"/>
<rect x="200" y="266" width="1" height="1" fill="#FF312E"/>
<rect x="199.5" y="68.5" width="2" height="197" fill="none" stroke="#FF312E" stroke-width="1"/>
<rect x="204" y="14" width="1" height="54" fill="#FF312E"/>
<rect x="204" y="106" width="1" height="34" fill="#FF312E"/>
<rect x="203" y="68" width="3" height="38" fill="#FF312E"/>
<rect x="208" y="48" width="1" height="59" fill="#FF312E"/>
<rect x="208" y="112" width="1" height="11" fill="#FF312E"/>
<rect x="207" y="107" width="3" height="5" fill="#FF312E"/>
<rect x="212" y="101" width="1" height="7" fill="#FF312E"/>
<rect x="212" y="141" width="1" height="25" fill="#FF312E"/>
<rect x="211" y="108" width="3" height="33" fill="#FF312E"/>
<rect x="216" y="138" width="1" height="3" fill="#FF312E"/>
<rect x="216" y="166" width="1" height="6" fill="#FF312E"/>
<rect x="215" y="141" width="3" height="25" fill="#FF312E"/>
<rect x="220" y="161" width="1" height="2" fill="#FF312E"/>
<rect x="220" y="191" width="1" height="1" fill="#FF312E"/>
<rect x="219" y="163" width="3" height="28" fill="#FF312E"/>
<rect x="224" y="173" width="1" height="15" fill="#FF312E"/>
<rect x="224" y="190" width="1" height="20" fill="#FF312E"/>
<rect x="223" y="188" width="3" height="2" fill="#FF312E"/>
<rect x="228" y="182" width="1" height="7" fill="#FF312E"/>
<rect x="228" y="213" width="1" height="3" fill="#FF312E"/>
<rect x="227" y="189" width="3" height="24" fill="#FF312E"/>
<rect x="232" y="199" width="1" height="6" fill="#FF312E"/>
<rect x="232" y="213" width="1" height="1" fill="#FF312E"/>
<rect x="231.5" y="205.5" width="2" height="7" fill="none" stroke="#FF312E" stroke-width="1"/>
<rect x="236" y="204" width="1" height="1" fill="#FF312E"/>
<rect x="236" y="225" width="1" height="12" fill="#FF312E"/>
<rect x="235" y="205" width="3" height="20" fill="#FF312E"/>
<rect x="240" y="214" width="1" height="6" fill="#FF312E"/>
<rect x="240" y="223" width="1" height="2" fill="#FF312E"/>
<rect x="239.5" y="220.5" width="2" height="2" fill="none" stroke="#FF312E" stroke-width="1"/>
<rect x="244" y="218" width="1" height="2" fill="#FF312E"/>
<rect x="244" y="233" width="1" height="1" fill="#FF312E"/>
<rect x="243" y="220" width="3" height="13" fill="#FF312E"/>
<rect x="248" y="220" width="1" height="1" fill="#FF312E"/>
<rect x="248" y="233" width="1" height="1" fill="#FF312E"/>
<rect x="247.5" y="221.5" width="2" height="11" fill="none" stroke="#FF312E" stroke-width="1"/>
<rect x="252" y="220" width="1" height="1" fill="#FF312E"/>
<rect x="252" y="225" width="1" height="6" fill="#FF312E"/>
<rect x="251" y="221" width="3" height="4" fill="#FF312E"/>
<rect x="256" y="216" width="1" height="2" fill="#FF312E"/>
<rect x="256" y="227" width="1" height="1" fill="#FF312E"/>
<rect x="255.5" y="218.5" width="2" height="8" fill="none" stroke="#FF312E" stroke-width="1"/>
<rect x="260" y="214" width="1" height="4" fill="#FF312E"/>
<rect x="260" y="226" width="1" height="1" fill="#FF312E"/>
<rect x="259" y="218" width="3" height="8" fill="#FF312E"/>
<rect x="264" y="224" width="1" height="1" fill="#FF312E"/>
<rect x="264" y="227" width="1" height="6" fill="#FF312E"/>
<rect x="263" y="225" width="3" height="2" fill="#FF312E"/>
<rect x="268" y="220" width="1" height="4" fill="#FF312E"/>
<rect x="268" y="228" width="1" height="2" fill="#FF312E"/>
<rect x="267.5" y="224.5" width="2" height="3" fill="none" stroke="#FF312E" stroke-width="1"/>
<rect x="272" y="222" width="1" height="2" fill="#FF312E"/>
<rect x="272" y="227" width="1" height="4" fill="#FF312E"/>
<rect x="271" y="224" width="3" height="3" fill="#FF312E"/>
<rect x="276" y="226" width="1" height="1" fill="#FF312E"/>
<rect x="276" y="235" width="1" height="7" fill="#FF312E"/>
<rect x="275" y="227" width="3" height="8" fill="#FF312E"/>
<rect x="280" y="228" width="1" height="1" fill="#FF312E"/>
<rect x="280" y="235" width="1" height="1" fill="#FF312E"/>
<rect x="279.5" y="229.5" width="2" height="5" fill="none" stroke="#FF312E" stroke-width="1"/>
<rect x="284" y="229" width="1" height="1" fill="#FF312E"/>
<rect x="284" y="233" width="1" height="1" fill="#FF312E"/>
<rect x="283.5" y="230.5" width="2" height="2" fill="none" stroke="#FF312E" stroke-width="1"/>
<rect x="288" y="228" width="1" height="1" fill="#FF312E"/>
<rect x="288" y="231" width="1" height="1" fill="#FF312E"/>
<rect x="287" y="229" width="3" height="2" fill="#FF312E"/>
<rect x="292" y="228" width="1" height="2" fill="#FF312E"/>
<rect x="292" y="231" width="1" height="4" fill="#FF312E"/>
<rect x="291" y="230" width="3" height="1" fill="#FF312E"/>
<rect x="296" y="217" width="1" height="1" fill="#FF312E"/>
<rect x="296" y="229" width="1" height="1" fill="#FF312E"/>
<rect x="295.5" y="218.5" width="2" height="10" fill="none" stroke="#FF312E" stroke-width="1"/>
<rect x="300" y="211" width="1" height="2" fill="#FF312E"/>
<rect x="300" y="217" width="1" height="4" fill="#FF312E"/>
<rect x="299" y="213" width="3" height="4" fill="#FF312E"/>
<rect x="304" y="215" width="1" height="1" fill="#FF312E"/>
<rect x="304" y="225" width="1" height="3" fill="#FF312E"/>
<rect x="303" y="216" width="3" height="9" fill="#FF312E"/>
<rect x="308" y="219" width="1" height="6" fill="#FF312E"/>
<rect x="308" y="227" width="1" height="1" fill="#FF312E"/>
<rect x="307" y="225" width="3" height="2" fill="#FF312E"/>
<rect x="312" y="221" width="1" height="4" fill="#FF312E"/>
<rect x="312" y="231" width="1" height="5" fill="#FF312E"/>
<rect x="311" y="225" width="3" height="6" fill="#FF312E"/>
<rect x="316" y="230" width="1" height="1" fill="#FF312E"/>
<rect x="316" y="238" width="1" height="1" fill="#FF312E"/>
<rect x="315" y="231" width="3" height="7" fill="#FF312E"/>
<rect x="320" y="238" width="1" height="1" fill="#FF312E"/>
<rect x="320" y="261" width="1" height="5" fill="#FF312E"/>
<rect x="319" y="239" width="3" height="22" fill="#FF312E"/>
<rect x="324" y="252" width="1" height="7" fill="#FF312E"/>
<rect x="324" y="262" width="1" height="9" fill="#FF312E"/>
<rect x="323" y="259" width="3" height="3" fill="#FF312E"/>
<rect x="328" y="258" width="1" height="1" fill="#FF312E"/>
<rect x="328" y="270" width="1" height="1" fill="#FF312E"/>
<rect x="327" y="259" width="3" height="11" fill="#FF312E"/>
<rect x="332" y="262" width="1" height="6" fill="#FF312E"/>
<rect x="332" y="294" width="1" height="1" fill="#FF312E"/>
<rect x="331" y="268" width="3" height="26" fill="#FF312E"/>
<rect x="336" y="274" width="1" height="18" fill="#FF312E"/>
<rect x="336" y="306" width="1" height="5" fill="#FF312E"/>
<rect x="335" y="292" width="3" height="14" fill="#FF312E"/>
<rect x="340" y="303" width="1" height="1" fill="#FF312E"/>
<rect x="340" y="309" width="1" height="19" fill="#FF312E"/>
<rect x="339.5" y="304.5" width="2" height="4" fill="none" stroke="#FF312E" stroke-width="1"/>
<rect x="344" y="300" width="1" height="1" fill="#FF312E"/>
<rect x="344" y="309" width="1" height="11" fill="#FF312E"/>
<rect x="343.5" y="301.5" width="2" height="7" fill="none" stroke="#FF312E" stroke-width="1"/>
<rect x="348" y="288" width="1" height="1" fill="#FF312E"/>
<rect x="348" y="301" width="1" height="1" fill="#FF312E"/>
<rect x="347.5" y="289.5" width="2" height="11" fill="none" stroke="#FF312E" stroke-width="1"/>
<rect x="352" y="284" width="1" height="1" fill="#FF312E"/>
<rect x="352" y="290" width="1" height="2" fill="#FF312E"/>
<rect x="351.5" y="285.5" width="2" height="4" fill="none" stroke="#FF312E" stroke-width="1"/>
<rect x="356" y="275" width="1" height="3" fill="#FF312E"/>
<rect x="356" y="285" width="1" height="3" fill="#FF312E"/>
<rect x="355.5" y="278.5" width="2" height="6" fill="none" stroke="#FF312E" stroke-width="1"/>
<rect x="360" y="280" width="1" height="5" fill="#FF312E"/>
<rect x="360" y="288" width="1" height="1" fill="#FF312E"/>
<rect x="359" y="285" width="3" height="3" fill="#FF312E"/>
<rect x="364" y="263" width="1" height="8" fill="#FF312E"/>
<rect x="364" y="277" width="1" height="5" fill="#FF312E"/>
<rect x="363" y="271" width="3" height="6" fill="#FF312E"/>
<rect x="368" y="270" width="1" height="5" fill="#FF312E"/>
<rect x="368" y="280" width="1" height="1" fill="#FF312E"/>
<rect x="367" y="275" width="3" height="5" fill="#FF312E"/>
<rect x="372" y="279" width="1" height="1" fill="#FF312E"/>
<rect x="372" y="295" width="1" height="10" fill="#FF312E"/>
<rect x="371" y="280" width="3" height="15" fill="#FF312E"/>
<rect x="376" y="291" width="1" height="2" fill="#FF312E"/>
<rect x="376" y="296" width="1" height="3" fill="#FF312E"/>
<rect x="375" y="293" width="3" height="3" fill="#FF312E"/>
<rect x="380" y="286" width="1" height="3" fill="#FF312E"/>
<rect x="380" y="294" width="1" height="2" fill="#FF312E"/>
<rect x="379.5" y="289.5" width="2" height="4" fill="none" stroke="#FF312E" stroke-width="1"/>
<rect x="384" y="289" width="1" height="1" fill="#FF312E"/>
<rect x="384" y="294" width="1" height="2" fill="#FF312E"/>
<rect x="383.5" y="290.5" width="2" height="3" fill="none" stroke="#FF312E" stroke-width="1"/>
<rect x="388" y="289" width="1" height="1" fill="#FF312E"/>
<rect x="388" y="297" width="1" height="1" fill="#FF312E"/>
<rect x="387" y="290" width="3" height="7" fill="#FF312E"/>
<rect x="392" y="284" width="1" height="1" fill="#FF312E"/>
<rect x="392" y="297" width="1" height="1" fill="#FF312E"/>
<rect x="391.5" y="285.5" width="2" height="11" fill="none" stroke="#FF312E" stroke-width="1"/>
<rect x="396" y="279" width="1" height="2" fill="#FF312E"/>
<rect x="396" y="284" width="1" height="5" fill="#FF312E"/>
<rect x="395" y="281" width="3" height="3" fill="#FF312E"/>
<rect x="400" y="278" width="1" height="2" fill="#FF312E"/>
<rect x="400" y="282" width="1" height="1" fill="#FF312E"/>
<rect x="399" y="280" width="3" height="2" fill="#FF312E"/>
<rect x="404" y="280" width="1" height="1" fill="#FF312E"/>
<rect x="404" y="287" width="1" height="5" fill="#FF312E"/>
<rect x="403" y="281" width="3" height="6" fill="#FF312E"/>
<rect x="408" y="279" width="1" height="6" fill="#FF312E"/>
<rect x="408" y="288" width="1" height="1" fill="#FF312E"/>
<rect x="407" y="285" width="3" height="3" fill="#FF312E"/>
<rect x="412" y="285" width="1" height="1" fill="#FF312E"/>
<rect x="412" y="289" width="1" height="11" fill="#FF312E"/>
<rect x="411" y="286" width="3" height="3" fill="#FF312E"/>
<rect x="416" y="284" width="1" height="1" fill="#FF312E"/>
<rect x="416" y="290" width="1" height="1" fill="#FF312E"/>
<rect x="415.5" y="285.5" width="2" height="4" fill="none" stroke="#FF312E" stroke-width="1"/>
<rect x="420" y="283" width="1" height="1" fill="#FF312E"/>
<rect x="420" y="294" width="1" height="1" fill="#FF312E"/>
<rect x="419.5" y="284.5" width="2" height="9" fill="none" stroke="#FF312E" stroke-width="1"/>
<rect x="424" y="284" width="1" height="9" fill="#FF312E"/>
<rect x="424" y="302" width="1" height="6" fill="#FF312E"/>
<rect x="423" y="293" width="3" height="9" fill="#FF312E"/>
<rect x="428" y="301" width="1" height="1" fill="#FF312E"/>
<rect x="428" y="313" width="1" height="7" fill="#FF312E"/>
<rect x="427" y="302" width="3" height="11" fill="#FF312E"/>
<rect x="432" y="312" width="1" height="1" fill="#FF312E"/>
<rect x="432" y="328" width="1" height="6" fill="#FF312E"/>
<rect x="431" y="313" width="3" height="15" fill="#FF312E"/>
<rect x="436" y="326" width="1" height="2" fill="#FF312E"/>
<rect x="436" y="358" width="1" height="4" fill="#FF312E"/>
<rect x="435" y="328" width="3" height="30" fill="#FF312E"/>
<rect x="440" y="354" width="1" height="4" fill="#FF312E"/>
<rect x="440" y="373" width="1" height="11" fill="#FF312E"/>
<rect x="439" y="358" width="3" height="15" fill="#FF312E"/>
<rect x="444" y="371" width="1" height="2" fill="#FF312E"/>
<rect x="444" y="376" width="1" height="4" fill="#FF312E"/>
<rect x="443.5" y="373.5" width="2" height="2" fill="none" stroke="#FF312E" stroke-width="1"/>
<rect x="448" y="353" width="1" height="1" fill="#FF312E"/>
<rect x="448" y="377" width="1" height="2" fill="#FF312E"/>
<rect x="447.5" y="354.5" width="2" height="22" fill="none" stroke="#FF312E" stroke-width="1"/>
<rect x="452" y="344" width="1" height="10" fill="#FF312E"/>
<rect x="452" y="357" width="1" height="2" fill="#FF312E"/>
<rect x="451.5" y="354.5" width="2" height="2" fill="none" stroke="#FF312E" stroke-width="1"/>
<rect x="456" y="348" width="1" height="10" fill="#FF312E"/>
<rect x="456" y="417" width="1" height="26" fill="#FF312E"/>
<rect x="455" y="358" width="3" height="59" fill="#FF312E"/>
<rect x="460" y="414" width="1" height="2" fill="#FF312E"/>
<rect x="460" y="438" width="1" height="25" fill="#FF312E"/>
<rect x="459" y="416" width="3" height="22" fill="#FF312E"/>
<rect x="464" y="431" width="1" height="6" fill="#FF312E"/>
<rect x="464" y="456" width="1" height="2" fill="#FF312E"/>
<rect x="463" y="437" width="3" height="19" fill="#FF312E"/>
<rect x="468" y="438" width="1" height="2" fill="#FF312E"/>
<rect x="468" y="455" width="1" height="6" fill="#FF312E"/>
<rect x="467.5" y="440.5" width="2" height="14" fill="none" stroke="#FF312E" stroke-width="1"/>
<rect x="472" y="435" width="1" height="5" fill="#FF312E"/>
<rect x="472" y="448" width="1" height="3" fill="#FF312E"/>
<rect x="471" y="440" width="3" height="8" fill="#FF312E"/>
<rect x="476" y="443" width="1" height="4" fill="#FF312E"/>
<rect x="476" y="456" width="1" height="3" fill="#FF312E"/>
<rect x="475" y="447" width="3" height="9" fill="#FF312E"/>
<rect x="480" y="441" width="1" height="1" fill="#FF312E"/>
<rect x="480" y="458" width="1" height="2" fill="#FF312E"/>
<rect x="479.5" y="442.5" width="2" height="15" fill="none" stroke="#FF312E" stroke-width="1"/>
<rect x="484" y="426" width="1" height="1" fill="#FF312E"/>
<rect x="484" y="443" width="1" height="1" fill="#FF312E"/>
<rect x="483.5" y="427.5" width="2" height="15" fill="none" stroke="#FF312E" stroke-width="1"/>
<rect x="488" y="425" width="1" height="3" fill="#FF312E"/>
<rect x="488" y="445" width="1" height="1" fill="#FF312E"/>
<rect x="487" y="428" width="3" height="17" fill="#FF312E"/>
<rect x="492" y="445" width="1" height="1" fill="#FF312E"/>
<rect x="492" y="448" width="1" height="2" fill="#FF312E"/>
<rect x="491" y="446" width="3" height="2" fill="#FF312E"/>
<rect x="496" y="442" width="1" height="1" fill="#FF312E"/>
<rect x="496" y="445" width="1" height="3" fill="#FF312E"/>
<rect x="495" y="443" width="3" height="2" fill="#FF312E"/>
<rect x="500" y="441" width="1" height="1" fill="#FF312E"/>
<rect x="500" y="448" width="1" height="6" fill="#FF312E"/>
<rect x="499" y="442" width="3" height="6" fill="#FF312E"/>
<rect x="504" y="444" width="1" height="2" fill="#FF312E"/>
<rect x="504" y="450" width="1" height="6" fill="#FF312E"/>
<rect x="503" y="446" width="3" height="4" fill="#FF312E"/>
<rect x="508" y="447" width="1" height="1" fill="#FF312E"/>
<rect x="508" y="452" width="1" height="4" fill="#FF312E"/>
<rect x="507" y="448" width="3" height="4" fill="#FF312E"/>
<rect x="512" y="447" width="1" height="1" fill="#FF312E"/>
<rect x="512" y="452" width="1" height="1" fill="#FF312E"/>
<rect x="511.5" y="448.5" width="2" height="3" fill="none" stroke="#FF312E" stroke-width="1"/>
<rect x="516" y="445" width="1" height="1" fill="#FF312E"/>
<rect x="516" y="448" width="1" height="1" fill="#FF312E"/>
<rect x="515" y="446" width="3" height="2" fill="#FF312E"/>
<rect x="520" y="438" width="1" height="3" fill="#FF312E"/>
<rect x="520" y="446" width="1" height="4" fill="#FF312E"/>
<rect x="519.5" y="441.5" width="2" height="4" fill="none" stroke="#FF312E" stroke-width="1"/>
<rect x="524" y="427" width="1" height="1" fill="#FF312E"/>
<rect x="524" y="441" width="1" height="1" fill="#FF312E"/>
<rect x="523.5" y="428.5" width="2" height="12" fill="none" stroke="#FF312E" stroke-width="1"/>
<rect x="528" y="424" width="1" height="1" fill="#FF312E"/>
<rect x="528" y="428" width="1" height="4" fill="#FF312E"/>
<rect x="527.5" y="425.5" width="2" height="2" fill="none" stroke="#FF312E" stroke-width="1"/>
<rect x="532" y="421" width="1" height="2" fill="#FF312E"/>
<rect x="532" y="426" width="1" height="1" fill="#FF312E"/>
<rect x="531" y="423" width="3" height="3" fill="#FF312E"/>
<rect x="536" y="421" width="1" height="2" fill="#FF312E"/>
<rect x="536" y="433" width="1" height="1" fill="#FF312E"/>
<rect x="535" y="423" width="3" height="10" fill="#FF312E"/>
<rect x="540" y="431" width="1" height="1" fill="#FF312E"/>
<rect x="540" y="435" width="1" height="2" fill="#FF312E"/>
<rect x="539" y="432" width="3" height="3" fill="#FF312E"/>
<rect x="544" y="430" width="1" height="2" fill="#FF312E"/>
<rect x="544" y="440" width="1" height="2" fill="#FF312E"/>
<rect x="543" y="432" width="3" height="8" fill="#FF312E"/>
<rect x="548" y="429" width="1" height="2" fill="#FF312E"/>
<rect x="548" y="439" width="1" height="1" fill="#FF312E"/>
<rect x="547.5" y="431.5" width="2" height="7" fill="none" stroke="#FF312E" stroke-width="1"/>
<rect x="552" y="427" width="1" height="1" fill="#FF312E"/>
<rect x="552" y="432" width="1" height="1" fill="#FF312E"/>
<rect x="551.5" y="428.5" width="2" height="3" fill="none" stroke="#FF312E" stroke-width="1"/>
<rect x="556" y="427" width="1" height="2" fill="#FF312E"/>
<rect x="556" y="430" width="1" height="2" fill="#FF312E"/>
<rect x="555" y="429" width="3" height="1" fill="#FF312E"/>
<rect x="560" y="428" width="1" height="2" fill="#FF312E"/>
<rect x="560" y="431" width="1" height="2" fill="#FF312E"/>
<rect x="559" y="430" width="3" height="1" fill="#FF312E"/>
<rect x="564" y="429" width="1" height="2" fill="#FF312E"/>
<rect x="564" y="432" width="1" height="3" fill="#FF312E"/>
<rect x="563" y="431" width="3" height="1" fill="#FF312E"/>
<rect x="568" y="424" width="1" height="2" fill="#FF312E"/>
<rect x="568" y="431" width="1" height="2" fill="#FF312E"/>
<rect x="567.5" y="426.5" width="2" height="4" fill="none" stroke="#FF312E" stroke-width="1"/>
<rect x="572" y="425" width="1" height="1" fill="#FF312E"/>
<rect x="572" y="427" width="1" height="6" fill="#FF312E"/>
<rect x="571" y="426" width="3" height="1" fill="#FF312E"/>
<rect x="576" y="413" width="1" height="1" fill="#FF312E"/>
<rect x="576" y="429" width="1" height="1" fill="#FF312E"/>
<rect x="575.5" y="414.5" width="2" height="14" fill="none" stroke="#FF312E" stroke-width="1"/>
<rect x="580" y="411" width="1" height="3" fill="#FF312E"/>
<rect x="580" y="415" width="1" height="4" fill="#FF312E"/>
<rect x="579" y="414" width="3" height="1" fill="#FF312E"/>
<rect x="584" y="398" width="1" height="4" fill="#FF312E"/>
<rect x="584" y="414" width="1" height="1" fill="#FF312E"/>
<rect x="583.5" y="402.5" width="2" height="11" fill="none" stroke="#FF312E" stroke-width="1"/>
<rect x="588" y="387" width="1" height="9" fill="#FF312E"/>
<rect x="588" y="400" width="1" height="2" fill="#FF312E"/>
<rect x="587.5" y="396.5" width="2" height="3" fill="none" stroke="#FF312E" stroke-width="1"/>
<rect x="592" y="394" width="1" height="1" fill="#FF312E"/>
<rect x="592" y="399" width="1" height="6" fill="#FF312E"/>
<rect x="591" y="395" width="3" height="4" fill="#FF312E"/>
<rect x="596" y="400" width="1" height="3" fill="#FF312E"/>
<rect x="596" y="404" width="1" height="4" fill="#FF312E"/>
<rect x="595" y="403" width="3" height="1" fill="#FF312E"/>
<rect x="600" y="400" width="1" height="1" fill="#FF312E"/>
<rect x="600" y="404" width="1" height="1" fill="#FF312E"/>
<rect x="599" y="401" width="3" height="3" fill="#FF312E"/>
<rect x="604" y="401" width="1" height="2" fill="#FF312E"/>
<rect x="604" y="405" width="1" height="9" fill="#FF312E"/>
<rect x="603" y="403" width="3" height="2" fill="#FF312E"/>
<rect x="608" y="405" width="1" height="2" fill="#FF312E"/>
<rect x="608" y="408" width="1" height="1" fill="#FF312E"/>
<rect x="607" y="407" width="3" height="1" fill="#FF312E"/>
<rect x="612" y="409" width="1" height="1" fill="#FF312E"/>
<rect x="612" y="415" width="1" height="1" fill="#FF312E"/>
<rect x="611" y="410" width="3" height="5" fill="#FF312E"/>
<rect x="616" y="411" width="1" height="1" fill="#FF312E"/>
<rect x="616" y="415" width="1" height="1" fill="#FF312E"/>
<rect x="615" y="412" width="3" height="3" fill="#FF312E"/>
<rect x="620" y="409" width="1" height="1" fill="#FF312E"/>
<rect x="620" y="414" width="1" height="1" fill="#FF312E"/>
<rect x="619.5" y="410.5" width="2" height="3" fill="none" stroke="#FF312E" stroke-width="1"/>
<rect x="624" y="404" width="1" height="3" fill="#FF312E"/>
<rect x="624" y="411" width="1" height="1" fill="#FF312E"/>
<rect x="623.5" y="407.5" width="2" height="3" fill="none" stroke="#FF312E" stroke-width="1"/>
<rect x="628" y="405" width="1" height="1" fill="#FF312E"/>
<rect x="628" y="409" width="1" height="1" fill="#FF312E"/>
<rect x="627.5" y="406.5" width="2" height="2" fill="none" stroke="#FF312E" stroke-width="1"/>
<rect x="632" y="401" width="1" height="1" fill="#FF312E"/>
<rect x="632" y="406" width="1" height="1" fill="#FF312E"/>
<rect x="631.5" y="402.5" width="2" height="3" fill="none" stroke="#FF312E" stroke-width="1"/>
<rect x="636" y="401" width="1" height="2" fill="#FF312E"/>
<rect x="636" y="404" width="1" height="4" fill="#FF312E"/>
<rect x="635" y="403" width="3" height="1" fill="#FF312E"/>
<rect x="640" y="401" width="1" height="1" fill="#FF312E"/>
<rect x="640" y="404" width="1" height="1" fill="#FF312E"/>
<rect x="639" y="402" width="3" height="2" fill="#FF312E"/>
<rect x="644" y="400" width="1" height="1" fill="#FF312E"/>
<rect x="644" y="403" width="1" height="1" fill="#FF312E"/>
<rect x="643" y="401" width="3" height="2" fill="#FF312E"/>
<rect x="648" y="401" width="1" height="1" fill="#FF312E"/>
<rect x="648" y="405" width="1" height="1" fill="#FF312E"/>
<rect x="647" y="402" width="3" height="3" fill="#FF312E"/>
<rect x="652" y="402" width="1" height="1" fill="#FF312E"/>
<rect x="652" y="407" width="1" height="3" fill="#FF312E"/>
<rect x="651" y="403" width="3" height="4" fill="#FF312E"/>
<rect x="656" y="409" width="1" height="1" fill="#FF312E"/>
<rect x="656" y="420" width="1" height="6" fill="#FF312E"/>
<rect x="655" y="410" width="3" height="10" fill="#FF312E"/>
<rect x="660" y="416" width="1" height="2" fill="#FF312E"/>
<rect x="660" y="421" width="1" height="1" fill="#FF312E"/>
<rect x="659" y="418" width="3" height="3" fill="#FF312E"/>
<rect x="664" y="415" width="1" height="1" fill="#FF312E"/>
<rect x="664" y="421" width="1" height="1" fill="#FF312E"/>
<rect x="663.5" y="416.5" width="2" height="4" fill="none" stroke="#FF312E" stroke-width="1"/>
<rect x="668" y="414" width="1" height="2" fill="#FF312E"/>
<rect x="668" y="417" width="1" height="3" fill="#FF312E"/>
<rect x="667" y="416" width="3" height="1" fill="#FF312E"/>
<rect x="672" y="415" width="1" height="2" fill="#FF312E"/>
<rect x="672" y="419" width="1" height="6" fill="#FF312E"/>
<rect x="671" y="417" width="3" height="2" fill="#FF312E"/>
<rect x="676" y="415" width="1" height="1" fill="#FF312E"/>
<rect x="676" y="421" width="1" height="1" fill="#FF312E"/>
<rect x="675.5" y="416.5" width="2" height="4" fill="none" stroke="#FF312E" stroke-width="1"/>
<rect x="680" y="414" width="1" height="1" fill="#FF312E"/>
<rect x="680" y="416" width="1" height="1" fill="#FF312E"/>
<rect x="679" y="415" width="3" height="1" fill="#FF312E"/>
<rect x="684" y="416" width="1" height="1" fill="#FF312E"/>
<rect x="684" y="419" width="1" height="3" fill="#FF312E"/>
<rect x="683" y="417" width="3" height="2" fill="#FF312E"/>
<rect x="688" y="413" width="1" height="1" fill="#FF312E"/>
<rect x="688" y="418" width="1" height="1" fill="#FF312E"/>
<rect x="687.5" y="414.5" width="2" height="3" fill="none" stroke="#FF312E" stroke-width="1"/>
<rect x="692" y="410" width="1" height="1" fill="#FF312E"/>
<rect x="692" y="417" width="1" height="2" fill="#FF312E"/>
<rect x="691.5" y="411.5" width="2" height="5" fill="none" stroke="#FF312E" stroke-width="1"/>
<rect x="696" y="410" width="1" height="1" fill="#FF312E"/>
<rect x="696" y="417" width="1" height="1" fill="#FF312E"/>
<rect x="695" y="411" width="3" height="6" fill="#FF312E"/>
<rect x="700" y="411" width="1" height="1" fill="#FF312E"/>
<rect x="700" y="416" width="1" height="8" fill="#FF312E"/>
<rect x="699.5" y="412.5" width="2" height="3" fill="none" stroke="#FF312E" stroke-width="1"/>
<rect x="704" y="411" width="1" height="1" fill="#FF312E"/>
<rect x="704" y="418" width="1" height="1" fill="#FF312E"/>
<rect x="703" y="412" width="3" height="6" fill="#FF312E"/>
<rect x="708" y="404" width="1" height="3" fill="#FF312E"/>
<rect x="708" y="418" width="1" height="1" fill="#FF312E"/>
<rect x="707.5" y="407.5" width="2" height="10" fill="none" stroke="#FF312E" stroke-width="1"/>
<rect x="712" y="395" width="1" height="7" fill="#FF312E"/>
<rect x="712" y="406" width="1" height="1" fill="#FF312E"/>
<rect x="711.5" y="402.5" width="2" height="3" fill="none" stroke="#FF312E" stroke-width="1"/>
<rect x="716" y="401" width="1" height="1" fill="#FF312E"/>
<rect x="716" y="407" width="1" height="1" fill="#FF312E"/>
<rect x="715" y="402" width="3" height="5" fill="#FF312E"/>
<rect x="720" y="411" width="1" height="1" fill="#FF312E"/>
<rect x="720" y="413" width="1" height="3" fill="#FF312E"/>
<rect x="719" y="412" width="3" height="1" fill="#FF312E"/>
<rect x="724" y="411" width="1" height="1" fill="#FF312E"/>
<rect x="724" y="433" width="1" height="1" fill="#FF312E"/>
<rect x="723" y="412" width="3" height="21" fill="#FF312E"/>
<rect x="728" y="419" width="1" height="1" fill="#FF312E"/>
<rect x="728" y="432" width="1" height="1" fill="#FF312E"/>
<rect x="727.5" y="420.5" width="2" height="11" fill="none" stroke="#FF312E" stroke-width="1"/>
<rect x="732" y="419" width="1" height="1" fill="#FF312E"/>
<rect x="732" y="431" width="1" height="2" fill="#FF312E"/>
<rect x="731" y="420" width="3" height="11" fill="#FF312E"/>
<rect x="736" y="425" width="1" height="3" fill="#FF312E"/>
<rect x="736" y="432" width="1" height="1" fill="#FF312E"/>
<rect x="735" y="428" width="3" height="4" fill="#FF312E"/>
<rect x="740" y="429" width="1" height="1" fill="#FF312E"/>
<rect x="740" y="438" width="1" height="3" fill="#FF312E"/>
<rect x="739" y="430" width="3" height="8" fill="#FF312E"/>
<rect x="744" y="436" width="1" height="1" fill="#FF312E"/>
<rect x="744" y="452" width="1" height="1" fill="#FF312E"/>
<rect x="743" y="437" width="3" height="15" fill="#FF312E"/>
<rect x="748" y="440" width="1" height="6" fill="#FF312E"/>
<rect x="748" y="453" width="1" height="1" fill="#FF312E"/>
<rect x="747.5" y="446.5" width="2" height="6" fill="none" stroke="#FF312E" stroke-width="1"/>
<rect x="752" y="444" width="1" height="2" fill="#FF312E"/>
<rect x="752" y="447" width="1" height="3" fill="#FF312E"/>
<rect x="751" y="446" width="3" height="1" fill="#FF312E"/>
<rect x="756" y="437" width="1" height="4" fill="#FF312E"/>
<rect x="756" y="446" width="1" height="1" fill="#FF312E"/>
<rect x="755.5" y="441.5" width="2" height="4" fill="none" stroke="#FF312E" stroke-width="1"/>
<rect x="760" y="440" width="1" height="1" fill="#FF312E"/>
<rect x="760" y="454" width="1" height="3" fill="#FF312E"/>
<rect x="759" y="441" width="3" height="13" fill="#FF312E"/>
<rect x="764" y="448" width="1" height="3" fill="#FF312E"/>
<rect x="764" y="455" width="1" height="3" fill="#FF312E"/>
<rect x="763.5" y="451.5" width="2" height="3" fill="none" stroke="#FF312E" stroke-width="1"/>
<rect x="768" y="443" width="1" height="5" fill="#FF312E"/>
<rect x="768" y="451" width="1" height="2" fill="#FF312E"/>
<rect x="767.5" y="448.5" width="2" height="2" fill="none" stroke="#FF312E" stroke-width="1"/>
<rect x="772" y="444" width="1" height="2" fill="#FF312E"/>
<rect x="772" y="447" width="1" height="3" fill="#FF312E"/>
<rect x="771" y="446" width="3" height="1" fill="#FF312E"/>
<rect x="776" y="442" width="1" height="5" fill="#FF312E"/>
<rect x="776" y="453" width="1" height="3" fill="#FF312E"/>
<rect x="775.5" y="447.5" width="2" height="5" fill="none" stroke="#FF312E" stroke-width="1"/>
<rect x="780" y="444" width="1" height="2" fill="#FF312E"/>
<rect x="780" y="447" width="1" height="3" fill="#FF312E"/>
<rect x="779" y="446" width="3" height="1" fill="#FF312E"/>
<rect x="784" y="441" width="1" height="4" fill="#FF312E"/>
<rect x="784" y="448" width="1" height="1" fill="#FF312E"/>
<rect x="783" y="445" width="3" height="3" fill="#FF312E"/>
<rect x="788" y="435" width="1" height="1" fill="#FF312E"/>
<rect x="788" y="448" width="1" height="1" fill="#FF312E"/>
<rect x="787.5" y="436.5" width="2" height="11" fill="none" stroke="#FF312E" stroke-width="1"/>
<rect x="792" y="432" width="1" height="3" fill="#FF312E"/>
<rect x="792" y="437" width="1" height="11" fill="#FF312E"/>
<rect x="791" y="435" width="3" height="2" fill="#FF312E"/>
<rect x="796" y="425" width="1" height="8" fill="#FF312E"/>
<rect x="796" y="436" width="1" height="4" fill="#FF312E"/>
<rect x="795.5" y="433.5" width="2" height="2" fill="none" stroke="#FF312E" stroke-width="1"/>
<rect x="800" y="428" width="1" height="2" fill="#FF312E"/>
<rect x="800" y="433" width="1" height="3" fill="#FF312E"/>
<rect x="799" y="430" width="3" height="3" fill="#FF312E"/>
<rect x="804" y="431" width="1" height="2" fill="#FF312E"/>
<rect x="804" y="440" width="1" height="5" fill="#FF312E"/>
<rect x="803.5" y="433.5" width="2" height="6" fill="none" stroke="#FF312E" stroke-width="1"/>
<rect x="808" y="438" width="1" height="3" fill="#FF312E"/>
<rect x="808" y="448" width="1" height="1" fill="#FF312E"/>
<rect x="807" y="441" width="3" height="7" fill="#FF312E"/>
<rect x="812" y="444" width="1" height="2" fill="#FF312E"/>
<rect x="812" y="456" width="1" height="1" fill="#FF312E"/>
<rect x="811" y="446" width="3" height="10" fill="#FF312E"/>
<rect x="816" y="451" width="1" height="2" fill="#FF312E"/>
<rect x="816" y="474" width="1" height="7" fill="#FF312E"/>
<rect x="815" y="453" width="3" height="21" fill="#FF312E"/>
<rect x="820" y="439" width="1" height="33" fill="#FF312E"/>
<rect x="820" y="474" width="1" height="1" fill="#FF312E"/>
<rect x="819" y="472" width="3" height="2" fill="#FF312E"/>
<rect x="824" y="457" width="1" height="15" fill="#FF312E"/>
<rect x="824" y="474" width="1" height="1" fill="#FF312E"/>
<rect x="823" y="472" width="3" height="2" fill="#FF312E"/>
<rect x="828" y="464" width="1" height="8" fill="#FF312E"/>
<rect x="828" y="492" width="1" height="4" fill="#FF312E"/>
<rect x="827" y="472" width="3" height="20" fill="#FF312E"/>
<rect x="832" y="477" width="1" height="1" fill="#FF312E"/>
<rect x="832" y="495" width="1" height="5" fill="#FF312E"/>
<rect x="831.5" y="478.5" width="2" height="16" fill="none" stroke="#FF312E" stroke-width="1"/>
<rect x="836" y="466" width="1" height="9" fill="#FF312E"/>
<rect x="836" y="477" width="1" height="1" fill="#FF312E"/>
<rect x="835" y="475" width="3" height="2" fill="#FF312E"/>
<rect x="840" y="474" width="1" height="2" fill="#FF312E"/>
<rect x="840" y="481" width="1" height="6" fill="#FF312E"/>
<rect x="839" y="476" width="3" height="5" fill="#FF312E"/>
<rect x="844" y="477" width="1" height="3" fill="#FF312E"/>
<rect x="844" y="489" width="1" height="3" fill="#FF312E"/>
<rect x="843" y="480" width="3" height="9" fill="#FF312E"/>
<rect x="848" y="481" width="1" height="1" fill="#FF312E"/>
<rect x="848" y="489" width="1" height="1" fill="#FF312E"/>
<rect x="847.5" y="482.5" width="2" height="6" fill="none" stroke="#FF312E" stroke-width="1"/>
<rect x="852" y="464" width="1" height="1" fill="#FF312E"/>
<rect x="852" y="483" width="1" height="1" fill="#FF312E"/>
<rect x="851.5" y="465.5" width="2" height="17" fill="none" stroke="#FF312E" stroke-width="1"/>
<rect x="856" y="464" width="1" height="4" fill="#FF312E"/>
<rect x="856" y="474" width="1" height="1" fill="#FF312E"/>
<rect x="855.5" y="468.5" width="2" height="5" fill="none" stroke="#FF312E" stroke-width="1"/>
<rect x="860" y="462" width="1" height="5" fill="#FF312E"/>
<rect x="860" y="473" width="1" height="1" fill="#FF312E"/>
<rect x="859" y="467" width="3" height="6" fill="#FF312E"/>
<rect x="864" y="467" width="1" height="5" fill="#FF312E"/>
<rect x="864" y="475" width="1" height="1" fill="#FF312E"/>
<rect x="863" y="472" width="3" height="3" fill="#FF312E"/>
<rect x="868" y="467" width="1" height="4" fill="#FF312E"/>
<rect x="868" y="475" width="1" height="1" fill="#FF312E"/>
<rect x="867.5" y="471.5" width="2" height="3" fill="none" stroke="#FF312E" stroke-width="1"/>
<rect x="872" y="464" width="1" height="6" fill="#FF312E"/>
<rect x="872" y="471" width="1" height="1" fill="#FF312E"/>
<rect x="871" y="470" width="3" height="1" fill="#FF312E"/>
<rect x="876" y="466" width="1" height="4" fill="#FF312E"/>
<rect x="876" y="475" width="1" height="1" fill="#FF312E"/>
<rect x="875" y="470" width="3" height="5" fill="#FF312E"/>
<rect x="880" y="469" width="1" height="1" fill="#FF312E"/>
<rect x="880" y="472" width="1" height="2" fill="#FF312E"/>
<rect x="879" y="470" width="3" height="2" fill="#FF312E"/>
<rect x="884" y="467" width="1" height="1" fill="#FF312E"/>
<rect x="884" y="470" width="1" height="3" fill="#FF312E"/>
<rect x="883" y="468" width="3" height="2" fill="#FF312E"/>
<rect x="888" y="468" width="1" height="1" fill="#FF312E"/>
<rect x="888" y="471" width="1" height="2" fill="#FF312E"/>
<rect x="887" y="469" width="3" height="2" fill="#FF312E"/>
<rect x="892" y="468" width="1" height="2" fill="#FF312E"/>
<rect x="892" y="471" width="1" height="2" fill="#FF312E"/>
<rect x="891" y="470" width="3" height="1" fill="#FF312E"/>
<rect x="896" y="464" width="1" height="1" fill="#FF312E"/>
<rect x="896" y="471" width="1" height="1" fill="#FF312E"/>
<rect x="895.5" y="465.5" width="2" height="5" fill="none" stroke="#FF312E" stroke-width="1"/>
<rect x="900" y="464" width="1" height="1" fill="#FF312E"/>
<rect x="900" y="466" width="1" height="1" fill="#FF312E"/>
<rect x="899" y="465" width="3" height="1" fill="#FF312E"/>
<rect x="904" y="464" width="1" height="1" fill="#FF312E"/>
<rect x="904" y="470" width="1" height="1" fill="#FF312E"/>
<rect x="903" y="465" width="3" height="5" fill="#FF312E"/>
<rect x="908" y="467" width="1" height="1" fill="#FF312E"/>
<rect x="908" y="469" width="1" height="1" fill="#FF312E"/>
<rect x="907" y="468" width="3" height="1" fill="#FF312E"/>
<rect x="912" y="465" width="1" height="1" fill="#FF312E"/>
<rect x="912" y="469" width="1" height="1" fill="#FF312E"/>
<rect x="911.5" y="466.5" width="2" height="2" fill="none" stroke="#FF312E" stroke-width="1"/>
<rect x="916" y="465" width="1" height="1" fill="#FF312E"/>
<rect x="916" y="467" width="1" height="3" fill="#FF312E"/>
<rect x="915" y="466" width="3" height="1" fill="#FF312E"/>
<rect x="920" y="465" width="1" height="1" fill="#FF312E"/>
<rect x="920" y="467" width="1" height="1" fill="#FF312E"/>
<rect x="919" y="466" width="3" height="1" fill="#FF312E"/>
<rect x="924" y="465" width="1" height="1" fill="#FF312E"/>
<rect x="924" y="467" width="1" height="1" fill="#FF312E"/>
<rect x="923" y="466" width="3" height="1" fill="#FF312E"/>
<rect x="928" y="465" width="1" height="1" fill="#FF312E"/>
<rect x="928" y="468" width="1" height="1" fill="#FF312E"/>
<rect x="927" y="466" width="3" height="2" fill="#FF312E"/>
<rect x="932" y="465" width="1" height="2" fill="#FF312E"/>
<rect x="932" y="468" width="1" height="2" fill="#FF312E"/>
<rect x="931" y="467" width="3" height="1" fill="#FF312E"/>
<rect x="936" y="466" width="1" height="1" fill="#FF312E"/>
<rect x="936" y="469" width="1" height="1" fill="#FF312E"/>
<rect x="935" y="467" width="3" height="2" fill="#FF312E"/>
<rect x="940" y="467" width="1" height="1" fill="#FF312E"/>
<rect x="940" y="474" width="1" height="1" fill="#FF312E"/>
<rect x="939" y="468" width="3" height="6" fill="#FF312E"/>
<rect x="944" y="465" width="1" height="3" fill="#FF312E"/>
<rect x="944" y="472" width="1" height="1" fill="#FF312E"/>
<rect x="943.5" y="468.5" width="2" height="3" fill="none" stroke="#FF312E" stroke-width="1"/>
<rect x="948" y="464" width="1" height="1" fill="#FF312E"/>
<rect x="948" y="469" width="1" height="1" fill="#FF312E"/>
<rect x="947.5" y="465.5" width="2" height="3" fill="none" stroke="#FF312E" stroke-width="1"/>
<rect x="952" y="458" width="1" height="6" fill="#FF312E"/>
<rect x="952" y="465" width="1" height="1" fill="#FF312E"/>
<rect x="951" y="464" width="3" height="1" fill="#FF312E"/>
<rect x="956" y="462" width="1" height="3" fill="#FF312E"/>
<rect x="956" y="466" width="1" height="1" fill="#FF312E"/>
<rect x="955" y="465" width="3" height="1" fill="#FF312E"/>
<rect x="960" y="455" width="1" height="2" fill="#FF312E"/>
<rect x="960" y="462" width="1" height="1" fill="#FF312E"/>
<rect x="959.5" y="457.5" width="2" height="4" fill="none" stroke="#FF312E" stroke-width="1"/>
<rect x="964" y="454" width="1" height="3" fill="#FF312E"/>
<rect x="964" y="461" width="1" height="1" fill="#FF312E"/>
<rect x="963" y="457" width="3" height="4" fill="#FF312E"/>
<rect x="968" y="458" width="1" height="2" fill="#FF312E"/>
<rect x="968" y="463" width="1" height="1" fill="#FF312E"/>
<rect x="967" y="460" width="3" height="3" fill="#FF312E"/>
<rect x="972" y="458" width="1" height="4" fill="#FF312E"/>
<rect x="972" y="463" width="1" height="5" fill="#FF312E"/>
<rect x="971" y="462" width="3" height="1" fill="#FF312E"/>
<rect x="976" y="458" width="1" height="5" fill="#FF312E"/>
<rect x="976" y="465" width="1" height="1" fill="#FF312E"/>
<rect x="975" y="463" width="3" height="2" fill="#FF312E"/>
<rect x="980" y="456" width="1" height="4" fill="#FF312E"/>
<rect x="980" y="461" width="1" height="2" fill="#FF312E"/>
<rect x="979" y="460" width="3" height="1" fill="#FF312E"/>
<rect x="984" y="458" width="1" height="1" fill="#FF312E"/>
<rect x="984" y="464" width="1" height="1" fill="#FF312E"/>
<rect x="983.5" y="459.5" width="2" height="4" fill="none" stroke="#FF312E" stroke-width="1"/>
<rect x="988" y="457" width="1" height="1" fill="#FF312E"/>
<rect x="988" y="464" width="1" height="1" fill="#FF312E"/>
<rect x="987" y="458" width="3" height="6" fill="#FF312E"/>
<rect x="992" y="458" width="1" height="1" fill="#FF312E"/>
<rect x="992" y="462" width="1" height="4" fill="#FF312E"/>
<rect x="991.5" y="459.5" width="2" height="2" fill="none" stroke="#FF312E" stroke-width="1"/>
<rect x="996" y="460" width="1" height="1" fill="#FF312E"/>
<rect x="995.5" y="457.5" width="2" height="2" fill="none" stroke="#FF312E" stroke-width="1"/>
<rect x="1000" y="454" width="1" height="2" fill="#FF312E"/>
<rect x="1000" y="458" width="1" height="1" fill="#FF312E"/>
<rect x="999" y="456" width="3" height="2" fill="#FF312E"/>
<rect x="1004" y="455" width="1" height="1" fill="#FF312E"/>
<rect x="1004" y="458" width="1" height="1" fill="#FF312E"/>
<rect x="1003" y="456" width="3" height="2" fill="#FF312E"/>
<rect x="1008" y="450" width="1" height="1" fill="#FF312E"/>
<rect x="1008" y="457" width="1" height="1" fill="#FF312E"/>
<rect x="1007.5" y="451.5" width="2" height="5" fill="none" stroke="#FF312E" stroke-width="1"/>
<rect x="1012" y="449" width="1" height="1" fill="#FF312E"/>
<rect x="1012" y="453" width="1" height="1" fill="#FF312E"/>
<rect x="1011" y="450" width="3" height="3" fill="#FF312E"/>
<rect x="1016" y="450" width="1" height="1" fill="#FF312E"/>
<rect x="1016" y="455" width="1" height="1" fill="#FF312E"/>
<rect x="1015" y="451" width="3" height="4" fill="#FF312E"/>
<rect x="1020" y="453" width="1" height="1" fill="#FF312E"/>
<rect x="1020" y="462" width="1" height="1" fill="#FF312E"/>
<rect x="1019" y="454" width="3" height="8" fill="#FF312E"/>
<rect x="1024" y="456" width="1" height="1" fill="#FF312E"/>
<rect x="1024" y="460" width="1" height="3" fill="#FF312E"/>
<rect x="1023.5" y="457.5" width="2" height="2" fill="none" stroke="#FF312E" stroke-width="1"/>
<rect x="1028" y="456" width="1" height="1" fill="#FF312E"/>
<rect x="1028" y="459" width="1" height="1" fill="#FF312E"/>
<rect x="1027" y="457" width="3" height="2" fill="#FF312E"/>
<rect x="1031.5" y="455.5" width="2" height="3" fill="none" stroke="#FF312E" stroke-width="1"/>
<rect x="1035.5" y="451.5" width="2" height="4" fill="none" stroke="#FF312E" stroke-width="1"/>
<rect x="1039" y="452" width="3" height="1" fill="#FF312E"/>
<line x1="0.5" y1="362.5" x2="48.5" y2="414.5" stroke="#00312E" stroke-width="2.05"/>
<line x1="48.5" y1="414.5" x2="140.5" y2="265.5" stroke="#E1A1D1" stroke-width="2.05"/>
<line x1="140.5" y1="265.5" x2="160.5" y2="300.5" stroke="#00312E" stroke-width="2.05"/>
<line x1="160.5" y1="300.5" x2="204.5" y2="14.5" stroke="#E1A1D1" stroke-width="2.05"/>
<line x1="204.5" y1="14.5" x2="276.5" y2="242.5" stroke="#00312E" stroke-width="2.05"/>
<line x1="276.5" y1="242.5" x2="300.5" y2="210.5" stroke="#E1A1D1" stroke-width="2.05"/>
<line x1="300.5" y1="210.5" x2="340.5" y2="328.5" stroke="#00312E" stroke-width="2.05"/>
<line x1="340.5" y1="328.5" x2="364.5" y2="263.5" stroke="#E1A1D1" stroke-width="2.05"/>
<line x1="364.5" y1="263.5" x2="460.5" y2="463.5" stroke="#00312E" stroke-width="2.05"/>
<line x1="460.5" y1="463.5" x2="588.5" y2="387.5" stroke="#E1A1D1" stroke-width="2.05"/>
<line x1="588.5" y1="387.5" x2="620.5" y2="415.5" stroke="#00312E" stroke-width="2.05"/>
<line x1="620.5" y1="415.5" x2="644.5" y2="399.0" stroke="#E1A1D1" stroke-width="2.05"/>
<line x1="644.5" y1="399.0" x2="656.5" y2="426.5" stroke="#00312E" stroke-width="2.05"/>
<line x1="656.5" y1="426.5" x2="712.5" y2="393.5" stroke="#E1A1D1" stroke-width="2.05"/>
<line x1="712.5" y1="393.5" x2="764.5" y2="458.5" stroke="#00312E" stroke-width="2.05"/>
<line x1="764.5" y1="458.5" x2="796.5" y2="426.5" stroke="#E1A1D1" stroke-width="2.05"/>
<line x1="796.5" y1="426.5" x2="832.5" y2="500.5" stroke="#00312E" stroke-width="2.05"/>
<line x1="832.5" y1="500.5" x2="900.5" y2="461.5" stroke="#E1A1D1" stroke-width="2.05"/>
<line x1="900.5" y1="461.5" x2="940.5" y2="474.5" stroke="#00312E" stroke-width="2.05"/>
<line x1="940.5" y1="474.5" x2="1008.5" y2="450.0" stroke="#E1A1D1" stroke-width="2.05"/>
<line x1="1008.5" y1="450.0" x2="1024.5" y2="462.5" stroke="#00312E" stroke-width="2.05"/>
<line x1="1024.5" y1="462.5" x2="1036.5" y2="448.5" stroke="#E1A1D1" stroke-width="2.05"/>
<polyline points="0.0,386.0 12.0,383.5 30.0,385.0 50.0,389.0 70.0,392.0 80.0,391.5 90.0,389.0 100.0,385.0 110.0,379.0 120.0,371.0 130.0,361.0 140.0,352.0 150.0,344.0 160.0,337.0 170.0,332.0 180.0,325.0 190.0,320.0 196.0,316.0 198.3,310.0 201.0,302.0 204.2,294.2 207.5,288.3 210.4,281.7 211.7,278.3 215.8,273.3 220.0,269.2 224.2,265.0 228.3,261.7 232.5,259.6 236.7,257.5 240.8,255.8 245.0,254.6 249.2,252.9 253.3,251.2 257.5,249.6 261.7,248.3 265.8,247.1 270.0,246.2 274.2,245.4 278.3,244.3 282.5,243.6 285.0,243.3 290.0,242.0 300.0,239.0 312.0,237.6 320.0,238.6 330.0,243.0 340.0,250.0 350.0,255.0 364.0,258.4 378.0,263.6 390.0,267.0 402.0,270.0 420.0,274.4 430.0,278.0 436.0,282.0 440.0,288.0 450.0,296.0 456.2,305.0 462.4,313.8 468.7,322.7 474.9,333.0 479.1,339.3 487.4,348.7 496.8,359.6 510.0,373.0 520.0,382.0 530.0,387.0 540.0,393.0 550.0,398.0 562.0,402.0 570.0,404.0 580.0,404.6 600.0,405.2 620.0,405.6 640.0,406.0 660.0,406.6 672.0,407.6 690.0,409.0 704.0,410.3 726.0,411.8 740.0,415.4 756.0,419.7 769.0,424.7 783.6,428.3 803.8,429.8 812.0,433.4 820.0,437.0 830.0,441.0 840.0,446.0 850.0,450.4 860.0,453.0 870.0,455.7 880.0,457.6 890.0,459.0 900.0,459.6 908.6,460.3 928.8,461.3 937.0,462.7 957.6,463.0 972.0,462.7 986.4,462.0 1000.8,461.3 1015.0,460.0 1029.6,459.8 1040.4,458.8" fill="none" stroke="#FFB12E" stroke-width="2" stroke-linejoin="round"/>
<line x1="0" y1="14.5" x2="1198" y2="14.5" stroke="#696969" stroke-width="1" stroke-dasharray="9 3 3 3 3 3"/>
<line x1="0" y1="32.5" x2="1198" y2="32.5" stroke="#696969" stroke-width="1" stroke-dasharray="9 3 3 3 3 3"/>
<line x1="0" y1="50.5" x2="1198" y2="50.5" stroke="#696969" stroke-width="1" stroke-dasharray="9 3 3 3 3 3"/>
<line x1="0" y1="68.5" x2="1198" y2="68.5" stroke="#696969" stroke-width="1" stroke-dasharray="9 3 3 3 3 3"/>
<line x1="0" y1="86.5" x2="1198" y2="86.5" stroke="#696969" stroke-width="1" stroke-dasharray="9 3 3 3 3 3"/>
<line x1="0" y1="104.5" x2="1198" y2="104.5" stroke="#696969" stroke-width="1" stroke-dasharray="9 3 3 3 3 3"/>
<line x1="0" y1="122.5" x2="1198" y2="122.5" stroke="#696969" stroke-width="1" stroke-dasharray="9 3 3 3 3 3"/>
<line x1="0" y1="140.5" x2="1198" y2="140.5" stroke="#696969" stroke-width="1" stroke-dasharray="9 3 3 3 3 3"/>
<line x1="0" y1="158.5" x2="1198" y2="158.5" stroke="#696969" stroke-width="1" stroke-dasharray="9 3 3 3 3 3"/>
<line x1="0" y1="176.5" x2="1198" y2="176.5" stroke="#696969" stroke-width="1" stroke-dasharray="9 3 3 3 3 3"/>
<line x1="0" y1="194.5" x2="1198" y2="194.5" stroke="#696969" stroke-width="1" stroke-dasharray="9 3 3 3 3 3"/>
<line x1="0" y1="212.5" x2="1198" y2="212.5" stroke="#696969" stroke-width="1" stroke-dasharray="9 3 3 3 3 3"/>
<line x1="0" y1="230.5" x2="1198" y2="230.5" stroke="#696969" stroke-width="1" stroke-dasharray="9 3 3 3 3 3"/>
<line x1="0" y1="248.5" x2="1198" y2="248.5" stroke="#696969" stroke-width="1" stroke-dasharray="9 3 3 3 3 3"/>
<line x1="0" y1="266.5" x2="1198" y2="266.5" stroke="#696969" stroke-width="1" stroke-dasharray="9 3 3 3 3 3"/>
<line x1="0" y1="284.5" x2="1198" y2="284.5" stroke="#696969" stroke-width="1" stroke-dasharray="9 3 3 3 3 3"/>
<line x1="0" y1="302.5" x2="1198" y2="302.5" stroke="#696969" stroke-width="1" stroke-dasharray="9 3 3 3 3 3"/>
<line x1="0" y1="320.5" x2="1198" y2="320.5" stroke="#696969" stroke-width="1" stroke-dasharray="9 3 3 3 3 3"/>
<line x1="0" y1="338.5" x2="1198" y2="338.5" stroke="#696969" stroke-width="1" stroke-dasharray="9 3 3 3 3 3"/>
<line x1="0" y1="356.5" x2="1198" y2="356.5" stroke="#696969" stroke-width="1" stroke-dasharray="9 3 3 3 3 3"/>
<line x1="0" y1="374.5" x2="1198" y2="374.5" stroke="#696969" stroke-width="1" stroke-dasharray="9 3 3 3 3 3"/>
<line x1="0" y1="392.5" x2="1198" y2="392.5" stroke="#696969" stroke-width="1" stroke-dasharray="9 3 3 3 3 3"/>
<line x1="0" y1="410.5" x2="1198" y2="410.5" stroke="#696969" stroke-width="1" stroke-dasharray="9 3 3 3 3 3"/>
<line x1="0" y1="428.5" x2="1198" y2="428.5" stroke="#696969" stroke-width="1" stroke-dasharray="9 3 3 3 3 3"/>
<line x1="0" y1="446.5" x2="1198" y2="446.5" stroke="#696969" stroke-width="1" stroke-dasharray="9 3 3 3 3 3"/>
<line x1="0" y1="464.5" x2="1198" y2="464.5" stroke="#696969" stroke-width="1" stroke-dasharray="9 3 3 3 3 3"/>
<line x1="0" y1="482.5" x2="1198" y2="482.5" stroke="#696969" stroke-width="1" stroke-dasharray="9 3 3 3 3 3"/>
<line x1="0" y1="500.5" x2="1198" y2="500.5" stroke="#696969" stroke-width="1" stroke-dasharray="9 3 3 3 3 3"/>
<line x1="0" y1="518.5" x2="1198" y2="518.5" stroke="#696969" stroke-width="1" stroke-dasharray="9 3 3 3 3 3"/>
<line x1="0" y1="536.5" x2="1198" y2="536.5" stroke="#696969" stroke-width="1" stroke-dasharray="9 3 3 3 3 3"/>
<line x1="0" y1="554.5" x2="1198" y2="554.5" stroke="#696969" stroke-width="1" stroke-dasharray="9 3 3 3 3 3"/>
<line x1="804.5" y1="3" x2="804.5" y2="562" stroke="#A9A9A9" stroke-width="1" stroke-dasharray="3 3"/>
</g>
<g id="hlines">
<rect x="1" y="282" width="1198" height="2" fill="#0000FF"/>
<rect x="1" y="360" width="1198" height="2" fill="#0000FF"/>
<rect x="1" y="369" width="1198" height="2" fill="#0000FF"/>
<rect x="1" y="399" width="1198" height="2" fill="#0000FF"/>
<rect x="1" y="408" width="1198" height="2" fill="#0000FF"/>
<rect x="1" y="475" width="1198" height="2" fill="#0000FF"/>
<rect x="1" y="511" width="1198" height="2" fill="#0000FF"/>
<rect x="1" y="528" width="1198" height="2" fill="#0000FF"/>
</g>
</g>
<g id="title">
<g shape-rendering="auto" stroke-linejoin="round"><rect x="5.5" y="7.5" width="14" height="10" rx="1.5" fill="#fff" stroke="none"/><path d="M12.5 7.5h-5.5a1.5 1.5 0 0 0-1.5 1.5v7a1.5 1.5 0 0 0 1.5 1.5h5.5" fill="none" stroke="#D8362C"/><path d="M12.5 7.5h5.5a1.5 1.5 0 0 1 1.5 1.5v7a1.5 1.5 0 0 1-1.5 1.5h-5.5" fill="none" stroke="#0A62B0"/><rect x="7.5" y="10" width="4" height="5" fill="#FDE9E4" stroke="none"/><rect x="13.5" y="10" width="4" height="5" fill="#D6ECFD" stroke="none"/><path d="M7.5 9.6h4M7.5 12.5h4M7.5 15.4h4" stroke="#D8362C" stroke-width="1.1" fill="none"/><path d="M13.5 9.6h4M13.5 12.5h4M13.5 15.4h4" stroke="#0A62B0" stroke-width="1.1" fill="none"/><path d="M27.6 7.5h1a1 1 0 0 1 1 1v3h2a1 1 0 0 1 1 1v4a1 1 0 0 1-1 1h-4a1 1 0 0 1-1-1v-8a1 1 0 0 1 1-1z" fill="#FDDCD5" stroke="#D8362C"/><path d="M39.4 7.5h-1a1 1 0 0 0-1 1v3h-2a1 1 0 0 0-1 1v4a1 1 0 0 0 1 1h4a1 1 0 0 0 1-1v-8a1 1 0 0 0-1-1z" fill="#C9E6FC" stroke="#0A62B0"/><rect x="31.5" y="7.4" width="4.2" height="2" rx="1" fill="#F4F4F4" stroke="#A0A0A0" stroke-width="0.8"/></g>
<text x="46.5" y="16" fill="#000" stroke="#000" textLength="111" lengthAdjust="spacingAndGlyphs">XAUUSD, M15:  Gold spot</text>
</g>
<g id="shift" fill="#C0C0C0"><rect x="1036" y="2" width="9" height="1"/><rect x="1037" y="3" width="7" height="1"/><rect x="1038" y="4" width="5" height="1"/><rect x="1039" y="5" width="3" height="1"/><rect x="1040" y="6" width="1" height="1"/></g>
<g id="sub" clip-path="url(#sub)">
<line x1="1" y1="606.5" x2="1199" y2="606.5" stroke="#C0C0C0" stroke-width="1" stroke-dasharray="3 3"/>
<line x1="1" y1="661.5" x2="1199" y2="661.5" stroke="#C0C0C0" stroke-width="1" stroke-dasharray="3 3"/>
<line x1="196.5" y1="565" x2="196.5" y2="701" stroke="#000" stroke-width="1" stroke-dasharray="3 3"/>
<line x1="564.5" y1="565" x2="564.5" y2="701" stroke="#000" stroke-width="1" stroke-dasharray="3 3"/>
<line x1="932.5" y1="565" x2="932.5" y2="701" stroke="#000" stroke-width="1" stroke-dasharray="3 3"/>
<polyline points="0.0,603.3 10.0,603.0 15.0,604.4 20.0,610.0 25.0,619.0 30.0,633.0 35.0,649.0 40.0,661.0 45.0,671.0 50.0,677.8 55.0,681.0 61.0,684.0 68.0,683.0 72.0,681.0 77.0,675.5 82.0,664.0 88.0,649.0 95.0,633.0 100.0,620.0 105.0,608.9 108.0,599.5 112.0,591.0 116.0,584.0 119.0,580.3 121.0,579.2 126.0,575.0 134.0,571.0 146.0,569.5 156.0,572.0 163.0,576.0 167.0,579.2 171.0,580.5 175.0,582.4 192.0,582.4 196.0,579.8 201.0,579.5 204.0,581.8 210.0,587.0 216.0,593.8 222.0,601.6 230.0,615.0 236.0,623.0 244.0,637.0 252.0,649.0 260.0,657.0 270.0,664.0 280.0,667.0 290.0,669.4 300.0,670.6 310.0,672.6 320.0,677.0 330.0,682.0 340.0,688.0 345.0,689.4 350.0,689.0 356.0,685.4 360.0,681.0 368.0,669.0 376.0,660.0 384.0,655.6 396.0,654.6 404.0,656.6 410.0,657.4 420.0,655.4 426.0,657.0 434.0,665.0 442.0,674.0 450.0,678.0 455.0,680.6 460.0,685.0 465.0,688.4 480.0,688.6 490.0,688.6 493.0,689.6 500.0,690.0 510.0,690.0 520.0,690.0 525.0,689.0 530.0,687.0 540.0,684.4 550.0,680.0 558.0,675.0 564.0,673.0 572.0,671.4 576.0,667.0 580.0,661.0 590.0,643.0 600.0,623.0 606.0,609.0 612.4,591.6 620.0,598.0 626.0,603.0 632.0,605.0 640.0,607.4 646.0,606.0 652.0,606.0 656.0,609.0 664.0,615.0 670.0,622.0 680.0,635.0 688.0,647.0 694.0,652.0 700.0,653.4 704.0,656.6 712.0,646.6 720.0,645.0 724.0,649.0 730.0,652.0 740.0,663.0 748.0,675.0 752.0,682.0 756.0,684.0 760.0,689.0 764.0,688.0 770.0,689.4 776.0,687.0 782.0,684.0 790.0,678.0 796.0,674.0 800.0,670.0 804.0,667.4 812.0,668.6 820.0,673.0 828.0,680.0 836.0,682.0 844.0,685.4 848.0,684.6 856.0,678.0 864.0,669.0 870.0,661.4 876.0,659.0 884.0,653.0 888.0,650.0 896.0,649.0 904.0,646.0 910.0,645.4 916.0,643.4 924.0,641.0 932.0,637.4 936.0,636.0 941.0,634.0 945.0,630.0 948.0,625.0 953.0,619.4 957.0,614.4 960.0,609.0 964.0,604.0 968.0,601.0 972.0,598.7 976.0,594.0 980.0,591.3 984.0,591.3 987.0,595.6 990.0,598.3 995.0,599.0 1000.0,601.7 1004.0,602.6 1008.0,598.3 1012.0,594.0 1016.0,592.4 1019.0,594.0 1023.0,596.7 1028.0,597.4 1036.0,597.2 1040.0,596.3" fill="none" stroke="#00CED1" stroke-width="1"/>
<polyline points="0.0,619.0 5.0,614.4 10.0,611.0 16.0,607.8 22.0,607.0 27.0,610.0 33.0,622.0 40.0,635.6 47.0,649.0 53.0,662.0 60.0,672.0 66.0,677.8 73.0,681.0 78.0,680.7 84.0,674.4 90.0,667.8 96.0,657.8 101.0,645.6 107.0,631.0 112.0,619.0 118.0,605.8 122.0,599.5 126.0,593.0 130.0,586.5 134.0,580.8 140.0,576.0 150.0,572.0 162.0,571.5 172.0,575.0 180.0,579.2 188.0,581.3 194.0,581.5 200.0,581.3 206.0,581.5 212.0,583.7 218.0,587.2 224.0,591.7 230.0,599.0 240.0,614.0 250.0,629.0 260.0,643.0 270.0,654.0 280.0,661.0 290.0,666.0 300.0,668.0 310.0,670.6 320.0,672.0 330.0,676.0 340.0,681.0 348.0,684.4 356.0,685.4 364.0,684.0 370.0,679.0 380.0,669.0 390.0,661.0 396.0,657.4 410.0,656.6 424.0,656.0 432.0,658.0 440.0,662.0 450.0,669.0 453.0,672.0 460.0,678.0 470.0,683.0 480.0,686.0 490.0,688.0 500.0,689.4 510.0,689.4 520.0,689.6 530.0,689.0 540.0,687.0 550.0,684.0 560.0,680.0 570.0,676.0 576.0,672.6 584.0,666.0 590.0,657.0 596.0,647.0 602.0,635.0 610.0,621.0 616.0,612.0 622.0,606.0 628.0,603.0 636.0,603.0 646.0,604.4 656.0,606.0 664.0,610.0 672.0,615.0 680.0,623.0 690.0,635.0 700.0,643.0 703.0,647.0 710.0,650.0 720.0,649.6 730.0,649.4 736.0,651.0 744.0,658.0 752.0,666.0 760.0,675.0 768.0,681.0 776.0,685.0 784.0,685.6 790.0,684.4 800.0,680.0 808.0,674.0 816.0,671.0 824.0,671.6 832.0,674.0 840.0,678.0 848.0,681.0 856.0,681.0 864.0,677.4 872.0,672.0 880.0,665.0 888.0,658.0 896.0,654.0 904.0,650.0 912.0,648.0 920.0,645.4 930.0,642.5 936.0,640.6 942.0,638.0 948.0,634.4 954.0,630.0 960.0,624.4 966.0,618.3 971.0,612.0 976.0,606.7 981.0,601.7 984.0,599.8 988.0,597.2 1000.0,597.2 1010.0,597.2 1020.0,596.7 1030.0,596.7 1039.0,596.4" fill="none" stroke="#FF0000" stroke-width="1" stroke-dasharray="3 3"/>
<path d="M77.5 669.5l6 6h-3v8h-6v-8h-3z" fill="none" stroke="#0000FF" stroke-width="1"/>
<path d="M357.5 679.5l6 6h-3v8h-6v-8h-3z" fill="none" stroke="#0000FF" stroke-width="1"/>
<path d="M485.5 680.5l6 6h-3v8h-6v-8h-3z" fill="none" stroke="#0000FF" stroke-width="1"/>
<path d="M517.5 682.5l6 6h-3v8h-6v-8h-3z" fill="none" stroke="#0000FF" stroke-width="1"/>
<path d="M781.5 678.5l6 6h-3v8h-6v-8h-3z" fill="none" stroke="#0000FF" stroke-width="1"/>
<path d="M853.5 673.5l6 6h-3v8h-6v-8h-3z" fill="none" stroke="#0000FF" stroke-width="1"/>
<path d="M149.5 565.5h6v8h3l-6 6l-6 -6h3z" fill="none" stroke="#FF00FF" stroke-width="1"/>
<path d="M201.5 576.5h6v8h3l-6 6l-6 -6h3z" fill="none" stroke="#FF00FF" stroke-width="1"/>
<path d="M625.5 597.5h6v8h3l-6 6l-6 -6h3z" fill="none" stroke="#FF00FF" stroke-width="1"/>
<path d="M989.5 591.5h6v8h3l-6 6l-6 -6h3z" fill="none" stroke="#FF00FF" stroke-width="1"/>
<path d="M1021.5 590.5h6v8h3l-6 6l-6 -6h3z" fill="none" stroke="#FF00FF" stroke-width="1"/>
<rect x="2" y="567" width="206" height="12" fill="#fff"/>
<text x="4" y="577" fill="#000" stroke="#000" textLength="202" lengthAdjust="spacingAndGlyphs">keys_stochastic (30,10,10) 76.69 76.99 0.00 0.00</text>
</g>
<g id="borders" fill="#000">
<rect x="0" y="1" width="1200" height="1"/>
<rect x="0" y="1" width="1" height="562"/>
<rect x="1199" y="1" width="1" height="562"/>
<rect x="0" y="562" width="1200" height="1"/>
<rect x="0" y="564" width="1200" height="1"/>
<rect x="0" y="564" width="1" height="140"/>
<rect x="1199" y="564" width="1" height="140"/>
<rect x="0" y="703" width="1200" height="1"/>
</g>
<g id="scale">
<rect x="1200" y="18" width="3" height="1" fill="#000"/>
<text x="1205" y="21.8" fill="#000" stroke="#000" textLength="33" lengthAdjust="spacingAndGlyphs">2143.98</text>
<rect x="1200" y="50" width="3" height="1" fill="#000"/>
<text x="1205" y="53.8" fill="#000" stroke="#000" textLength="33" lengthAdjust="spacingAndGlyphs">2135.08</text>
<rect x="1200" y="82" width="3" height="1" fill="#000"/>
<text x="1205" y="85.8" fill="#000" stroke="#000" textLength="33" lengthAdjust="spacingAndGlyphs">2126.18</text>
<rect x="1200" y="114" width="3" height="1" fill="#000"/>
<text x="1205" y="117.8" fill="#000" stroke="#000" textLength="33" lengthAdjust="spacingAndGlyphs">2117.28</text>
<rect x="1200" y="146" width="3" height="1" fill="#000"/>
<text x="1205" y="149.8" fill="#000" stroke="#000" textLength="33" lengthAdjust="spacingAndGlyphs">2108.38</text>
<rect x="1200" y="178" width="3" height="1" fill="#000"/>
<text x="1205" y="181.8" fill="#000" stroke="#000" textLength="33" lengthAdjust="spacingAndGlyphs">2099.48</text>
<rect x="1200" y="210" width="3" height="1" fill="#000"/>
<text x="1205" y="213.8" fill="#000" stroke="#000" textLength="33" lengthAdjust="spacingAndGlyphs">2090.58</text>
<rect x="1200" y="242" width="3" height="1" fill="#000"/>
<text x="1205" y="245.8" fill="#000" stroke="#000" textLength="33" lengthAdjust="spacingAndGlyphs">2081.68</text>
<rect x="1200" y="274" width="3" height="1" fill="#000"/>
<text x="1205" y="277.8" fill="#000" stroke="#000" textLength="33" lengthAdjust="spacingAndGlyphs">2072.78</text>
<rect x="1200" y="306" width="3" height="1" fill="#000"/>
<text x="1205" y="309.8" fill="#000" stroke="#000" textLength="33" lengthAdjust="spacingAndGlyphs">2063.88</text>
<rect x="1200" y="338" width="3" height="1" fill="#000"/>
<text x="1205" y="341.8" fill="#000" stroke="#000" textLength="33" lengthAdjust="spacingAndGlyphs">2054.98</text>
<rect x="1200" y="370" width="3" height="1" fill="#000"/>
<text x="1205" y="373.8" fill="#000" stroke="#000" textLength="33" lengthAdjust="spacingAndGlyphs">2046.08</text>
<rect x="1200" y="402" width="3" height="1" fill="#000"/>
<text x="1205" y="405.8" fill="#000" stroke="#000" textLength="33" lengthAdjust="spacingAndGlyphs">2037.18</text>
<rect x="1200" y="434" width="3" height="1" fill="#000"/>
<text x="1205" y="437.8" fill="#000" stroke="#000" textLength="33" lengthAdjust="spacingAndGlyphs">2028.28</text>
<rect x="1200" y="466" width="3" height="1" fill="#000"/>
<text x="1205" y="469.8" fill="#000" stroke="#000" textLength="33" lengthAdjust="spacingAndGlyphs">2019.38</text>
<rect x="1200" y="498" width="3" height="1" fill="#000"/>
<text x="1205" y="501.8" fill="#000" stroke="#000" textLength="33" lengthAdjust="spacingAndGlyphs">2010.48</text>
<rect x="1200" y="530" width="3" height="1" fill="#000"/>
<text x="1205" y="533.8" fill="#000" stroke="#000" textLength="33" lengthAdjust="spacingAndGlyphs">2001.58</text>
<rect x="1202" y="278" width="39" height="11" fill="#0000FF"/><text x="1205" y="287" fill="#fff" stroke="#fff" textLength="33" lengthAdjust="spacingAndGlyphs">2070.42</text>
<rect x="1202" y="356" width="39" height="11" fill="#0000FF"/><text x="1205" y="365" fill="#fff" stroke="#fff" textLength="33" lengthAdjust="spacingAndGlyphs">2048.49</text>
<rect x="1202" y="365" width="39" height="11" fill="#0000FF"/><text x="1205" y="374" fill="#fff" stroke="#fff" textLength="33" lengthAdjust="spacingAndGlyphs">2046.04</text>
<rect x="1202" y="395" width="39" height="11" fill="#0000FF"/><text x="1205" y="404" fill="#fff" stroke="#fff" textLength="33" lengthAdjust="spacingAndGlyphs">2037.79</text>
<rect x="1202" y="404" width="39" height="11" fill="#0000FF"/><text x="1205" y="413" fill="#fff" stroke="#fff" textLength="33" lengthAdjust="spacingAndGlyphs">2035.28</text>
<rect x="1202" y="471" width="39" height="11" fill="#0000FF"/><text x="1205" y="480" fill="#fff" stroke="#fff" textLength="33" lengthAdjust="spacingAndGlyphs">2016.68</text>
<rect x="1202" y="507" width="39" height="11" fill="#0000FF"/><text x="1205" y="516" fill="#fff" stroke="#fff" textLength="33" lengthAdjust="spacingAndGlyphs">2006.60</text>
<rect x="1202" y="524" width="39" height="11" fill="#0000FF"/><text x="1205" y="533" fill="#fff" stroke="#fff" textLength="33" lengthAdjust="spacingAndGlyphs">2001.88</text>
<rect x="1202" y="447" width="39" height="11" fill="#A9A9A9"/><text x="1205" y="456" fill="#fff" stroke="#fff" textLength="33" lengthAdjust="spacingAndGlyphs">2023.37</text>
<rect x="1202" y="9" width="39" height="11" fill="#696969"/><text x="1205" y="18" fill="#fff" stroke="#fff" textLength="33" lengthAdjust="spacingAndGlyphs">2145.00</text>
<rect x="1202" y="27" width="39" height="11" fill="#696969"/><text x="1205" y="36" fill="#fff" stroke="#fff" textLength="33" lengthAdjust="spacingAndGlyphs">2140.00</text>
<rect x="1202" y="45" width="39" height="11" fill="#696969"/><text x="1205" y="54" fill="#fff" stroke="#fff" textLength="33" lengthAdjust="spacingAndGlyphs">2135.00</text>
<rect x="1202" y="63" width="39" height="11" fill="#696969"/><text x="1205" y="72" fill="#fff" stroke="#fff" textLength="33" lengthAdjust="spacingAndGlyphs">2130.00</text>
<rect x="1202" y="81" width="39" height="11" fill="#696969"/><text x="1205" y="90" fill="#fff" stroke="#fff" textLength="33" lengthAdjust="spacingAndGlyphs">2125.00</text>
<rect x="1202" y="99" width="39" height="11" fill="#696969"/><text x="1205" y="108" fill="#fff" stroke="#fff" textLength="33" lengthAdjust="spacingAndGlyphs">2120.00</text>
<rect x="1202" y="117" width="39" height="11" fill="#696969"/><text x="1205" y="126" fill="#fff" stroke="#fff" textLength="33" lengthAdjust="spacingAndGlyphs">2115.00</text>
<rect x="1202" y="135" width="39" height="11" fill="#696969"/><text x="1205" y="144" fill="#fff" stroke="#fff" textLength="33" lengthAdjust="spacingAndGlyphs">2110.00</text>
<rect x="1202" y="153" width="39" height="11" fill="#696969"/><text x="1205" y="162" fill="#fff" stroke="#fff" textLength="33" lengthAdjust="spacingAndGlyphs">2105.00</text>
<rect x="1202" y="171" width="39" height="11" fill="#696969"/><text x="1205" y="180" fill="#fff" stroke="#fff" textLength="33" lengthAdjust="spacingAndGlyphs">2100.00</text>
<rect x="1202" y="189" width="39" height="11" fill="#696969"/><text x="1205" y="198" fill="#fff" stroke="#fff" textLength="33" lengthAdjust="spacingAndGlyphs">2095.00</text>
<rect x="1202" y="207" width="39" height="11" fill="#696969"/><text x="1205" y="216" fill="#fff" stroke="#fff" textLength="33" lengthAdjust="spacingAndGlyphs">2090.00</text>
<rect x="1202" y="225" width="39" height="11" fill="#696969"/><text x="1205" y="234" fill="#fff" stroke="#fff" textLength="33" lengthAdjust="spacingAndGlyphs">2085.00</text>
<rect x="1202" y="243" width="39" height="11" fill="#696969"/><text x="1205" y="252" fill="#fff" stroke="#fff" textLength="33" lengthAdjust="spacingAndGlyphs">2080.00</text>
<rect x="1202" y="261" width="39" height="11" fill="#696969"/><text x="1205" y="270" fill="#fff" stroke="#fff" textLength="33" lengthAdjust="spacingAndGlyphs">2075.00</text>
<rect x="1202" y="279" width="39" height="11" fill="#696969"/><text x="1205" y="288" fill="#fff" stroke="#fff" textLength="33" lengthAdjust="spacingAndGlyphs">2070.00</text>
<rect x="1202" y="297" width="39" height="11" fill="#696969"/><text x="1205" y="306" fill="#fff" stroke="#fff" textLength="33" lengthAdjust="spacingAndGlyphs">2065.00</text>
<rect x="1202" y="315" width="39" height="11" fill="#696969"/><text x="1205" y="324" fill="#fff" stroke="#fff" textLength="33" lengthAdjust="spacingAndGlyphs">2060.00</text>
<rect x="1202" y="333" width="39" height="11" fill="#696969"/><text x="1205" y="342" fill="#fff" stroke="#fff" textLength="33" lengthAdjust="spacingAndGlyphs">2055.00</text>
<rect x="1202" y="351" width="39" height="11" fill="#696969"/><text x="1205" y="360" fill="#fff" stroke="#fff" textLength="33" lengthAdjust="spacingAndGlyphs">2050.00</text>
<rect x="1202" y="369" width="39" height="11" fill="#696969"/><text x="1205" y="378" fill="#fff" stroke="#fff" textLength="33" lengthAdjust="spacingAndGlyphs">2045.00</text>
<rect x="1202" y="387" width="39" height="11" fill="#696969"/><text x="1205" y="396" fill="#fff" stroke="#fff" textLength="33" lengthAdjust="spacingAndGlyphs">2040.00</text>
<rect x="1202" y="405" width="39" height="11" fill="#696969"/><text x="1205" y="414" fill="#fff" stroke="#fff" textLength="33" lengthAdjust="spacingAndGlyphs">2035.00</text>
<rect x="1202" y="423" width="39" height="11" fill="#696969"/><text x="1205" y="432" fill="#fff" stroke="#fff" textLength="33" lengthAdjust="spacingAndGlyphs">2030.00</text>
<rect x="1202" y="441" width="39" height="11" fill="#696969"/><text x="1205" y="450" fill="#fff" stroke="#fff" textLength="33" lengthAdjust="spacingAndGlyphs">2025.00</text>
<rect x="1202" y="459" width="39" height="11" fill="#696969"/><text x="1205" y="468" fill="#fff" stroke="#fff" textLength="33" lengthAdjust="spacingAndGlyphs">2020.00</text>
<rect x="1202" y="477" width="39" height="11" fill="#696969"/><text x="1205" y="486" fill="#fff" stroke="#fff" textLength="33" lengthAdjust="spacingAndGlyphs">2015.00</text>
<rect x="1202" y="495" width="39" height="11" fill="#696969"/><text x="1205" y="504" fill="#fff" stroke="#fff" textLength="33" lengthAdjust="spacingAndGlyphs">2010.00</text>
<rect x="1202" y="513" width="39" height="11" fill="#696969"/><text x="1205" y="522" fill="#fff" stroke="#fff" textLength="33" lengthAdjust="spacingAndGlyphs">2005.00</text>
<rect x="1202" y="531" width="39" height="11" fill="#696969"/><text x="1205" y="540" fill="#fff" stroke="#fff" textLength="33" lengthAdjust="spacingAndGlyphs">2000.00</text>
<rect x="1202" y="549" width="39" height="11" fill="#696969"/><text x="1205" y="558" fill="#fff" stroke="#fff" textLength="33" lengthAdjust="spacingAndGlyphs">1995.00</text>
<rect x="1200" y="565" width="4" height="1" fill="#000"/><text x="1205" y="573" fill="#000" stroke="#000" textLength="27.5" lengthAdjust="spacingAndGlyphs">100.00</text>
<rect x="1200" y="606" width="4" height="1" fill="#000"/><text x="1205" y="610" fill="#000" stroke="#000" textLength="22.5" lengthAdjust="spacingAndGlyphs">70.00</text>
<rect x="1200" y="661" width="4" height="1" fill="#000"/><text x="1205" y="665" fill="#000" stroke="#000" textLength="22.5" lengthAdjust="spacingAndGlyphs">30.00</text>
<rect x="1200" y="702" width="4" height="1" fill="#000"/><text x="1205" y="701" fill="#000" stroke="#000" textLength="17.3" lengthAdjust="spacingAndGlyphs">0.00</text>
</g>
<g id="time">
<rect x="0" y="704" width="1" height="4" fill="#000"/>
<text x="0.5" y="716" fill="#000" stroke="#000" textLength="45.5" lengthAdjust="spacingAndGlyphs">1 Dec 2023</text>
<rect x="64" y="704" width="1" height="4" fill="#000"/>
<text x="65" y="716" fill="#000" stroke="#000" textLength="48.5" lengthAdjust="spacingAndGlyphs">1 Dec 15:45</text>
<rect x="128" y="704" width="1" height="4" fill="#000"/>
<text x="129" y="716" fill="#000" stroke="#000" textLength="48.5" lengthAdjust="spacingAndGlyphs">1 Dec 19:45</text>
<rect x="192" y="704" width="1" height="4" fill="#000"/>
<text x="193" y="716" fill="#000" stroke="#000" textLength="48.5" lengthAdjust="spacingAndGlyphs">1 Dec 23:45</text>
<rect x="256" y="704" width="1" height="4" fill="#000"/>
<text x="257" y="716" fill="#000" stroke="#000" textLength="48.5" lengthAdjust="spacingAndGlyphs">4 Dec 04:45</text>
<rect x="320" y="704" width="1" height="4" fill="#000"/>
<text x="321" y="716" fill="#000" stroke="#000" textLength="48.5" lengthAdjust="spacingAndGlyphs">4 Dec 08:45</text>
<rect x="384" y="704" width="1" height="4" fill="#000"/>
<text x="385" y="716" fill="#000" stroke="#000" textLength="48.5" lengthAdjust="spacingAndGlyphs">4 Dec 12:45</text>
<rect x="448" y="704" width="1" height="4" fill="#000"/>
<text x="449" y="716" fill="#000" stroke="#000" textLength="48.5" lengthAdjust="spacingAndGlyphs">4 Dec 16:45</text>
<rect x="512" y="704" width="1" height="4" fill="#000"/>
<text x="513" y="716" fill="#000" stroke="#000" textLength="48.5" lengthAdjust="spacingAndGlyphs">4 Dec 20:45</text>
<rect x="576" y="704" width="1" height="4" fill="#000"/>
<text x="577" y="716" fill="#000" stroke="#000" textLength="48.5" lengthAdjust="spacingAndGlyphs">5 Dec 01:45</text>
<rect x="640" y="704" width="1" height="4" fill="#000"/>
<text x="641" y="716" fill="#000" stroke="#000" textLength="48.5" lengthAdjust="spacingAndGlyphs">5 Dec 05:45</text>
<rect x="704" y="704" width="1" height="4" fill="#000"/>
<text x="705" y="716" fill="#000" stroke="#000" textLength="48.5" lengthAdjust="spacingAndGlyphs">5 Dec 09:45</text>
<rect x="768" y="704" width="1" height="4" fill="#000"/>
<text x="769" y="716" fill="#000" stroke="#000" textLength="48.5" lengthAdjust="spacingAndGlyphs">5 Dec 13:45</text>
<rect x="832" y="704" width="1" height="4" fill="#000"/>
<text x="833" y="716" fill="#000" stroke="#000" textLength="48.5" lengthAdjust="spacingAndGlyphs">5 Dec 17:45</text>
<rect x="896" y="704" width="1" height="4" fill="#000"/>
<text x="897" y="716" fill="#000" stroke="#000" textLength="48.5" lengthAdjust="spacingAndGlyphs">5 Dec 21:45</text>
<rect x="960" y="704" width="1" height="4" fill="#000"/>
<text x="961" y="716" fill="#000" stroke="#000" textLength="48.5" lengthAdjust="spacingAndGlyphs">6 Dec 02:45</text>
<rect x="1024" y="704" width="1" height="4" fill="#000"/>
<text x="1025" y="716" fill="#000" stroke="#000" textLength="48.5" lengthAdjust="spacingAndGlyphs">6 Dec 06:45</text>
</g>
</svg></body></html>
